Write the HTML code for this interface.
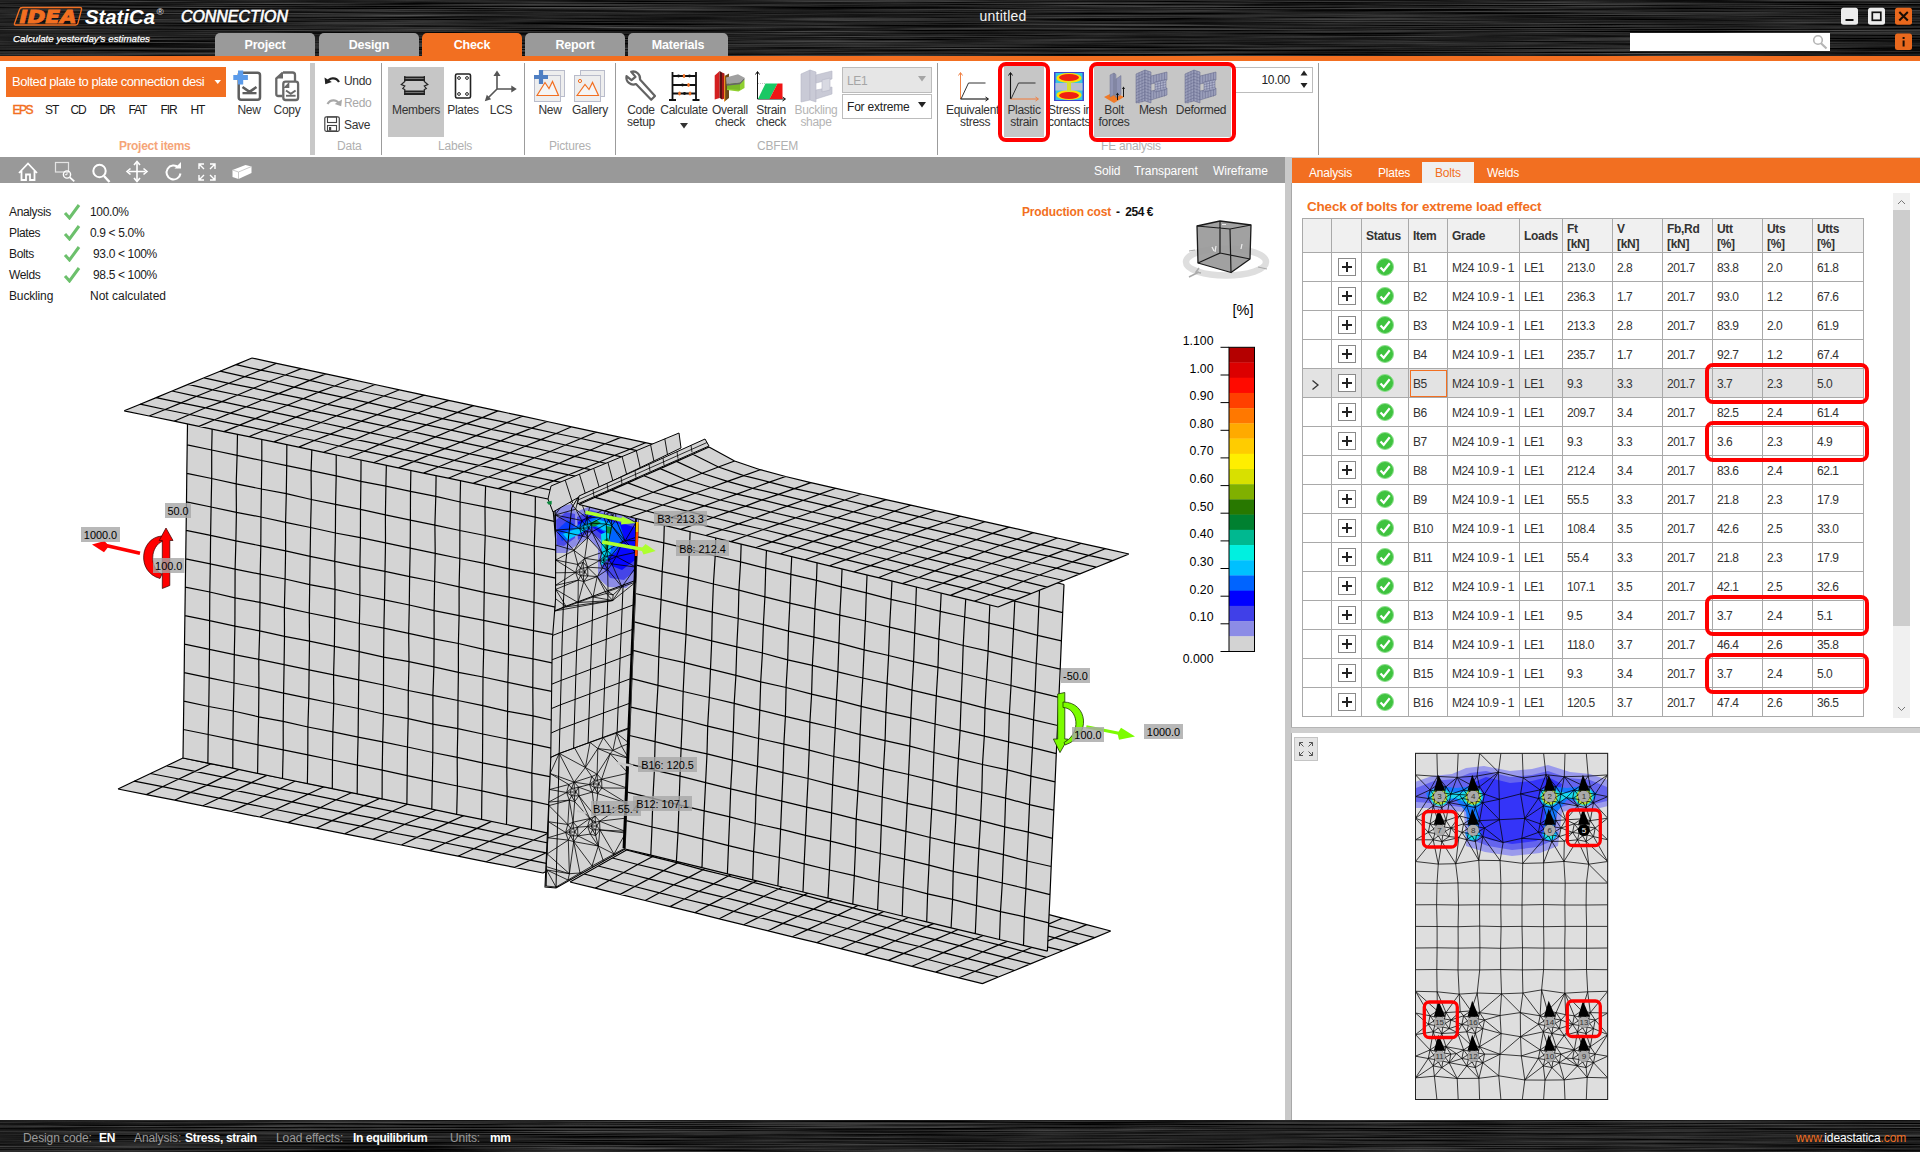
<!DOCTYPE html>
<html lang="en"><head><meta charset="utf-8"><title>IDEA StatiCa Connection - untitled</title>
<style>
*{box-sizing:border-box;margin:0;padding:0}
html,body{width:1920px;height:1152px;overflow:hidden;background:#fff}
body{font-family:"Liberation Sans",sans-serif;font-size:12px;color:#1a1a1a;position:relative}
.abs{position:absolute}
.brushed{background-color:#0d0d0d;background-image:
 repeating-linear-gradient(180deg,rgba(255,255,255,0) 0,rgba(255,255,255,.10) 1px,rgba(255,255,255,0) 2px,rgba(255,255,255,.05) 3px,rgba(255,255,255,0) 5px,rgba(255,255,255,.13) 6px,rgba(255,255,255,0) 7px),
 repeating-linear-gradient(180deg,rgba(255,255,255,0) 0,rgba(255,255,255,.06) 2px,rgba(255,255,255,0) 3px,rgba(255,255,255,.09) 4px,rgba(255,255,255,0) 11px),
 linear-gradient(90deg,rgba(255,255,255,.04),rgba(255,255,255,0) 30%,rgba(255,255,255,.05) 60%,rgba(255,255,255,0))}
#hdr{left:0;top:0;width:1920px;height:56px}
#oline{left:0;top:56px;width:1920px;height:5px;background:#f26f21}
.tab{position:absolute;top:33px;height:23px;width:100px;background:#9a9a9a;color:#fff;font-weight:bold;font-size:12.500px;text-align:center;line-height:24px;border-radius:5px 5px 0 0;letter-spacing:-.2px}
.tab.on{background:#f26f21}
#ribbon{left:0;top:61px;width:1920px;height:95px;background:#fff}
.rl{position:absolute;margin-top:2px;font-size:12px;color:#333;text-align:center;line-height:11.7px;white-space:nowrap;letter-spacing:-.3px}
.grp{position:absolute;top:139px;font-size:12px;color:#b0b0b0;text-align:center;white-space:nowrap;letter-spacing:-.2px}
.vsep{position:absolute;top:63px;height:92px;width:1px;background:#9c9c9c}
#tbar{left:0;top:157px;width:1285px;height:26px;background:#999}
#split{left:1285px;top:157px;width:7px;height:963px;background:#c9c9c9}
#rtabs{left:1291.500px;top:157.500px;width:629px;height:25.500px;background:#f26f21}
.rt{position:absolute;top:166px;font-size:12px;color:#fff;letter-spacing:-.2px;white-space:nowrap}
#status{left:0;top:1120px;width:1920px;height:32px}
.st{position:absolute;top:1131px;font-size:12px;white-space:nowrap;letter-spacing:-.1px}
.info{position:absolute;font-size:12px;color:#1a1a1a;white-space:nowrap;letter-spacing:-.35px}
table.bt{position:absolute;left:1302px;top:218px;border-collapse:collapse;font-size:12px;color:#333;table-layout:fixed}
table.bt td,table.bt th{border:1px solid #a9a9a9;height:29px;padding:2px 0 0 4px;text-align:left;white-space:nowrap;overflow:hidden;letter-spacing:-.45px;font-weight:normal}
table.bt th{background:#f0f0f0;font-weight:bold;height:34px;line-height:14.5px;color:#333;letter-spacing:-.3px;vertical-align:middle}
table.bt tr.sel td{background:#e3e3e3}
.pb{display:inline-block;width:18px;height:18px;border:1px solid #8a8a8a;background:#fff;position:relative;vertical-align:middle;margin-left:2px;top:-1px}
.pb:before{content:"";position:absolute;left:3px;top:7px;width:10px;height:2px;background:#222}
.pb:after{content:"";position:absolute;left:7px;top:3px;width:2px;height:10px;background:#222}
.ok{display:inline-block;width:18px;height:18px;border-radius:9px;background:#3fc33f;border:1.5px solid #8fe08f;position:relative;vertical-align:middle;margin-left:10px;top:-1px}
.redbox{position:absolute;border:4px solid #f00;border-radius:8px}
</style></head><body>
<svg class="abs" style="left:0;top:0px" width="1920" height="56"><filter id="br1" x="0" y="0" width="100%" height="100%" color-interpolation-filters="sRGB"><feTurbulence type="fractalNoise" baseFrequency="0.004 0.95" numOctaves="4" seed="4"/><feColorMatrix type="matrix" values="0.5 0 0 0 -0.125  0.5 0 0 0 -0.125  0.5 0 0 0 -0.125  0 0 0 0 1"/></filter><rect width="1920" height="56" fill="#111" filter="url(#br1)"/></svg>
<svg class="abs" style="left:0;top:0" width="700" height="56" viewBox="0 0 700 56">
<g font-family="Liberation Sans, sans-serif" font-style="italic" font-weight="bold">
<path d="M22.5 7.5 H80 q2 0 1.5 2 L78 23 q-.5 2 -2.5 2 H15.5 q-1.5 0 -1 -1.5 L19.5 9.5 q.6 -2 3 -2 Z" fill="none" stroke="#f26f21" stroke-width="1.3"/>
<text x="19.500" y="22.800" font-size="17" font-family="DejaVu Sans, Liberation Sans, sans-serif" fill="#f26f21" textLength="57" lengthAdjust="spacingAndGlyphs" stroke="#f26f21" stroke-width=".9">IDEA</text>
<text x="85" y="24" font-size="21" fill="#fff" textLength="70" lengthAdjust="spacingAndGlyphs">StatiCa</text>
<text x="156.500" y="15" font-size="9.500" fill="#e8e8e8" font-weight="normal">®</text>
<text x="181" y="22" font-size="16.5" fill="#fff" font-weight="normal" stroke="#fff" stroke-width=".65" textLength="107" lengthAdjust="spacingAndGlyphs">CONNECTION</text>
<text x="13" y="42" font-size="9.500" fill="#fff" font-weight="normal" stroke="#fff" stroke-width=".25" textLength="137" lengthAdjust="spacingAndGlyphs">Calculate yesterday's estimates</text>
</g></svg>
<div class="abs" style="left:903px;top:8px;width:200px;text-align:center;color:#f4f4f4;font-size:14px;letter-spacing:.25px">untitled</div>
<svg class="abs" style="left:1830px;top:0" width="90" height="56" viewBox="1830 0 90 56">
<rect x="1841" y="7.800" width="17" height="17" rx="2.500" fill="#ececec"/>
<rect x="1845.500" y="19" width="8" height="2" fill="#111"/>
<rect x="1868" y="7.800" width="17" height="17" rx="2.500" fill="#ececec"/>
<rect x="1872.300" y="12.300" width="8.500" height="8" fill="none" stroke="#111" stroke-width="1.700"/>
<rect x="1895" y="7.800" width="17" height="17" rx="2.500" fill="#e9681d"/>
<path d="M1899.300 12 l8.500 8.500 M1907.800 12 l-8.500 8.500" stroke="#1a0d05" stroke-width="2"/>
<rect x="1895" y="33.500" width="17" height="16.500" rx="2.500" fill="#e9681d"/>
<rect x="1902.6" y="37" width="2" height="2" fill="#1a0d05"/><rect x="1902.6" y="40.5" width="2" height="6" fill="#1a0d05"/>
</svg>
<div class="abs" style="left:1630px;top:33px;width:200px;height:18px;background:#fff"></div>
<svg class="abs" style="left:1810px;top:33px" width="20" height="17" viewBox="0 0 20 17"><circle cx="8" cy="7" r="4.3" fill="none" stroke="#b5b5b5" stroke-width="1.6"/><path d="M11 10.3 L16.5 15.5" stroke="#b5b5b5" stroke-width="2.2"/></svg>
<div class="tab" style="left:215px">Project</div>
<div class="tab" style="left:319px">Design</div>
<div class="tab on" style="left:422px">Check</div>
<div class="tab" style="left:525px">Report</div>
<div class="tab" style="left:628px">Materials</div>
<div id="oline" class="abs"></div>
<div id="ribbon" class="abs"></div>
<div class="abs" style="left:6px;top:67px;width:220px;height:30px;background:#f26f21;color:#fff;font-size:13px;line-height:30px;padding-left:6px;letter-spacing:-.45px;white-space:nowrap">Bolted plate to plate connection desi</div>
<svg class="abs" style="left:214px;top:79px" width="8" height="6"><path d="M.5 1 h6.5 l-3.25 4z" fill="#fff"/></svg>
<div class="abs" style="left:12.5px;top:103px;font-size:12px;color:#f26f21;letter-spacing:-1.1px;-webkit-text-stroke:.45px #f26f21;letter-spacing:-1.5px;">EPS</div>
<div class="abs" style="left:45px;top:103px;font-size:12px;color:#1a1a1a;letter-spacing:-1.1px;">ST</div>
<div class="abs" style="left:70.5px;top:103px;font-size:12px;color:#1a1a1a;letter-spacing:-1.1px;">CD</div>
<div class="abs" style="left:99.5px;top:103px;font-size:12px;color:#1a1a1a;letter-spacing:-1.1px;">DR</div>
<div class="abs" style="left:128.5px;top:103px;font-size:12px;color:#1a1a1a;letter-spacing:-1.1px;">FAT</div>
<div class="abs" style="left:160.5px;top:103px;font-size:12px;color:#1a1a1a;letter-spacing:-1.1px;">FIR</div>
<div class="abs" style="left:190.5px;top:103px;font-size:12px;color:#1a1a1a;letter-spacing:-1.1px;">HT</div>
<div class="grp" style="left:119px;color:#f5a578;font-weight:bold;letter-spacing:-.3px">Project items</div>
<svg class="abs" style="left:232px;top:66px" width="76" height="40" viewBox="232 66 76 40">
<rect x="238.700" y="72.700" width="21.300" height="27" rx="2.500" fill="#fff" stroke="#5e5e5e" stroke-width="2.500"/>
<path d="M242.500 87 l7 4.800 l7 -4.800" fill="none" stroke="#5e5e5e" stroke-width="2.600"/><rect x="242.500" y="92" width="14" height="2.300" fill="#5e5e5e"/>
<path d="M240.600 70.600 v13.800 M233.300 77.500 h14.600" stroke="#5b9bea" stroke-width="5.200"/>
<path d="M283 72.500 h9.500 a2.500 2.500 0 0 1 2.500 2.500 v6 M276.300 94 v-15.500 l6.500 -6" fill="none" stroke="#686868" stroke-width="2.300"/>
<path d="M276.300 94 q0 2 2 2 h4" fill="none" stroke="#686868" stroke-width="2.300"/>
<path d="M283 72 v6.500 h-6.500z" fill="#686868"/>
<rect x="283.300" y="81.700" width="14.800" height="18.300" rx="2.300" fill="#fff" stroke="#686868" stroke-width="2.300"/>
<path d="M283.300 88 l6 -6.300 v6.300z" fill="#686868"/>
<path d="M286 90.500 l4.800 3.300 l4.800 -3.300" fill="none" stroke="#686868" stroke-width="2"/><rect x="286" y="94.800" width="9.600" height="1.900" fill="#686868"/>
</svg>
<div class="rl" style="left:229px;top:103px;width:40px">New</div>
<div class="rl" style="left:267px;top:103px;width:40px">Copy</div>
<div class="abs" style="left:310px;top:63px;width:5px;height:92px;background:#c8c8c8"></div>
<svg class="abs" style="left:322px;top:70px" width="22" height="64" viewBox="322 70 22 64">
<path d="M327 82.500 c2 -5 9 -6 12 -.5" fill="none" stroke="#222" stroke-width="2.200"/><path d="M324.500 77.500 l.8 6.800 l6.500 -2.200z" fill="#222"/>
<path d="M339.500 104.500 c-2 -5 -9 -6 -12 -.5" fill="none" stroke="#a8a8a8" stroke-width="2.200"/><path d="M342 99.500 l-.8 6.800 l-6.500 -2.200z" fill="#a8a8a8"/>
<rect x="324.800" y="116.800" width="14.500" height="14.500" rx="1.500" fill="#fff" stroke="#444" stroke-width="1.200"/>
<rect x="327.500" y="117" width="9" height="5.500" fill="none" stroke="#444" stroke-width="1.100"/><rect x="327.500" y="125.500" width="9" height="5.500" fill="none" stroke="#444" stroke-width="1.100"/><rect x="329" y="127" width="2.200" height="3.500" fill="#444"/>
</svg>
<div class="rl" style="left:344px;top:74px;">Undo</div>
<div class="rl" style="left:344px;top:96px;color:#a8a8a8">Redo</div>
<div class="rl" style="left:344px;top:118px;">Save</div>
<div class="grp" style="left:337px">Data</div>
<div class="vsep" style="left:381px"></div>
<div class="abs" style="left:388px;top:67px;width:56px;height:70px;background:#c6c6c6"></div>
<svg class="abs" style="left:388px;top:66px" width="136" height="40" viewBox="388 66 136 40">
<g stroke="#222" fill="none"><path d="M404 77.500 h21 M404 80 h21 M404 91.500 h21 M404 94 h21" stroke-width="1.800"/>
<path d="M404.800 76 v5.500 l-3.500 3 l3.500 1.500 l-2 2.500 l2 1 v5.500 M424.300 76 v5.500 l3.500 3 l-3.500 1.500 l2 2.500 l-2 1 v5.500" stroke-width="1.200"/></g>
<rect x="455.500" y="74" width="15" height="24" rx="1.500" fill="#fff" stroke="#222" stroke-width="1.600"/>
<g fill="none" stroke="#222" stroke-width="1"><circle cx="459" cy="78" r="1.400"/><circle cx="467" cy="78" r="1.400"/><circle cx="459" cy="94" r="1.400"/><circle cx="467" cy="94" r="1.400"/></g>
<g stroke="#555" stroke-width="1.600" fill="#555"><path d="M497 89 V73 M497 89 H514 M497 89 L487 99" fill="none"/><path d="M497 70.500 l3.600 5.500 h-7.200z M516.800 89 l-5.500 3.600 v-7.200z M484.800 101.200 l2 -6.400 l4.400 4.400z" stroke="none"/></g>
</svg>
<div class="rl" style="left:388px;top:103px;width:56px">Members</div>
<div class="rl" style="left:443px;top:103px;width:40px">Plates</div>
<div class="rl" style="left:481px;top:103px;width:40px">LCS</div>
<div class="grp" style="left:438px">Labels</div>
<div class="vsep" style="left:524px"></div>
<svg class="abs" style="left:530px;top:66px" width="84" height="40" viewBox="530 66 84 40">
<g fill="#eee" stroke="#b9bccb" stroke-width="1"><rect x="540.500" y="70.500" width="24" height="26"/><rect x="534.500" y="75.500" width="26" height="26"/>
<rect x="580.500" y="70.500" width="24" height="26"/><rect x="574.500" y="75.500" width="26" height="26"/></g>
<path d="M537 95.500 l8 -13 l4 6 l3.500 -7 l6 14z" fill="#f5f5f5" stroke="#f26f21" stroke-width="1.200"/>
<path d="M577 95.500 l8 -11 l4 5 l3.500 -7 l6 13z" fill="#f5f5f5" stroke="#f26f21" stroke-width="1.200"/><circle cx="580" cy="81" r="1.600" fill="none" stroke="#f26f21" stroke-width="1"/>
<path d="M541 70 v14 M534 77 h14" stroke="#4f7fc3" stroke-width="4.200"/>
</svg>
<div class="rl" style="left:530px;top:103px;width:40px">New</div>
<div class="rl" style="left:568px;top:103px;width:44px">Gallery</div>
<div class="grp" style="left:549px">Pictures</div>
<div class="vsep" style="left:615px"></div>
<svg class="abs" style="left:620px;top:66px" width="226" height="40" viewBox="620 66 226 40">
<g fill="#fff" stroke="#636363" stroke-width="2.200" stroke-linejoin="round"><path d="M640 79.500 L655 96 l-3.800 3.800 L636 84 a7 7 0 0 1 -9.500 -7.800 l5 4 l4 -3.300 l-4.300 -5.200 a7 7 0 0 1 8.800 7.800z"/></g>
<g stroke="#111" stroke-width="1.800" fill="none"><path d="M672.500 72 v28 M696 72 v28 M669 100 h7 M692.500 100 h7 M672.500 76 h23.500 M672.500 85 h23.500 M672.500 93.500 h23.500" /></g>
<g fill="#111"><circle cx="678.500" cy="76" r="1.400"/><circle cx="689.500" cy="76" r="1.400"/><circle cx="682.500" cy="85" r="1.400"/><circle cx="684.500" cy="93.500" r="1.400"/></g>
<g fill="#f26f21"><ellipse cx="684" cy="76" rx="1.300" ry="2"/><ellipse cx="688.500" cy="85" rx="1.300" ry="2"/><ellipse cx="679.500" cy="93.500" rx="1.300" ry="2"/><ellipse cx="690" cy="93.500" rx="1.300" ry="2"/></g>
<path d="M714.700 75.500 l5 -4.500 v27 l-5 1.500z" fill="#d42020"/><path d="M719.700 71 l2.300 1.500 v27 l-2.300 -1.500z" fill="#5a1010"/><path d="M722 72.500 l2.500 1 v25 l-2.500 1z" fill="#a81818"/>
<path d="M724.500 76 l4.500 -2.500 v24.500 l-4.500 3.500z" fill="#6b4a1a"/><path d="M724 76 l1.200 -.5 v25.500 l-1.200 .8z" fill="#f09020"/>
<path d="M727 84 l13 -1.500 l4.500 -3 v8.500 l-6 3.500 l-11.500 -1.500z" fill="#8fd030"/><path d="M727 84 l13 -1.500 v7.500 l-13 -1.200z" fill="#7ab828"/>
<path d="M726 77.500 l12 -3.200 l6.500 3.500 l-4.500 4.800 l-13.500 1.500z" fill="#a0a0a0"/><path d="M726.500 84 l13.500 -1.500 l4.500 -4.700 v1.800 l-4.500 4.700 l-13.500 1.500z" fill="#666"/>
<g stroke="#111" stroke-width="1" fill="none"><path d="M757.500 99 V72 M757.500 99 H785"/><path d="M755.500 74.500 l2 -3 l2 3 M782.500 97 l3 2 l-3 2"/></g>
<path d="M758 99 l7.500 -15.500 h12 l-8 15.500z" fill="#19c864"/><path d="M769.500 99 l8 -15.500 h5 v15.500z" fill="#f01414"/><path d="M758 83.500 h8" stroke="#999" stroke-width=".6" stroke-dasharray="1 1"/>
<g fill="#c9cad6" stroke="#b5b7c6" stroke-width=".6"><path d="M801 74 l9 -4 v30 l-9 2z"/><path d="M810 70 l6 2 v30 l-6 -2z"/><path d="M816 75 l16 -4 v8 l-16 4z M816 90 l16 -3 v7 l-16 5z"/><path d="M822 80 l8 -2 v12 l-8 2z" fill="#d8d9e2"/></g>
</svg>
<div class="rl" style="left:621px;top:103px;width:40px">Code<br>setup</div>
<div class="rl" style="left:659px;top:103px;width:50px">Calculate</div>
<svg class="abs" style="left:680px;top:123px" width="9" height="6"><path d="M0 0 h8 l-4 5.500z" fill="#333"/></svg>
<div class="rl" style="left:710px;top:103px;width:40px">Overall<br>check</div>
<div class="rl" style="left:751px;top:103px;width:40px">Strain<br>check</div>
<div class="rl" style="left:791px;top:103px;width:50px;color:#b4b4b4">Buckling<br>shape</div>
<div class="abs" style="left:842px;top:67px;width:90px;height:26px;background:#e6e6e6;border:1px solid #bcbcbc;color:#a5a5a5;font-size:12px;line-height:26px;padding-left:4px;letter-spacing:-.3px">LE1</div>
<svg class="abs" style="left:918px;top:76px" width="9" height="6"><path d="M0 0 h8 l-4 5.500z" fill="#a5a5a5"/></svg>
<div class="abs" style="left:842px;top:94px;width:90px;height:25px;background:#fff;border:1px solid #bcbcbc;color:#222;font-size:12px;line-height:25px;padding-left:4px;letter-spacing:-.2px">For extreme</div>
<svg class="abs" style="left:918px;top:102px" width="9" height="6"><path d="M0 0 h8 l-4 5.500z" fill="#222"/></svg>
<div class="grp" style="left:757px">CBFEM</div>
<div class="vsep" style="left:937px"></div>
<div class="abs" style="left:1004px;top:66px;width:40px;height:71px;background:#c6c6c6"></div>
<div class="abs" style="left:1094px;top:66px;width:137px;height:71px;background:#c6c6c6"></div>
<div class="abs" style="left:1233px;top:67px;width:80px;height:26px;border:1px solid #bcbcbc;background:#fff;font-size:12px;line-height:24px;text-align:right;padding-right:22px;color:#222;letter-spacing:-.3px">10.00</div>
<svg class="abs" style="left:1300px;top:70px" width="9" height="20"><path d="M.5 5.500 h7 l-3.500 -5z M.5 13 h7 l-3.500 5z" fill="#222"/></svg>
<svg class="abs" style="left:940px;top:66px" width="296" height="40" viewBox="940 66 296 40">
<g fill="none"><path d="M960.500 99 V73" stroke="#f08246" stroke-width="1"/><path d="M958.500 75.500 l2 -3 l2 3" stroke="#f08246" stroke-width="1"/><path d="M960.500 99 H988" stroke="#111" stroke-width="1.100"/><path d="M985.500 97 l3 2 l-3 2" stroke="#111" stroke-width="1"/><path d="M961 99 l7.500 -16 h17" stroke="#333" stroke-width="1"/></g>
<g fill="none"><path d="M1010.500 99 V73" stroke="#111" stroke-width="1.100"/><path d="M1008.500 75.500 l2 -3 l2 3" stroke="#111" stroke-width="1"/><path d="M1010.500 99 H1038" stroke="#f08246" stroke-width="1.100"/><path d="M1035.500 97 l3 2 l-3 2" stroke="#f08246" stroke-width="1"/><path d="M1011 99 l7.500 -16 h17" stroke="#333" stroke-width="1"/></g>
<rect x="1054" y="72" width="30" height="29" fill="#3a46d0"/><rect x="1055.500" y="73" width="27" height="27" fill="#36c8e0"/>
<ellipse cx="1069" cy="78" rx="12.500" ry="5" fill="#ffe000"/><ellipse cx="1069" cy="77.500" rx="10" ry="3.500" fill="#f02010"/>
<ellipse cx="1069" cy="95" rx="12.500" ry="5" fill="#ffe000"/><ellipse cx="1069" cy="95.500" rx="10" ry="3.500" fill="#f02010"/>
<rect x="1055.500" y="83" width="11.500" height="7.500" fill="#b9bdd2"/><rect x="1071" y="83" width="11.500" height="7.500" fill="#b9bdd2"/><rect x="1067" y="81" width="4" height="11" fill="#d8e030"/>
<path d="M1104 97 l10 -5 l10 5 l-10 6z" fill="#f07a28"/><path d="M1110 75 l4 -2 v22 l-4 2z M1114 73 l2 1.500 v22 l-2 -1.500z M1116 79 l5 -3.500 v19 l-5 3z" fill="#9094b4" stroke="#70748f" stroke-width=".5"/>
<path d="M1117.500 100 v-6 M1123.500 97 v-9" stroke="#111" stroke-width="1"/><path d="M1116 95 l1.500 -2.500 l1.500 2.500z M1122 89 l1.500 -2.500 l1.500 2.500z" fill="#111"/>
<g fill="#9a9eba" stroke="#5f6386" stroke-width=".5"><path d="M1136 74 l9 -4 v31 l-9 2z"/><path d="M1145 70 l6 2 v31 l-6 -2z"/><path d="M1151 76 l16 -4 v8 l-16 4z M1151 91 l16 -3 v7 l-16 5z"/><path d="M1155 82 l11 -2.500 v10 l-11 2.500z" fill="#aeb2cc"/></g><path d="M1136 77.1 l9 -4 l6 2 M1136 80.2 l9 -4 l6 2 M1136 83.3 l9 -4 l6 2 M1136 86.4 l9 -4 l6 2 M1136 89.5 l9 -4 l6 2 M1136 92.6 l9 -4 l6 2 M1136 95.7 l9 -4 l6 2 M1136 98.8 l9 -4 l6 2 M1136 101.9 l9 -4 l6 2 M1139 72.7 v31 M1142 71.3 v31 M1148 71 v31 M1153.7 75.3 v8 M1153.7 90.5 v8 M1156.4 74.7 v8 M1156.4 90.0 v8 M1159.1 74.0 v8 M1159.1 89.5 v8 M1161.8 73.3 v8 M1161.8 89.0 v8 M1164.5 72.7 v8 M1164.5 88.5 v8 M1155 84.5 l11 -2.500 M1155 87.0 l11 -2.500 M1155 89.5 l11 -2.500 M1157.8 81.4 v10 M1160.5 80.8 v10 M1163.2 80.1 v10" fill="none" stroke="#5f6386" stroke-width=".45"/>
<g fill="#9a9eba" stroke="#5f6386" stroke-width=".5"><path d="M1185 74 l9 -4 v31 l-9 2z"/><path d="M1194 70 l6 2 v31 l-6 -2z"/><path d="M1200 76 l16 -4 v8 l-16 4z M1200 91 l16 -3 v7 l-16 5z"/><path d="M1204 82 l11 -2.500 v10 l-11 2.500z" fill="#aeb2cc"/></g><path d="M1185 77.1 l9 -4 l6 2 M1185 80.2 l9 -4 l6 2 M1185 83.3 l9 -4 l6 2 M1185 86.4 l9 -4 l6 2 M1185 89.5 l9 -4 l6 2 M1185 92.6 l9 -4 l6 2 M1185 95.7 l9 -4 l6 2 M1185 98.8 l9 -4 l6 2 M1185 101.9 l9 -4 l6 2 M1188 72.7 v31 M1191 71.3 v31 M1197 71 v31 M1202.7 75.3 v8 M1202.7 90.5 v8 M1205.4 74.7 v8 M1205.4 90.0 v8 M1208.1 74.0 v8 M1208.1 89.5 v8 M1210.8 73.3 v8 M1210.8 89.0 v8 M1213.5 72.7 v8 M1213.5 88.5 v8 M1204 84.5 l11 -2.500 M1204 87.0 l11 -2.500 M1204 89.5 l11 -2.500 M1206.8 81.4 v10 M1209.5 80.8 v10 M1212.2 80.1 v10" fill="none" stroke="#5f6386" stroke-width=".45"/>
</svg>
<div class="rl" style="left:943px;top:103px;width:56px;overflow:hidden;text-align:left;padding-left:3px">Equivalent<br><span style="padding-left:14px">stress</span></div>
<div class="rl" style="left:1004px;top:103px;width:40px">Plastic<br>strain</div>
<div class="rl" style="left:1048px;top:103px;width:42px;overflow:hidden;text-align:left">Stress in<br>contacts</div>
<div class="rl" style="left:1094px;top:103px;width:40px">Bolt<br>forces</div>
<div class="rl" style="left:1133px;top:103px;width:40px">Mesh</div>
<div class="rl" style="left:1171px;top:103px;width:60px">Deformed</div>
<div class="grp" style="left:1101px">FE analysis</div>
<div class="redbox" style="left:998px;top:62px;width:52px;height:80px"></div>
<div class="redbox" style="left:1089px;top:62px;width:147px;height:80px"></div>
<div class="vsep" style="left:1318px"></div>
<div class="abs" style="left:0;top:156.500px;width:1920px;height:1px;background:#d0d0d0"></div>
<div id="tbar" class="abs"></div>
<svg class="abs" style="left:0;top:157px" width="270" height="26" viewBox="0 157 270 26">
<g fill="none" stroke="#fff" stroke-width="1.800" stroke-linejoin="miter">
<path d="M19 173 l9 -9.500 l9 9.500 M21.500 171 v9 h4.500 v-5.500 h4 v5.500 h4.500 v-9" />
<rect x="55.500" y="162.500" width="13" height="9.500" stroke="#e4e4e4" stroke-width="1.200"/>
<circle cx="67" cy="174.500" r="3.600" stroke-width="1.400"/><path d="M69.800 177.300 l4.500 4" stroke-width="1.800"/><path d="M67 172.500 v2.200 h-2" stroke-width=".9"/>
<circle cx="99.500" cy="171" r="6.200" stroke-width="2"/><path d="M104 176 l5.500 6" stroke-width="2.400"/>
<path d="M137 163 v17 M128.500 171.500 h17" stroke-width="1.600"/><path d="M134 165 l3 -3.500 l3 3.500 M134 178 l3 3.500 l3 -3.500 M130.500 168.500 l-3.500 3 l3.500 3 M143.500 168.500 l3.500 3 l-3.500 3" stroke-width="1.600"/>
<path d="M178.500 167.500 a7 7 0 1 0 2 6" stroke-width="2"/><path d="M181 162 v6.500 h-6.500z" fill="#fff" stroke="none"/>
<path d="M199 169 v-5 h5 M199.500 164.500 l4.500 4.500 M215 169 v-5 h-5 M214.500 164.500 l-4.500 4.500 M199 175 v5 h5 M199.500 179.500 l4.500 -4.500 M215 175 v5 h-5 M214.500 179.500 l-4.500 -4.500" stroke-width="1.400"/>
</g>
<path d="M232.500 170 l13 -5 l6 1.500 v6.500 l-13 6 l-6 -2z" fill="#fff"/><path d="M232.500 170 l6 2 l13 -5.500 M238.500 172 v7" stroke="#bbb" stroke-width=".8" fill="none"/>
</svg>
<div class="abs" style="left:1094px;top:164px;color:#fff;font-size:12px;letter-spacing:-.05px">Solid</div>
<div class="abs" style="left:1134px;top:164px;color:#fff;font-size:12px;letter-spacing:-.05px">Transparent</div>
<div class="abs" style="left:1213px;top:164px;color:#fff;font-size:12px;letter-spacing:-.05px">Wireframe</div>
<div class="info" style="left:9px;top:205px">Analysis</div>
<div class="info" style="left:90px;top:205px">100.0%</div>
<svg class="abs" style="left:63px;top:203px" width="18" height="17"><path d="M2 10 l4.500 5 l9.500 -13" fill="none" stroke="#6cc06c" stroke-width="3"/></svg>
<div class="info" style="left:9px;top:226px">Plates</div>
<div class="info" style="left:90px;top:226px">0.9 &lt; 5.0%</div>
<svg class="abs" style="left:63px;top:224px" width="18" height="17"><path d="M2 10 l4.500 5 l9.500 -13" fill="none" stroke="#6cc06c" stroke-width="3"/></svg>
<div class="info" style="left:9px;top:247px">Bolts</div>
<div class="info" style="left:93px;top:247px">93.0 &lt; 100%</div>
<svg class="abs" style="left:63px;top:245px" width="18" height="17"><path d="M2 10 l4.500 5 l9.500 -13" fill="none" stroke="#6cc06c" stroke-width="3"/></svg>
<div class="info" style="left:9px;top:268px">Welds</div>
<div class="info" style="left:93px;top:268px">98.5 &lt; 100%</div>
<svg class="abs" style="left:63px;top:266px" width="18" height="17"><path d="M2 10 l4.500 5 l9.500 -13" fill="none" stroke="#6cc06c" stroke-width="3"/></svg>
<div class="info" style="left:9px;top:289px;letter-spacing:-.15px">Buckling</div>
<div class="info" style="left:90px;top:289px;letter-spacing:0">Not calculated</div>
<div class="abs" style="left:1022px;top:205px;font-size:12px;font-weight:bold;color:#f26f21;letter-spacing:-.15px;white-space:nowrap">Production cost</div>
<div class="abs" style="left:1116px;top:205px;font-size:12px;font-weight:bold;color:#111;letter-spacing:-.45px;white-space:nowrap">-&nbsp; 254 €</div>
<svg class="abs" style="left:0;top:183px" width="1284" height="937" viewBox="0 183 1284 937" font-family="Liberation Sans, sans-serif" shape-rendering="auto">
<path d="M118.0 789.0 L146.3 794.6 L174.7 800.2 L203.0 805.8 L231.3 811.4 L259.7 817.0 L288.0 822.6 L316.3 828.2 L344.7 833.8 L373.0 839.4 L401.3 845.0 L429.7 850.6 L458.0 856.2 L486.3 861.8 L514.7 867.4 L543.0 873.0 L558.6 865.8 L574.2 858.5 L589.9 851.2 L605.5 844.0 L621.1 836.8 L636.8 829.5 L652.4 822.2 L668.0 815.0 L640.0 809.1 L612.0 803.3 L584.0 797.4 L556.0 791.5 L528.0 785.7 L500.0 779.8 L472.0 773.9 L444.0 768.1 L416.0 762.2 L388.0 756.3 L360.0 750.5 L332.0 744.6 L304.0 738.7 L276.0 732.9 L248.0 727.0 L231.8 734.8 L215.5 742.5 L199.2 750.2 L183.0 758.0 L166.8 765.8 L150.5 773.5 L134.2 781.2Z" fill="#d4d4d4" stroke="none"/>
<path d="M118.0 789.0 L134.2 781.2 L150.5 773.5 L166.8 765.8 L183.0 758.0 L199.2 750.2 L215.5 742.5 L231.8 734.8 L248.0 727.0 M146.3 794.6 L162.5 786.7 L178.8 779.0 L195.0 771.4 L210.9 763.7 L227.1 756.0 L243.4 748.1 L259.8 740.7 L276.0 732.9 M174.7 800.2 L190.6 792.4 L207.1 785.1 L223.2 777.1 L239.6 769.2 L255.7 761.7 L271.5 753.9 L287.7 746.6 L304.0 738.7 M203.0 805.8 L219.0 798.2 L235.3 790.4 L251.4 782.6 L267.3 775.1 L283.7 767.5 L299.7 759.9 L315.9 752.1 L332.0 744.6 M231.3 811.4 L247.6 803.9 L263.4 796.2 L279.6 788.7 L295.8 780.8 L312.0 773.1 L327.8 765.8 L343.7 758.1 L360.0 750.5 M259.7 817.0 L275.5 809.5 L291.9 801.9 L308.0 794.2 L323.9 786.7 L339.9 779.1 L356.1 771.7 L371.9 764.0 L388.0 756.3 M288.0 822.6 L303.8 815.2 L320.1 807.7 L336.2 799.8 L351.9 792.5 L367.8 784.8 L383.8 777.1 L399.8 769.9 L416.0 762.2 M316.3 828.2 L332.1 820.6 L348.2 813.4 L364.0 805.6 L380.2 798.3 L396.3 790.8 L412.0 783.1 L428.0 775.8 L444.0 768.1 M344.7 833.8 L360.8 826.1 L376.3 818.7 L392.3 811.3 L408.4 803.7 L424.0 796.3 L440.1 788.9 L456.3 781.5 L472.0 773.9 M373.0 839.4 L388.9 832.0 L404.8 824.3 L420.8 817.2 L436.7 809.7 L452.3 802.1 L468.1 794.8 L483.9 787.0 L500.0 779.8 M401.3 845.0 L417.0 837.4 L432.9 829.9 L448.6 822.6 L464.5 815.3 L480.3 808.1 L496.4 800.3 L512.0 793.0 L528.0 785.7 M429.7 850.6 L445.4 843.0 L461.4 836.1 L477.0 828.4 L492.6 820.9 L508.5 813.6 L524.6 806.1 L540.0 799.1 L556.0 791.5 M458.0 856.2 L473.8 848.7 L489.5 841.3 L505.3 834.4 L521.2 826.9 L536.6 819.4 L552.3 812.2 L568.3 804.9 L584.0 797.4 M486.3 861.8 L502.0 854.3 L517.9 847.4 L533.6 840.0 L549.3 832.7 L564.7 825.2 L580.5 817.7 L596.1 810.5 L612.0 803.3 M514.7 867.4 L530.2 860.2 L546.2 852.8 L561.9 845.8 L577.6 838.2 L592.9 830.8 L608.5 823.6 L624.4 816.6 L640.0 809.1 M543.0 873.0 L558.6 865.8 L574.2 858.5 L589.9 851.2 L605.5 844.0 L621.1 836.8 L636.8 829.5 L652.4 822.2 L668.0 815.0 M118.0 789.0 L146.3 794.6 L174.7 800.2 L203.0 805.8 L231.3 811.4 L259.7 817.0 L288.0 822.6 L316.3 828.2 L344.7 833.8 L373.0 839.4 L401.3 845.0 L429.7 850.6 L458.0 856.2 L486.3 861.8 L514.7 867.4 L543.0 873.0 M134.2 781.2 L162.5 786.7 L190.6 792.4 L219.0 798.2 L247.6 803.9 L275.5 809.5 L303.8 815.2 L332.1 820.6 L360.8 826.1 L388.9 832.0 L417.0 837.4 L445.4 843.0 L473.8 848.7 L502.0 854.3 L530.2 860.2 L558.6 865.8 M150.5 773.5 L178.8 779.0 L207.1 785.1 L235.3 790.4 L263.4 796.2 L291.9 801.9 L320.1 807.7 L348.2 813.4 L376.3 818.7 L404.8 824.3 L432.9 829.9 L461.4 836.1 L489.5 841.3 L517.9 847.4 L546.2 852.8 L574.2 858.5 M166.8 765.8 L195.0 771.4 L223.2 777.1 L251.4 782.6 L279.6 788.7 L308.0 794.2 L336.2 799.8 L364.0 805.6 L392.3 811.3 L420.8 817.2 L448.6 822.6 L477.0 828.4 L505.3 834.4 L533.6 840.0 L561.9 845.8 L589.9 851.2 M183.0 758.0 L210.9 763.7 L239.6 769.2 L267.3 775.1 L295.8 780.8 L323.9 786.7 L351.9 792.5 L380.2 798.3 L408.4 803.7 L436.7 809.7 L464.5 815.3 L492.6 820.9 L521.2 826.9 L549.3 832.7 L577.6 838.2 L605.5 844.0 M199.2 750.2 L227.1 756.0 L255.7 761.7 L283.7 767.5 L312.0 773.1 L339.9 779.1 L367.8 784.8 L396.3 790.8 L424.0 796.3 L452.3 802.1 L480.3 808.1 L508.5 813.6 L536.6 819.4 L564.7 825.2 L592.9 830.8 L621.1 836.8 M215.5 742.5 L243.4 748.1 L271.5 753.9 L299.7 759.9 L327.8 765.8 L356.1 771.7 L383.8 777.1 L412.0 783.1 L440.1 788.9 L468.1 794.8 L496.4 800.3 L524.6 806.1 L552.3 812.2 L580.5 817.7 L608.5 823.6 L636.8 829.5 M231.8 734.8 L259.8 740.7 L287.7 746.6 L315.9 752.1 L343.7 758.1 L371.9 764.0 L399.8 769.9 L428.0 775.8 L456.3 781.5 L483.9 787.0 L512.0 793.0 L540.0 799.1 L568.3 804.9 L596.1 810.5 L624.4 816.6 L652.4 822.2 M248.0 727.0 L276.0 732.9 L304.0 738.7 L332.0 744.6 L360.0 750.5 L388.0 756.3 L416.0 762.2 L444.0 768.1 L472.0 773.9 L500.0 779.8 L528.0 785.7 L556.0 791.5 L584.0 797.4 L612.0 803.3 L640.0 809.1 L668.0 815.0" fill="none" stroke="#000" stroke-width="1.2"/>
<path d="M570.0 882.0 L595.2 888.2 L620.2 894.4 L645.2 900.5 L670.0 906.6 L694.7 912.7 L719.3 918.8 L743.8 924.8 L768.2 930.8 L792.4 936.8 L816.6 942.7 L840.6 948.7 L864.5 954.6 L888.3 960.4 L912.0 966.3 L935.6 972.1 L959.1 977.8 L982.4 983.6 L998.4 977.0 L1014.5 970.5 L1030.5 963.9 L1046.6 957.3 L1062.6 950.7 L1078.7 944.1 L1094.8 937.6 L1110.8 931.0 L1086.6 924.6 L1062.2 918.2 L1037.8 911.7 L1013.2 905.2 L988.5 898.7 L963.7 892.1 L938.8 885.6 L913.7 878.9 L888.6 872.3 L863.3 865.6 L837.9 858.9 L812.4 852.2 L786.7 845.4 L761.0 838.6 L735.1 831.8 L709.1 824.9 L683.0 818.0 L668.9 826.0 L654.8 834.0 L640.6 842.0 L626.5 850.0 L612.4 858.0 L598.2 866.0 L584.1 874.0Z" fill="#d4d4d4" stroke="none"/>
<path d="M570.0 882.0 L584.1 874.0 L598.2 866.0 L612.4 858.0 L626.5 850.0 L640.6 842.0 L654.8 834.0 L668.9 826.0 L683.0 818.0 M595.2 888.2 L609.6 880.3 L623.7 872.5 L637.7 864.5 L652.3 856.7 L666.5 848.6 L680.5 840.9 L694.8 833.0 L709.1 824.9 M620.2 894.4 L634.8 886.5 L648.9 878.9 L663.4 870.7 L677.5 862.9 L692.2 855.4 L706.2 847.6 L721.0 839.7 L735.1 831.8 M645.2 900.5 L659.6 892.8 L673.9 884.8 L688.8 877.4 L703.1 869.8 L717.5 862.0 L732.2 853.9 L746.4 846.2 L761.0 838.6 M670.0 906.6 L684.5 899.0 L699.1 891.3 L713.6 883.9 L728.3 876.0 L743.0 868.6 L757.5 860.9 L772.1 853.1 L786.7 845.4 M694.7 912.7 L709.4 904.9 L724.1 897.4 L738.6 890.2 L753.4 882.4 L768.4 874.9 L782.9 867.3 L797.7 859.9 L812.4 852.2 M719.3 918.8 L733.9 911.3 L748.8 903.7 L763.9 896.3 L778.6 889.0 L793.6 881.3 L808.3 873.9 L823.1 866.5 L837.9 858.9 M743.8 924.8 L758.7 917.4 L773.7 910.2 L788.7 902.8 L803.8 895.1 L818.5 888.0 L833.6 880.2 L848.2 873.0 L863.3 865.6 M768.2 930.8 L783.0 923.4 L798.1 916.3 L813.5 909.1 L828.2 901.7 L843.5 894.1 L858.7 887.2 L873.4 879.8 L888.6 872.3 M792.4 936.8 L807.6 929.6 L823.0 922.5 L837.8 915.1 L853.1 907.8 L868.1 900.6 L883.5 893.2 L898.6 886.2 L913.7 878.9 M816.6 942.7 L831.6 935.5 L847.2 928.5 L862.2 921.5 L877.8 914.4 L892.8 906.9 L908.0 900.0 L923.4 892.5 L938.8 885.6 M840.6 948.7 L856.0 941.8 L871.6 934.4 L886.6 927.7 L902.2 920.5 L917.3 913.1 L933.0 906.2 L948.1 899.4 L963.7 892.1 M864.5 954.6 L880.1 947.7 L895.3 940.8 L910.8 933.8 L926.5 926.6 L942.1 919.9 L957.4 912.5 L973.0 905.6 L988.5 898.7 M888.3 960.4 L903.7 953.4 L919.3 946.5 L935.1 939.6 L950.9 932.7 L966.4 925.8 L981.9 918.8 L997.5 911.9 L1013.2 905.2 M912.0 966.3 L927.9 959.5 L943.3 952.6 L959.4 945.6 L975.1 939.0 L990.6 932.3 L1006.3 925.4 L1022.2 918.8 L1037.8 911.7 M935.6 972.1 L951.3 965.5 L967.4 958.7 L983.0 951.8 L998.7 944.9 L1014.5 938.5 L1030.5 931.5 L1046.2 925.1 L1062.2 918.2 M959.1 977.8 L975.2 971.3 L990.8 964.4 L1006.8 957.9 L1022.6 951.2 L1038.6 944.8 L1054.9 937.9 L1070.5 931.5 L1086.6 924.6 M982.4 983.6 L998.4 977.0 L1014.5 970.5 L1030.5 963.9 L1046.6 957.3 L1062.6 950.7 L1078.7 944.1 L1094.8 937.6 L1110.8 931.0 M570.0 882.0 L595.2 888.2 L620.2 894.4 L645.2 900.5 L670.0 906.6 L694.7 912.7 L719.3 918.8 L743.8 924.8 L768.2 930.8 L792.4 936.8 L816.6 942.7 L840.6 948.7 L864.5 954.6 L888.3 960.4 L912.0 966.3 L935.6 972.1 L959.1 977.8 L982.4 983.6 M584.1 874.0 L609.6 880.3 L634.8 886.5 L659.6 892.8 L684.5 899.0 L709.4 904.9 L733.9 911.3 L758.7 917.4 L783.0 923.4 L807.6 929.6 L831.6 935.5 L856.0 941.8 L880.1 947.7 L903.7 953.4 L927.9 959.5 L951.3 965.5 L975.2 971.3 L998.4 977.0 M598.2 866.0 L623.7 872.5 L648.9 878.9 L673.9 884.8 L699.1 891.3 L724.1 897.4 L748.8 903.7 L773.7 910.2 L798.1 916.3 L823.0 922.5 L847.2 928.5 L871.6 934.4 L895.3 940.8 L919.3 946.5 L943.3 952.6 L967.4 958.7 L990.8 964.4 L1014.5 970.5 M612.4 858.0 L637.7 864.5 L663.4 870.7 L688.8 877.4 L713.6 883.9 L738.6 890.2 L763.9 896.3 L788.7 902.8 L813.5 909.1 L837.8 915.1 L862.2 921.5 L886.6 927.7 L910.8 933.8 L935.1 939.6 L959.4 945.6 L983.0 951.8 L1006.8 957.9 L1030.5 963.9 M626.5 850.0 L652.3 856.7 L677.5 862.9 L703.1 869.8 L728.3 876.0 L753.4 882.4 L778.6 889.0 L803.8 895.1 L828.2 901.7 L853.1 907.8 L877.8 914.4 L902.2 920.5 L926.5 926.6 L950.9 932.7 L975.1 939.0 L998.7 944.9 L1022.6 951.2 L1046.6 957.3 M640.6 842.0 L666.5 848.6 L692.2 855.4 L717.5 862.0 L743.0 868.6 L768.4 874.9 L793.6 881.3 L818.5 888.0 L843.5 894.1 L868.1 900.6 L892.8 906.9 L917.3 913.1 L942.1 919.9 L966.4 925.8 L990.6 932.3 L1014.5 938.5 L1038.6 944.8 L1062.6 950.7 M654.8 834.0 L680.5 840.9 L706.2 847.6 L732.2 853.9 L757.5 860.9 L782.9 867.3 L808.3 873.9 L833.6 880.2 L858.7 887.2 L883.5 893.2 L908.0 900.0 L933.0 906.2 L957.4 912.5 L981.9 918.8 L1006.3 925.4 L1030.5 931.5 L1054.9 937.9 L1078.7 944.1 M668.9 826.0 L694.8 833.0 L721.0 839.7 L746.4 846.2 L772.1 853.1 L797.7 859.9 L823.1 866.5 L848.2 873.0 L873.4 879.8 L898.6 886.2 L923.4 892.5 L948.1 899.4 L973.0 905.6 L997.5 911.9 L1022.2 918.8 L1046.2 925.1 L1070.5 931.5 L1094.8 937.6 M683.0 818.0 L709.1 824.9 L735.1 831.8 L761.0 838.6 L786.7 845.4 L812.4 852.2 L837.9 858.9 L863.3 865.6 L888.6 872.3 L913.7 878.9 L938.8 885.6 L963.7 892.1 L988.5 898.7 L1013.2 905.2 L1037.8 911.7 L1062.2 918.2 L1086.6 924.6 L1110.8 931.0" fill="none" stroke="#000" stroke-width="1.2"/>
<path d="M188.0 388.0 L212.8 393.2 L237.6 398.4 L262.5 403.5 L287.3 408.7 L312.1 413.9 L336.9 419.1 L361.8 424.2 L386.6 429.4 L411.4 434.6 L436.2 439.8 L461.1 444.9 L485.9 450.1 L510.7 455.3 L535.5 460.5 L560.4 465.6 L585.2 470.8 L610.0 476.0 L609.7 504.4 L609.4 532.8 L609.1 561.2 L608.8 589.5 L608.5 617.9 L608.2 646.3 L607.8 674.7 L607.5 703.1 L607.2 731.5 L606.9 759.8 L606.6 788.2 L606.3 816.6 L606.0 845.0 L581.1 839.9 L556.2 834.8 L531.4 829.6 L506.5 824.5 L481.6 819.4 L456.7 814.3 L431.8 809.2 L406.9 804.1 L382.1 798.9 L357.2 793.8 L332.3 788.7 L307.4 783.6 L282.5 778.5 L257.6 773.4 L232.8 768.2 L207.9 763.1 L183.0 758.0 L183.4 729.5 L183.8 701.1 L184.2 672.6 L184.5 644.2 L184.9 615.7 L185.3 587.2 L185.7 558.8 L186.1 530.3 L186.5 501.8 L186.8 473.4 L187.2 444.9 L187.6 416.5Z" fill="#d4d4d4" stroke="none"/>
<path d="M188.0 388.0 L187.6 416.5 L187.2 444.9 L186.8 473.4 L186.5 501.8 L186.1 530.3 L185.7 558.8 L185.3 587.2 L184.9 615.7 L184.5 644.2 L184.2 672.6 L183.8 701.1 L183.4 729.5 L183.0 758.0 M212.8 393.2 L212.3 421.5 L211.7 450.0 L211.7 478.5 L211.1 507.0 L210.6 535.3 L210.3 563.8 L209.8 592.0 L209.6 620.6 L209.5 649.3 L209.2 677.9 L208.8 706.5 L208.2 734.5 L207.9 763.1 M237.6 398.4 L237.6 426.6 L237.1 455.4 L236.2 483.9 L236.4 512.3 L235.9 540.8 L235.1 569.1 L235.0 597.8 L234.9 626.2 L234.3 654.7 L234.0 683.0 L233.3 711.0 L232.9 739.7 L232.8 768.2 M262.5 403.5 L261.8 432.2 L261.8 460.5 L261.4 489.0 L261.0 517.0 L260.8 545.9 L260.2 574.2 L260.0 602.4 L259.7 630.9 L258.8 659.4 L258.9 687.8 L258.6 716.8 L258.0 744.8 L257.6 773.4 M287.3 408.7 L286.9 437.3 L286.7 465.7 L286.3 493.7 L285.6 522.3 L285.6 550.8 L285.1 579.0 L284.4 607.6 L284.5 636.4 L284.1 664.6 L283.6 693.1 L283.2 721.3 L283.2 749.8 L282.5 778.5 M312.1 413.9 L312.1 442.6 L311.1 470.7 L311.3 499.5 L310.6 527.5 L310.1 556.4 L309.7 584.6 L309.3 613.0 L309.5 641.1 L309.1 669.8 L308.8 698.4 L307.9 727.0 L307.8 754.8 L307.4 783.6 M336.9 419.1 L336.2 447.5 L336.2 475.8 L335.6 504.3 L335.4 533.0 L334.8 561.4 L335.0 589.4 L334.7 618.2 L334.4 646.4 L333.6 674.9 L333.7 703.5 L332.9 731.8 L332.5 760.0 L332.3 788.7 M361.8 424.2 L361.1 452.9 L360.9 481.4 L360.5 509.4 L360.4 537.7 L359.9 566.7 L359.9 595.0 L359.4 623.5 L359.2 651.7 L358.7 679.8 L358.4 708.5 L358.1 737.1 L357.4 765.1 L357.2 793.8 M386.6 429.4 L386.5 457.6 L385.9 486.2 L385.4 514.9 L385.5 542.9 L385.0 571.4 L384.5 599.9 L383.9 628.2 L383.6 657.1 L383.5 685.0 L383.4 714.0 L382.7 741.8 L382.2 770.2 L382.1 798.9 M411.4 434.6 L411.0 462.7 L410.5 491.3 L410.4 520.1 L410.2 548.2 L409.6 576.7 L409.3 605.0 L408.7 633.4 L409.0 661.7 L408.3 690.5 L408.2 718.6 L407.5 747.0 L407.2 775.6 L406.9 804.1 M436.2 439.8 L436.2 468.4 L435.8 496.3 L434.9 525.2 L435.2 553.4 L434.6 581.5 L434.1 610.6 L434.1 638.9 L433.9 666.9 L432.9 695.3 L432.9 724.1 L432.8 752.5 L432.3 780.9 L431.8 809.2 M461.1 444.9 L460.7 473.4 L460.1 502.0 L459.9 530.5 L459.8 558.5 L459.1 586.8 L459.1 615.6 L458.4 643.5 L458.4 672.3 L458.0 700.5 L457.8 728.7 L457.2 757.4 L457.4 786.0 L456.7 814.3 M485.9 450.1 L485.8 478.5 L485.0 506.8 L485.2 535.5 L484.4 563.4 L484.2 592.3 L483.8 620.4 L483.7 649.3 L483.0 677.0 L482.8 705.7 L482.7 734.0 L482.5 762.8 L481.9 790.8 L481.6 819.4 M510.7 455.3 L510.7 483.6 L510.3 511.9 L509.5 540.7 L509.3 569.2 L509.1 597.1 L508.6 625.7 L508.5 654.4 L507.9 682.4 L507.6 711.3 L507.2 739.0 L506.8 767.6 L507.1 796.4 L506.5 824.5 M535.5 460.5 L535.4 489.2 L535.2 517.1 L534.3 546.0 L534.4 573.7 L534.0 602.4 L533.5 630.7 L533.0 658.9 L532.8 687.6 L533.0 715.8 L532.6 744.2 L531.9 773.1 L531.9 801.2 L531.4 829.6 M560.4 465.6 L559.7 494.0 L559.6 522.7 L559.2 550.7 L559.4 578.9 L558.7 607.8 L558.6 635.7 L557.8 664.1 L558.1 692.6 L557.7 721.5 L557.1 749.4 L557.2 778.1 L556.4 806.5 L556.2 834.8 M585.2 470.8 L584.7 499.1 L584.2 527.8 L584.5 556.1 L584.2 584.0 L583.4 612.8 L583.6 641.5 L582.9 669.4 L582.6 697.9 L582.7 726.1 L582.3 754.9 L582.0 783.3 L581.5 811.4 L581.1 839.9 M610.0 476.0 L609.7 504.4 L609.4 532.8 L609.1 561.2 L608.8 589.5 L608.5 617.9 L608.2 646.3 L607.8 674.7 L607.5 703.1 L607.2 731.5 L606.9 759.8 L606.6 788.2 L606.3 816.6 L606.0 845.0 M188.0 388.0 L212.8 393.2 L237.6 398.4 L262.5 403.5 L287.3 408.7 L312.1 413.9 L336.9 419.1 L361.8 424.2 L386.6 429.4 L411.4 434.6 L436.2 439.8 L461.1 444.9 L485.9 450.1 L510.7 455.3 L535.5 460.5 L560.4 465.6 L585.2 470.8 L610.0 476.0 M187.6 416.5 L212.3 421.5 L237.6 426.6 L261.8 432.2 L286.9 437.3 L312.1 442.6 L336.2 447.5 L361.1 452.9 L386.5 457.6 L411.0 462.7 L436.2 468.4 L460.7 473.4 L485.8 478.5 L510.7 483.6 L535.4 489.2 L559.7 494.0 L584.7 499.1 L609.7 504.4 M187.2 444.9 L211.7 450.0 L237.1 455.4 L261.8 460.5 L286.7 465.7 L311.1 470.7 L336.2 475.8 L360.9 481.4 L385.9 486.2 L410.5 491.3 L435.8 496.3 L460.1 502.0 L485.0 506.8 L510.3 511.9 L535.2 517.1 L559.6 522.7 L584.2 527.8 L609.4 532.8 M186.8 473.4 L211.7 478.5 L236.2 483.9 L261.4 489.0 L286.3 493.7 L311.3 499.5 L335.6 504.3 L360.5 509.4 L385.4 514.9 L410.4 520.1 L434.9 525.2 L459.9 530.5 L485.2 535.5 L509.5 540.7 L534.3 546.0 L559.2 550.7 L584.5 556.1 L609.1 561.2 M186.5 501.8 L211.1 507.0 L236.4 512.3 L261.0 517.0 L285.6 522.3 L310.6 527.5 L335.4 533.0 L360.4 537.7 L385.5 542.9 L410.2 548.2 L435.2 553.4 L459.8 558.5 L484.4 563.4 L509.3 569.2 L534.4 573.7 L559.4 578.9 L584.2 584.0 L608.8 589.5 M186.1 530.3 L210.6 535.3 L235.9 540.8 L260.8 545.9 L285.6 550.8 L310.1 556.4 L334.8 561.4 L359.9 566.7 L385.0 571.4 L409.6 576.7 L434.6 581.5 L459.1 586.8 L484.2 592.3 L509.1 597.1 L534.0 602.4 L558.7 607.8 L583.4 612.8 L608.5 617.9 M185.7 558.8 L210.3 563.8 L235.1 569.1 L260.2 574.2 L285.1 579.0 L309.7 584.6 L335.0 589.4 L359.9 595.0 L384.5 599.9 L409.3 605.0 L434.1 610.6 L459.1 615.6 L483.8 620.4 L508.6 625.7 L533.5 630.7 L558.6 635.7 L583.6 641.5 L608.2 646.3 M185.3 587.2 L209.8 592.0 L235.0 597.8 L260.0 602.4 L284.4 607.6 L309.3 613.0 L334.7 618.2 L359.4 623.5 L383.9 628.2 L408.7 633.4 L434.1 638.9 L458.4 643.5 L483.7 649.3 L508.5 654.4 L533.0 658.9 L557.8 664.1 L582.9 669.4 L607.8 674.7 M184.9 615.7 L209.6 620.6 L234.9 626.2 L259.7 630.9 L284.5 636.4 L309.5 641.1 L334.4 646.4 L359.2 651.7 L383.6 657.1 L409.0 661.7 L433.9 666.9 L458.4 672.3 L483.0 677.0 L507.9 682.4 L532.8 687.6 L558.1 692.6 L582.6 697.9 L607.5 703.1 M184.5 644.2 L209.5 649.3 L234.3 654.7 L258.8 659.4 L284.1 664.6 L309.1 669.8 L333.6 674.9 L358.7 679.8 L383.5 685.0 L408.3 690.5 L432.9 695.3 L458.0 700.5 L482.8 705.7 L507.6 711.3 L533.0 715.8 L557.7 721.5 L582.7 726.1 L607.2 731.5 M184.2 672.6 L209.2 677.9 L234.0 683.0 L258.9 687.8 L283.6 693.1 L308.8 698.4 L333.7 703.5 L358.4 708.5 L383.4 714.0 L408.2 718.6 L432.9 724.1 L457.8 728.7 L482.7 734.0 L507.2 739.0 L532.6 744.2 L557.1 749.4 L582.3 754.9 L606.9 759.8 M183.8 701.1 L208.8 706.5 L233.3 711.0 L258.6 716.8 L283.2 721.3 L307.9 727.0 L332.9 731.8 L358.1 737.1 L382.7 741.8 L407.5 747.0 L432.8 752.5 L457.2 757.4 L482.5 762.8 L506.8 767.6 L531.9 773.1 L557.2 778.1 L582.0 783.3 L606.6 788.2 M183.4 729.5 L208.2 734.5 L232.9 739.7 L258.0 744.8 L283.2 749.8 L307.8 754.8 L332.5 760.0 L357.4 765.1 L382.2 770.2 L407.2 775.6 L432.3 780.9 L457.4 786.0 L481.9 790.8 L507.1 796.4 L531.9 801.2 L556.4 806.5 L581.5 811.4 L606.3 816.6 M183.0 758.0 L207.9 763.1 L232.8 768.2 L257.6 773.4 L282.5 778.5 L307.4 783.6 L332.3 788.7 L357.2 793.8 L382.1 798.9 L406.9 804.1 L431.8 809.2 L456.7 814.3 L481.6 819.4 L506.5 824.5 L531.4 829.6 L556.2 834.8 L581.1 839.9 L606.0 845.0" fill="none" stroke="#000" stroke-width="1.2"/>
<path d="M640.0 480.0 L665.9 486.4 L691.6 492.7 L717.3 499.0 L742.8 505.3 L768.2 511.6 L793.5 517.8 L818.7 524.0 L843.8 530.2 L868.7 536.4 L893.5 542.5 L918.2 548.6 L942.8 554.6 L967.3 560.7 L991.6 566.7 L1015.9 572.6 L1040.0 578.6 L1064.0 584.5 L1062.7 612.7 L1061.4 640.9 L1060.2 669.1 L1058.9 697.3 L1057.6 725.5 L1056.3 753.7 L1055.1 781.9 L1053.8 810.1 L1052.5 838.3 L1051.2 866.5 L1050.0 894.7 L1048.7 922.9 L1047.4 951.1 L1023.5 945.3 L999.5 939.5 L975.3 933.7 L951.1 927.8 L926.7 921.9 L902.2 916.0 L877.6 910.0 L852.8 904.1 L828.0 898.1 L803.0 892.0 L777.9 886.0 L752.7 879.9 L727.4 873.8 L702.0 867.6 L676.4 861.4 L650.8 855.2 L625.0 849.0 L626.2 820.6 L627.3 792.2 L628.5 763.8 L629.6 735.5 L630.8 707.1 L631.9 678.7 L633.1 650.3 L634.2 621.9 L635.4 593.5 L636.5 565.2 L637.7 536.8 L638.8 508.4Z" fill="#d4d4d4" stroke="none"/>
<path d="M640.0 480.0 L638.8 508.4 L637.7 536.8 L636.5 565.2 L635.4 593.5 L634.2 621.9 L633.1 650.3 L631.9 678.7 L630.8 707.1 L629.6 735.5 L628.5 763.8 L627.3 792.2 L626.2 820.6 L625.0 849.0 M665.9 486.4 L664.6 514.7 L663.8 542.8 L662.2 571.7 L661.1 599.6 L659.7 628.3 L658.8 657.0 L658.0 685.3 L656.4 713.1 L655.1 741.7 L654.4 770.1 L652.9 798.4 L652.0 827.0 L650.8 855.2 M691.6 492.7 L690.6 521.3 L689.4 549.2 L688.4 577.7 L687.0 606.1 L686.0 634.3 L684.5 662.7 L683.2 691.5 L682.3 719.5 L681.1 748.3 L680.0 776.2 L679.0 804.8 L678.0 832.8 L676.4 861.4 M717.3 499.0 L716.1 527.6 L715.2 556.0 L713.4 584.0 L712.3 612.2 L711.7 640.9 L710.5 669.1 L709.3 697.5 L707.7 726.1 L707.0 753.9 L705.6 782.6 L704.2 810.8 L702.9 839.1 L702.0 867.6 M742.8 505.3 L741.5 533.7 L740.6 561.8 L738.9 590.2 L738.2 618.5 L736.8 646.8 L735.9 675.4 L734.2 703.4 L733.3 732.1 L732.3 760.1 L730.7 788.9 L729.7 816.9 L728.5 845.7 L727.4 873.8 M768.2 511.6 L766.9 540.0 L765.7 568.2 L764.9 596.9 L763.4 624.7 L762.4 653.0 L760.7 681.9 L759.8 710.1 L758.6 738.5 L757.5 766.3 L756.0 794.9 L755.2 823.5 L753.6 851.6 L752.7 879.9 M793.5 517.8 L792.2 546.2 L790.9 574.3 L789.9 603.1 L788.5 631.1 L787.7 659.8 L786.1 687.5 L785.4 716.4 L783.9 744.1 L783.0 772.6 L781.8 801.1 L780.6 829.1 L779.3 857.5 L777.9 886.0 M818.7 524.0 L817.4 552.6 L816.5 580.4 L814.9 608.9 L813.9 637.2 L812.4 665.4 L811.6 694.2 L809.9 722.2 L809.2 750.2 L808.1 778.5 L806.7 807.1 L805.5 835.3 L804.2 863.8 L803.0 892.0 M843.8 530.2 L842.5 558.6 L841.3 586.8 L839.8 615.2 L838.9 643.2 L837.9 671.9 L836.4 699.8 L835.2 728.0 L833.8 756.5 L832.6 784.8 L831.6 812.9 L830.5 841.2 L829.4 870.0 L828.0 898.1 M868.7 536.4 L867.5 564.3 L866.3 592.8 L865.4 621.0 L864.1 649.9 L862.8 678.0 L861.2 706.4 L860.1 734.7 L859.2 762.4 L857.9 791.2 L856.2 819.1 L855.5 847.3 L854.3 875.6 L852.8 904.1 M893.5 542.5 L892.5 570.5 L891.1 599.3 L889.6 627.1 L888.6 655.5 L887.1 683.6 L885.9 712.4 L885.1 740.7 L883.5 768.9 L882.2 797.0 L881.3 825.1 L880.3 853.5 L878.8 882.0 L877.6 910.0 M918.2 548.6 L916.7 577.2 L915.8 605.0 L914.7 633.2 L913.6 661.7 L912.0 690.1 L910.8 717.9 L909.8 746.1 L908.6 774.5 L907.2 803.3 L905.9 831.3 L904.5 859.1 L903.1 887.5 L902.2 916.0 M942.8 554.6 L941.7 582.8 L940.3 611.4 L938.8 639.2 L938.0 667.3 L936.3 695.8 L935.1 724.0 L933.9 752.5 L932.9 780.4 L931.7 808.9 L930.1 837.5 L929.0 865.2 L927.6 893.8 L926.7 921.9 M967.3 560.7 L966.3 589.1 L964.7 617.0 L963.2 645.5 L962.3 673.5 L961.1 701.8 L960.1 730.3 L958.4 758.6 L957.0 786.6 L956.0 814.7 L954.5 843.3 L953.2 871.4 L952.6 899.3 L951.1 927.8 M991.6 566.7 L990.2 595.0 L989.1 623.2 L988.1 651.1 L986.5 679.5 L985.0 708.1 L984.3 736.2 L982.5 764.5 L981.8 792.5 L980.5 820.7 L978.9 848.7 L977.6 876.9 L976.5 905.6 L975.3 933.7 M1015.9 572.6 L1014.8 601.1 L1013.5 628.9 L1012.1 657.3 L1011.0 685.5 L1009.4 713.8 L1008.6 741.8 L1007.3 769.8 L1005.6 798.2 L1004.7 826.9 L1003.4 854.7 L1002.3 883.0 L1000.5 911.6 L999.5 939.5 M1040.0 578.6 L1038.8 606.9 L1037.6 635.3 L1036.2 663.5 L1035.1 691.7 L1033.6 719.8 L1032.4 747.7 L1030.9 776.1 L1029.5 804.6 L1028.3 832.1 L1027.0 861.0 L1025.9 888.6 L1024.4 916.8 L1023.5 945.3 M1064.0 584.5 L1062.7 612.7 L1061.4 640.9 L1060.2 669.1 L1058.9 697.3 L1057.6 725.5 L1056.3 753.7 L1055.1 781.9 L1053.8 810.1 L1052.5 838.3 L1051.2 866.5 L1050.0 894.7 L1048.7 922.9 L1047.4 951.1 M640.0 480.0 L665.9 486.4 L691.6 492.7 L717.3 499.0 L742.8 505.3 L768.2 511.6 L793.5 517.8 L818.7 524.0 L843.8 530.2 L868.7 536.4 L893.5 542.5 L918.2 548.6 L942.8 554.6 L967.3 560.7 L991.6 566.7 L1015.9 572.6 L1040.0 578.6 L1064.0 584.5 M638.8 508.4 L664.6 514.7 L690.6 521.3 L716.1 527.6 L741.5 533.7 L766.9 540.0 L792.2 546.2 L817.4 552.6 L842.5 558.6 L867.5 564.3 L892.5 570.5 L916.7 577.2 L941.7 582.8 L966.3 589.1 L990.2 595.0 L1014.8 601.1 L1038.8 606.9 L1062.7 612.7 M637.7 536.8 L663.8 542.8 L689.4 549.2 L715.2 556.0 L740.6 561.8 L765.7 568.2 L790.9 574.3 L816.5 580.4 L841.3 586.8 L866.3 592.8 L891.1 599.3 L915.8 605.0 L940.3 611.4 L964.7 617.0 L989.1 623.2 L1013.5 628.9 L1037.6 635.3 L1061.4 640.9 M636.5 565.2 L662.2 571.7 L688.4 577.7 L713.4 584.0 L738.9 590.2 L764.9 596.9 L789.9 603.1 L814.9 608.9 L839.8 615.2 L865.4 621.0 L889.6 627.1 L914.7 633.2 L938.8 639.2 L963.2 645.5 L988.1 651.1 L1012.1 657.3 L1036.2 663.5 L1060.2 669.1 M635.4 593.5 L661.1 599.6 L687.0 606.1 L712.3 612.2 L738.2 618.5 L763.4 624.7 L788.5 631.1 L813.9 637.2 L838.9 643.2 L864.1 649.9 L888.6 655.5 L913.6 661.7 L938.0 667.3 L962.3 673.5 L986.5 679.5 L1011.0 685.5 L1035.1 691.7 L1058.9 697.3 M634.2 621.9 L659.7 628.3 L686.0 634.3 L711.7 640.9 L736.8 646.8 L762.4 653.0 L787.7 659.8 L812.4 665.4 L837.9 671.9 L862.8 678.0 L887.1 683.6 L912.0 690.1 L936.3 695.8 L961.1 701.8 L985.0 708.1 L1009.4 713.8 L1033.6 719.8 L1057.6 725.5 M633.1 650.3 L658.8 657.0 L684.5 662.7 L710.5 669.1 L735.9 675.4 L760.7 681.9 L786.1 687.5 L811.6 694.2 L836.4 699.8 L861.2 706.4 L885.9 712.4 L910.8 717.9 L935.1 724.0 L960.1 730.3 L984.3 736.2 L1008.6 741.8 L1032.4 747.7 L1056.3 753.7 M631.9 678.7 L658.0 685.3 L683.2 691.5 L709.3 697.5 L734.2 703.4 L759.8 710.1 L785.4 716.4 L809.9 722.2 L835.2 728.0 L860.1 734.7 L885.1 740.7 L909.8 746.1 L933.9 752.5 L958.4 758.6 L982.5 764.5 L1007.3 769.8 L1030.9 776.1 L1055.1 781.9 M630.8 707.1 L656.4 713.1 L682.3 719.5 L707.7 726.1 L733.3 732.1 L758.6 738.5 L783.9 744.1 L809.2 750.2 L833.8 756.5 L859.2 762.4 L883.5 768.9 L908.6 774.5 L932.9 780.4 L957.0 786.6 L981.8 792.5 L1005.6 798.2 L1029.5 804.6 L1053.8 810.1 M629.6 735.5 L655.1 741.7 L681.1 748.3 L707.0 753.9 L732.3 760.1 L757.5 766.3 L783.0 772.6 L808.1 778.5 L832.6 784.8 L857.9 791.2 L882.2 797.0 L907.2 803.3 L931.7 808.9 L956.0 814.7 L980.5 820.7 L1004.7 826.9 L1028.3 832.1 L1052.5 838.3 M628.5 763.8 L654.4 770.1 L680.0 776.2 L705.6 782.6 L730.7 788.9 L756.0 794.9 L781.8 801.1 L806.7 807.1 L831.6 812.9 L856.2 819.1 L881.3 825.1 L905.9 831.3 L930.1 837.5 L954.5 843.3 L978.9 848.7 L1003.4 854.7 L1027.0 861.0 L1051.2 866.5 M627.3 792.2 L652.9 798.4 L679.0 804.8 L704.2 810.8 L729.7 816.9 L755.2 823.5 L780.6 829.1 L805.5 835.3 L830.5 841.2 L855.5 847.3 L880.3 853.5 L904.5 859.1 L929.0 865.2 L953.2 871.4 L977.6 876.9 L1002.3 883.0 L1025.9 888.6 L1050.0 894.7 M626.2 820.6 L652.0 827.0 L678.0 832.8 L702.9 839.1 L728.5 845.7 L753.6 851.6 L779.3 857.5 L804.2 863.8 L829.4 870.0 L854.3 875.6 L878.8 882.0 L903.1 887.5 L927.6 893.8 L952.6 899.3 L976.5 905.6 L1000.5 911.6 L1024.4 916.8 L1048.7 922.9 M625.0 849.0 L650.8 855.2 L676.4 861.4 L702.0 867.6 L727.4 873.8 L752.7 879.9 L777.9 886.0 L803.0 892.0 L828.0 898.1 L852.8 904.1 L877.6 910.0 L902.2 916.0 L926.7 921.9 L951.1 927.8 L975.3 933.7 L999.5 939.5 L1023.5 945.3 L1047.4 951.1" fill="none" stroke="#000" stroke-width="1.2"/>
<path d="M551.0 486.0 L554.0 520.0 L555.7 540.0 L555.5 600.0 L552.3 640.0 L550.7 760.0 L545.0 887.0 L556.0 888.0 L625.0 849.0 L625.0 849.0 L640.0 480.0 L640.5 470.0Z" fill="#d4d4d4"/>
<clipPath id="cpS"><path d="M551.0 486.0 L554.0 520.0 L555.7 540.0 L555.5 600.0 L552.3 640.0 L550.7 760.0 L545.0 887.0 L556.0 888.0 L625.0 849.0 L625.0 849.0 L640.0 480.0 L640.5 470.0Z"/></clipPath>
<g clip-path="url(#cpS)">
<path d="M555 508 L562 506 L572 504 L576 512 L577 545 L566 553 L556 553Z" fill="#8c8ce6"/>
<path d="M556 520 L566 512 L575 514 L575 538 L564 546 L557 545Z" fill="#4a4ae8"/>
<path d="M557 530 L568 520 L574 524 L572 536 L562 541Z" fill="#0a3cff"/>
<path d="M576 512 L590 506 L640 518 L637 578 L626 588 L608 587 L598 578 L598 548 L588 538 L577 545Z" fill="#8c8ce6"/>
<path d="M577 517 L591 510 L638 523 L636 570 L624 580 L610 578 L602 566 L601 540 L590 532 L578 540Z" fill="#4545e8"/>
<path d="M578 522 L592 514 L637 528 L635 560 L622 570 L612 566 L606 556 L604 536 L592 527 L579 535Z" fill="#0808ff"/>
<path d="M560 534 L580 524 L596 516 L620 524 L624 538 L616 552 L610 557 L606 548 L606 533 L594 526 L584 531 L566 541Z" fill="#0064ff"/>
<path d="M563 534 L583 526 L597 519 L612 524 L611 532 L603 530 L594 524 L586 530 L568 540Z" fill="#00c8ff"/>
<path d="M601 534 L609 531 L611 550 L607 560 L601 566 L602 552Z" fill="#00d8f0"/>
<path d="M588 524 L596 520 L601 523 L594 527Z" fill="#0a9040"/><path d="M606 526 L612 527 L611 534 L607 533Z" fill="#0a9040"/><path d="M604 540 L608 538 L608 548 L605 550Z" fill="#0a9040"/>
<path d="M554.6 611.0 L563.3 607.2 L635.9 580.3 M552.7 635.4 L562.5 631.6 L634.9 604.3 M552.0 659.8 L561.8 656.0 L633.9 628.9 M551.7 684.2 L561.1 680.4 L632.9 653.5 M551.4 708.6 L560.5 704.8 L631.9 678.2 M551.1 733.0 L559.8 729.2 L630.9 702.8 M550.7 757.4 L559.2 753.6 L629.9 727.5 M578.1 602.1 L573.6 748.8 M593.1 596.4 L588.1 743.3 M608.1 590.8 L602.6 737.8 M623.1 585.1 L617.1 732.3" fill="none" stroke="#000" stroke-width="1"/>
<path d="M615.9 519.9L611.7 525.6 M635.9 552.3L635.6 540.5 M587.4 524.2L591.6 523.2 M611.4 519.8L608.6 519.8 M604.6 556.2L607.4 556.2 M604.6 563.8L602.3 568.1 M587.6 567.2L597.2 576.6 M577.8 564.5L574.0 550.4 M608.8 560.0L607.4 563.8 M580.6 568.2L583.1 562.2 M555.2 585.5L578.3 580.1 M578.0 602.5L593.0 597.0 M612.8 516.0L607.2 516.0 M636.0 478.0L621.8 482.5 M593.2 491.5L605.5 486.7 M612.8 516.0L615.6 511.2 M608.6 519.8L603.6 516.5 M583.1 562.2L584.7 558.3 M599.6 560.5L584.7 558.3 M607.4 563.8L604.6 563.8 M554.6 611.0L566.3 606.8 M583.4 568.2L587.6 567.2 M611.7 525.6L606.3 524.1 M555.7 560.0L577.8 564.5 M611.7 525.6L625.1 540.9 M608.6 512.2L603.6 516.5 M635.9 522.6L635.9 537.4 M580.6 575.8L583.7 581.6 M555.4 530.0L582.3 536.1 M608.8 560.0L603.2 560.0 M606.3 524.1L603.6 516.5 M607.1 550.2L611.7 525.6 M555.4 572.8L575.6 572.5 M608.8 560.0L611.6 555.2 M612.8 516.0L611.4 512.2 M608.0 591.5L606.3 593.5 M578.0 602.5L612.7 600.5 M579.0 496.0L567.0 498.0 M555.2 515.0L579.6 528.5 M611.6 555.2L616.3 556.6 M635.9 537.4L635.9 552.3 M607.7 569.6L602.3 568.1 M584.6 531.8L582.3 536.1 M604.6 563.8L603.2 560.0 M605.5 486.7L609.3 486.5 M611.7 525.6L622.7 541.4 M604.6 556.2L599.6 560.5 M621.9 586.8L612.7 600.5 M608.6 512.2L611.1 506.2 M635.9 522.6L615.9 519.9 M583.1 562.2L587.6 567.2 M580.6 575.8L575.6 572.5 M635.9 582.0L635.9 567.1 M602.3 568.1L599.6 560.5 M635.9 522.6L635.9 567.1 M608.8 560.0L607.4 556.2 M593.2 491.5L605.8 508.5 M603.6 516.5L605.8 508.5 M584.8 572.0L580.6 575.8 M588.8 528.0L584.6 524.2 M607.5 487.0L606.6 498.0 M635.9 552.3L635.9 567.1 M579.0 496.0L575.7 509.2 M593.0 597.0L583.7 581.6 M587.9 575.9L597.2 576.6 M635.9 567.1L611.9 563.9 M583.2 528.0L579.6 528.5 M555.7 560.0L555.4 572.8 M636.0 478.0L579.1 482.1 M605.5 486.7L579.1 482.1 M635.9 552.3L616.3 556.6 M587.1 518.2L603.6 516.5 M604.6 556.2L607.1 550.2 M602.3 568.1L597.2 576.6 M636.0 492.9L636.0 507.7 M636.0 492.9L611.1 506.2 M554.9 598.2L555.4 530.0 M611.1 506.2L615.6 511.2 M555.2 585.5L555.4 572.8 M607.1 550.2L591.9 531.9 M608.0 591.5L621.9 586.8 M599.6 560.5L601.8 552.5 M587.7 537.6L584.7 558.3 M584.6 524.2L581.8 520.5 M582.3 536.1L574.0 550.4 M635.9 522.6L625.1 540.9 M611.6 555.2L622.7 541.4 M636.0 507.7L635.9 522.6 M584.8 572.0L580.6 568.2 M636.0 507.7L615.6 511.2 M588.8 528.0L591.9 531.9 M567.0 498.0L579.1 482.1 M584.6 531.8L583.2 528.0 M579.2 572.0L575.6 572.5 M601.8 552.5L607.1 550.2 M604.6 563.8L607.7 569.6 M635.9 552.3L625.1 540.9 M607.1 550.2L611.6 555.2 M554.9 598.2L555.7 589.4 M555.2 585.5L555.4 530.0 M611.9 563.9L607.7 569.6 M555.4 572.8L555.5 545.0 M580.6 568.2L577.8 564.5 M578.0 602.5L555.7 589.4 M612.8 516.0L608.6 519.8 M621.9 586.8L611.9 563.9 M635.9 582.0L612.7 600.5 M608.0 591.5L613.1 594.9 M584.8 572.0L587.9 575.9 M607.5 487.0L605.5 486.7 M608.0 591.5L607.7 569.6 M555.4 530.0L574.0 550.4 M555.5 545.0L555.4 530.0 M574.0 550.4L584.7 558.3 M587.4 531.8L587.7 537.6 M621.8 482.5L609.3 486.5 M583.2 528.0L584.6 524.2 M605.5 486.7L606.6 498.0 M635.9 552.3L622.7 541.4 M604.6 563.8L599.6 560.5 M587.6 567.2L584.7 558.3 M566.3 606.8L554.9 598.2 M611.4 519.8L615.9 519.9 M555.2 585.5L555.7 589.4 M635.9 582.0L635.9 522.6 M593.2 491.5L587.1 518.2 M635.9 522.6L615.6 511.2 M577.8 564.5L584.7 558.3 M566.3 606.8L612.7 600.5 M584.6 524.2L587.4 524.2 M606.3 593.5L613.1 594.9 M612.8 516.0L608.6 512.2 M591.6 523.2L606.3 524.1 M588.8 528.0L587.4 531.8 M583.4 575.8L583.7 581.6 M578.3 580.1L555.7 589.4 M579.2 572.0L580.6 568.2 M584.6 531.8L587.7 537.6 M555.4 530.0L555.2 515.0 M611.4 512.2L615.6 511.2 M555.0 500.0L579.1 482.1 M621.8 482.5L579.1 482.1 M581.8 520.5L575.7 509.2 M607.4 563.8L611.9 563.9 M554.9 598.2L555.2 585.5 M608.8 560.0L616.3 556.6 M580.6 575.8L578.3 580.1 M580.6 568.2L583.4 568.2 M635.9 522.6L635.9 552.3 M607.1 550.2L606.3 524.1 M608.0 591.5L597.2 576.6 M635.9 567.1L621.9 586.8 M579.0 496.0L587.1 518.2 M555.2 515.0L581.8 520.5 M579.0 496.0L593.2 491.5 M587.6 567.2L602.3 568.1 M584.8 572.0L583.4 575.8 M588.8 528.0L583.2 528.0 M593.0 597.0L597.2 576.6 M578.0 602.5L583.7 581.6 M607.4 556.2L611.6 555.2 M587.4 531.8L584.6 531.8 M588.8 528.0L591.6 523.2 M587.1 518.2L591.6 523.2 M579.0 496.0L579.1 482.1 M611.9 563.9L616.3 556.6 M635.9 537.4L635.6 540.5 M554.6 611.0L555.2 515.0 M587.7 537.6L582.3 536.1 M587.4 524.2L587.1 518.2 M601.8 552.5L587.7 537.6 M603.2 560.0L607.4 556.2 M635.6 540.5L625.1 540.9 M606.6 498.0L609.3 486.5 M611.1 506.2L606.6 498.0 M635.9 582.0L621.9 586.8 M606.3 593.5L597.2 576.6 M587.7 537.6L574.0 550.4 M607.7 569.6L597.2 576.6 M584.8 572.0L579.2 572.0 M583.4 575.8L580.6 575.8 M567.0 498.0L555.2 515.0 M621.8 482.5L611.1 506.2 M588.8 528.0L587.4 524.2 M584.8 572.0L587.6 567.2 M608.6 519.8L606.3 524.1 M622.7 541.4L616.3 556.6 M621.8 482.5L606.6 498.0 M613.1 594.9L612.7 600.5 M583.4 568.2L583.1 562.2 M566.3 606.8L555.7 589.4 M580.6 575.8L579.2 572.0 M636.0 492.9L635.9 522.6 M636.0 492.9L615.6 511.2 M554.9 598.2L555.2 515.0 M591.9 531.9L591.6 523.2 M615.9 519.9L625.1 540.9 M607.2 516.0L603.6 516.5 M591.9 531.9L606.3 524.1 M555.7 560.0L575.6 572.5 M582.3 536.1L579.6 528.5 M601.8 552.5L584.7 558.3 M555.0 500.0L554.6 611.0 M578.0 602.5L566.3 606.8 M555.2 585.5L575.6 572.5 M636.0 478.0L635.9 582.0 M584.8 572.0L583.4 568.2 M567.0 498.0L575.7 509.2 M636.0 478.0L636.0 492.9 M579.6 528.5L581.8 520.5 M607.5 487.0L609.3 486.5 M593.2 491.5L579.1 482.1 M622.7 541.4L625.1 540.9 M587.4 531.8L591.9 531.9 M607.4 563.8L603.2 560.0 M554.6 611.0L554.9 598.2 M587.9 575.9L587.6 567.2 M578.3 580.1L575.6 572.5 M603.2 560.0L599.6 560.5 M554.6 611.0L612.7 600.5 M621.9 586.8L613.1 594.9 M608.6 512.2L605.8 508.5 M621.9 586.8L607.7 569.6 M555.4 530.0L579.6 528.5 M555.0 500.0L567.0 498.0 M575.6 572.5L577.8 564.5 M612.8 516.0L615.9 519.9 M583.4 575.8L587.9 575.9 M608.6 519.8L607.2 516.0 M621.8 482.5L605.5 486.7 M636.0 478.0L635.9 522.6 M555.0 500.0L555.2 515.0 M581.8 520.5L587.1 518.2 M611.4 512.2L611.1 506.2 M593.0 597.0L612.7 600.5 M584.6 531.8L579.6 528.5 M615.9 519.9L615.6 511.2 M591.9 531.9L587.7 537.6 M611.4 519.8L611.7 525.6 M607.2 516.0L608.6 512.2 M604.6 556.2L601.8 552.5 M587.1 518.2L575.7 509.2 M606.3 593.5L612.7 600.5 M583.7 581.6L597.2 576.6 M608.8 560.0L611.9 563.9 M584.6 524.2L579.6 528.5 M591.6 523.2L603.6 516.5 M635.9 567.1L616.3 556.6 M577.8 564.5L583.1 562.2 M593.0 597.0L606.3 593.5 M593.2 491.5L606.6 498.0 M607.1 550.2L622.7 541.4 M607.4 556.2L607.1 550.2 M555.2 515.0L575.7 509.2 M587.9 575.9L583.7 581.6 M607.4 563.8L607.7 569.6 M555.7 560.0L574.0 550.4 M603.2 560.0L604.6 556.2 M555.7 560.0L555.5 545.0 M601.8 552.5L591.9 531.9 M635.9 537.4L625.1 540.9 M587.1 518.2L605.8 508.5 M608.6 512.2L611.4 512.2 M555.2 585.5L555.5 545.0 M580.6 568.2L575.6 572.5 M583.7 581.6L578.3 580.1 M587.6 567.2L599.6 560.5 M621.8 482.5L636.0 492.9 M612.8 516.0L611.4 519.8 M584.6 524.2L587.1 518.2 M605.8 508.5L611.1 506.2 M578.0 602.5L578.3 580.1 M608.6 519.8L611.7 525.6 M605.8 508.5L606.6 498.0 M587.4 531.8L583.2 528.0 M555.5 545.0L574.0 550.4" fill="none" stroke="#000" stroke-width=".8"/>
<path d="M592.6 822.2L595.4 822.2 M597.4 780.2L597.1 774.2 M556.0 887.0L612.7 877.9 M595.1 816.2L591.6 819.4 M614.0 854.0L598.3 846.0 M598.8 784.0L601.9 787.9 M573.7 841.6L598.3 846.0 M559.2 753.4L574.1 782.2 M577.6 827.2L587.6 826.5 M570.6 828.2L565.6 832.5 M594.6 787.8L593.2 784.0 M573.7 841.6L569.4 873.7 M597.1 774.2L585.4 767.5 M575.8 792.0L570.2 792.0 M546.6 869.9L569.4 873.7 M592.0 866.0L603.0 860.0 M601.9 787.9L601.6 779.2 M571.6 795.8L566.6 792.5 M625.6 833.0L625.1 831.3 M592.0 866.0L608.1 874.7 M574.1 782.2L578.6 787.2 M575.8 792.0L578.6 787.2 M595.7 835.6L598.3 846.0 M573.1 822.2L589.8 818.5 M614.0 854.0L599.9 829.9 M614.0 854.0L603.0 860.0 M571.6 788.2L566.6 792.5 M578.6 787.2L589.6 784.5 M614.0 854.0L608.1 874.7 M570.6 828.2L573.1 822.2 M592.6 829.8L595.7 835.6 M627.5 788.2L626.8 803.1 M575.8 792.0L574.4 788.2 M629.9 728.4L626.8 803.1 M603.3 737.7L616.6 733.1 M628.7 758.3L610.2 753.7 M599.9 829.9L595.7 835.6 M574.1 782.2L591.8 776.5 M559.2 753.4L574.6 747.9 M603.3 737.7L612.9 750.4 M626.8 803.1L626.2 818.1 M626.8 803.1L599.6 821.2 M547.2 853.9L568.3 840.1 M574.8 832.0L577.9 835.9 M592.6 822.2L587.6 826.5 M598.8 784.0L597.4 787.8 M571.6 788.2L574.1 782.2 M574.7 801.6L573.1 822.2 M594.6 787.8L597.7 793.6 M569.3 800.1L567.8 824.5 M546.0 886.0L546.1 866.6 M592.6 829.8L587.6 826.5 M597.1 774.2L610.2 753.7 M566.6 792.5L568.8 784.5 M594.6 780.2L591.8 776.5 M601.9 787.9L597.7 793.6 M546.6 869.9L546.1 866.6 M610.2 753.7L597.8 748.5 M550.1 773.5L547.1 762.8 M595.7 835.6L590.3 834.1 M549.6 789.5L566.6 792.5 M616.6 733.1L621.6 746.4 M626.2 818.1L625.6 833.0 M591.2 826.0L592.6 822.2 M548.4 821.7L548.4 802.2 M559.2 753.4L550.1 773.5 M547.8 837.8L546.1 866.6 M573.4 835.8L573.7 841.6 M569.4 873.7L546.1 866.6 M598.8 784.0L593.2 784.0 M598.8 784.0L601.6 779.2 M594.6 787.8L589.6 784.5 M628.7 758.3L628.1 773.2 M629.9 728.4L616.6 733.1 M592.0 866.0L573.7 841.6 M587.6 826.5L589.8 818.5 M580.0 873.0L569.4 873.7 M595.4 829.8L599.9 829.9 M625.0 848.0L614.0 854.0 M628.7 758.3L621.6 746.4 M597.7 793.6L592.3 792.1 M625.0 848.0L612.7 877.9 M626.8 803.1L601.9 787.9 M570.6 835.8L568.3 840.1 M592.3 792.1L595.1 816.2 M628.1 773.2L627.5 788.2 M578.9 795.9L589.8 818.5 M593.2 784.0L594.6 780.2 M574.8 832.0L573.4 835.8 M550.1 773.5L568.8 784.5 M574.4 795.8L574.7 801.6 M549.0 805.6L548.4 802.2 M592.3 792.1L589.6 784.5 M612.7 877.9L608.1 874.7 M595.4 822.2L599.6 821.2 M590.0 742.4L597.8 748.5 M598.8 784.0L597.4 780.2 M589.6 784.5L591.8 776.5 M580.0 873.0L608.1 874.7 M597.4 787.8L601.9 787.9 M568.0 880.0L612.7 877.9 M594.6 780.2L597.4 780.2 M628.7 758.3L626.8 803.1 M547.2 853.9L547.8 837.8 M589.8 818.5L595.1 816.2 M621.6 746.4L612.9 750.4 M571.6 795.8L569.3 800.1 M575.8 792.0L571.6 795.8 M589.8 818.5L591.6 819.4 M599.6 821.2L625.1 831.3 M577.9 835.9L598.3 846.0 M591.8 776.5L585.4 767.5 M590.3 834.1L598.3 846.0 M595.1 816.2L599.6 821.2 M547.8 837.8L548.4 821.7 M574.8 832.0L569.2 832.0 M559.2 753.4L585.4 767.5 M550.7 757.4L547.1 762.8 M547.8 837.8L547.1 762.8 M626.2 818.1L625.1 831.3 M614.0 854.0L612.7 877.9 M574.8 832.0L577.6 827.2 M573.4 835.8L570.6 835.8 M597.4 780.2L601.6 779.2 M556.0 887.0L546.6 869.9 M580.0 873.0L568.0 880.0 M569.2 832.0L573.4 828.2 M568.3 840.1L569.4 873.7 M591.8 776.5L597.1 774.2 M575.8 792.0L571.6 788.2 M573.4 828.2L573.1 822.2 M570.6 835.8L569.2 832.0 M547.2 853.9L569.4 873.7 M585.4 767.5L597.8 748.5 M574.1 782.2L589.6 784.5 M547.8 837.8L565.6 832.5 M574.4 788.2L578.6 787.2 M597.1 774.2L601.6 779.2 M574.4 795.8L571.6 795.8 M574.8 832.0L573.4 828.2 M548.4 821.7L549.0 805.6 M616.6 733.1L612.9 750.4 M566.6 792.5L548.4 802.2 M568.0 880.0L546.6 869.9 M592.6 822.2L591.6 819.4 M571.6 795.8L570.2 792.0 M594.6 780.2L589.6 784.5 M577.9 835.9L577.6 827.2 M575.8 792.0L578.9 795.9 M625.0 848.0L626.8 803.1 M595.4 829.8L591.2 826.0 M628.7 758.3L612.9 750.4 M597.1 774.2L597.8 748.5 M577.9 835.9L590.3 834.1 M625.6 833.0L614.0 854.0 M548.4 821.7L567.8 824.5 M549.6 789.5L550.1 773.5 M590.0 742.4L574.6 747.9 M565.6 832.5L567.8 824.5 M626.2 818.1L599.6 821.2 M580.0 873.0L573.7 841.6 M573.4 835.8L577.9 835.9 M569.3 800.1L573.1 822.2 M569.2 832.0L565.6 832.5 M578.9 795.9L578.6 787.2 M625.0 848.0L625.6 833.0 M578.9 795.9L592.3 792.1 M547.2 853.9L546.1 866.6 M547.1 762.8L546.1 866.6 M549.0 805.6L567.8 824.5 M603.0 860.0L598.3 846.0 M599.9 829.9L598.3 846.0 M549.6 789.5L568.8 784.5 M596.8 826.0L599.9 829.9 M574.4 795.8L578.9 795.9 M629.3 743.4L621.6 746.4 M591.2 826.0L595.4 822.2 M627.5 788.2L601.9 787.9 M597.7 793.6L595.1 816.2 M570.2 792.0L566.6 792.5 M580.0 873.0L612.7 877.9 M629.9 728.4L629.3 743.4 M578.6 787.2L592.3 792.1 M570.6 828.2L567.8 824.5 M577.9 835.9L573.7 841.6 M577.6 827.2L589.8 818.5 M595.4 829.8L595.7 835.6 M568.0 880.0L569.4 873.7 M575.8 792.0L574.4 795.8 M626.8 803.1L597.7 793.6 M592.0 866.0L580.0 873.0 M603.0 860.0L608.1 874.7 M629.3 743.4L626.8 803.1 M593.2 784.0L597.4 780.2 M573.7 841.6L568.3 840.1 M550.1 773.5L574.1 782.2 M626.8 803.1L595.1 816.2 M556.0 887.0L568.0 880.0 M628.1 773.2L610.2 753.7 M571.6 788.2L568.8 784.5 M578.9 795.9L574.7 801.6 M574.1 782.2L585.4 767.5 M597.4 787.8L597.7 793.6 M569.2 832.0L570.6 828.2 M629.9 728.4L625.0 848.0 M592.6 829.8L590.3 834.1 M628.1 773.2L601.6 779.2 M547.8 837.8L568.3 840.1 M549.6 789.5L547.1 762.8 M574.7 801.6L569.3 800.1 M610.2 753.7L612.9 750.4 M574.4 788.2L574.1 782.2 M596.8 826.0L595.4 829.8 M599.9 829.9L625.1 831.3 M568.3 840.1L565.6 832.5 M603.3 737.7L597.8 748.5 M591.2 826.0L587.6 826.5 M590.0 742.4L585.4 767.5 M573.4 835.8L569.2 832.0 M626.8 803.1L625.6 833.0 M570.2 792.0L571.6 788.2 M547.8 837.8L548.4 802.2 M592.6 822.2L589.8 818.5 M598.8 784.0L594.6 787.8 M546.0 886.0L546.6 869.9 M570.6 828.2L573.4 828.2 M548.4 802.2L547.1 762.8 M595.4 829.8L592.6 829.8 M573.4 828.2L577.6 827.2 M594.6 787.8L592.3 792.1 M601.6 779.2L610.2 753.7 M550.7 757.4L559.2 753.4 M594.6 780.2L597.1 774.2 M616.6 733.1L629.3 743.4 M548.4 821.7L565.6 832.5 M567.8 824.5L573.1 822.2 M569.3 800.1L548.4 802.2 M570.6 835.8L573.7 841.6 M574.6 747.9L585.4 767.5 M569.3 800.1L566.6 792.5 M612.9 750.4L597.8 748.5 M593.2 784.0L589.6 784.5 M596.8 826.0L591.2 826.0 M550.7 757.4L550.1 773.5 M596.8 826.0L599.6 821.2 M556.0 887.0L546.0 886.0 M627.5 788.2L601.6 779.2 M571.6 788.2L574.4 788.2 M597.4 787.8L594.6 787.8 M595.4 822.2L595.1 816.2 M549.0 805.6L569.3 800.1 M595.4 822.2L591.6 819.4 M592.6 829.8L591.2 826.0 M574.7 801.6L589.8 818.5 M577.9 835.9L587.6 826.5 M568.8 784.5L574.1 782.2 M625.6 833.0L599.9 829.9 M571.6 795.8L574.7 801.6 M549.6 789.5L548.4 802.2 M592.0 866.0L598.3 846.0 M629.3 743.4L628.7 758.3 M590.0 742.4L603.3 737.7 M599.9 829.9L599.6 821.2 M573.1 822.2L577.6 827.2 M590.3 834.1L587.6 826.5 M570.6 835.8L565.6 832.5 M596.8 826.0L595.4 822.2 M628.1 773.2L626.8 803.1 M578.9 795.9L595.1 816.2" fill="none" stroke="#000" stroke-width=".8"/>
</g>
<path d="M551.0 486.0 L554.0 520.0 L555.7 540.0 L555.5 600.0 L552.3 640.0 L550.7 760.0 L545.0 887.0 L556 888 L625 849" fill="none" stroke="#000" stroke-width="1.100"/>
<path d="M579.0 496.0 L571.7 508.0 L566.0 560.0 L563.5 600.0 L562.2 640.0 L559.0 760.0 L556.0 888.0" fill="none" stroke="#000" stroke-width="1"/>
<path d="M637.0 524 L623.8 848" fill="none" stroke="#000" stroke-width="2.400"/>
<path d="M637.300 522 L637 532" stroke="#ffc000" stroke-width="2.500"/><path d="M637 532 L636.200 556" stroke="#ff4800" stroke-width="2.500"/>
<path d="M124.2 410.8 L149.1 416.0 L174.1 421.2 L199.0 426.4 L223.9 431.6 L248.8 436.7 L273.8 441.9 L298.7 447.1 L323.6 452.3 L348.6 457.5 L373.5 462.7 L398.4 467.9 L423.4 473.1 L448.3 478.2 L473.2 483.4 L498.1 488.6 L523.1 493.8 L548.0 499.0 L563.2 492.6 L578.5 486.2 L593.8 479.9 L609.0 473.5 L624.2 467.1 L639.5 460.8 L654.8 454.4 L670.0 448.0 L645.4 442.7 L620.8 437.4 L596.2 432.1 L571.6 426.8 L547.1 421.5 L522.5 416.2 L497.9 410.9 L473.3 405.6 L448.7 400.4 L424.1 395.1 L399.5 389.8 L374.9 384.5 L350.4 379.2 L325.8 373.9 L301.2 368.6 L276.6 363.3 L252.0 358.0 L236.0 364.6 L220.1 371.2 L204.1 377.8 L188.1 384.4 L172.1 391.0 L156.2 397.6 L140.2 404.2Z" fill="#d4d4d4" stroke="none"/>
<path d="M124.2 410.8 L140.2 404.2 L156.2 397.6 L172.1 391.0 L188.1 384.4 L204.1 377.8 L220.1 371.2 L236.0 364.6 L252.0 358.0 M149.1 416.0 L165.2 409.5 L181.1 402.9 L196.7 396.3 L212.8 389.8 L229.0 383.3 L244.5 376.7 L260.9 370.1 L276.6 363.3 M174.1 421.2 L189.8 414.5 L205.6 407.8 L221.9 401.6 L237.7 395.0 L253.6 388.2 L269.2 381.5 L285.4 375.0 L301.2 368.6 M199.0 426.4 L214.7 419.8 L230.4 413.1 L246.4 406.8 L262.3 400.0 L278.5 393.6 L294.2 387.1 L309.7 380.4 L325.8 373.9 M223.9 431.6 L239.7 425.1 L255.4 418.6 L271.3 411.8 L287.3 405.2 L303.1 398.7 L318.5 392.1 L334.7 386.0 L350.4 379.2 M248.8 436.7 L264.4 430.2 L280.4 423.8 L296.0 417.1 L311.8 410.8 L327.5 404.3 L343.3 397.4 L359.3 391.0 L374.9 384.5 M273.8 441.9 L289.3 435.5 L305.0 429.0 L321.0 422.5 L336.7 415.8 L352.3 409.3 L368.3 402.6 L384.0 396.0 L399.5 389.8 M298.7 447.1 L314.2 440.5 L330.3 434.1 L345.7 427.8 L361.3 421.1 L377.1 414.7 L392.9 408.1 L408.4 401.5 L424.1 395.1 M323.6 452.3 L339.1 446.0 L355.0 439.4 L370.4 432.8 L386.3 426.4 L401.6 419.8 L417.6 413.2 L432.9 406.7 L448.7 400.4 M348.6 457.5 L364.3 451.2 L379.6 444.4 L395.2 438.0 L410.9 431.4 L426.4 424.9 L442.3 418.7 L457.5 412.4 L473.3 405.6 M373.5 462.7 L388.8 456.2 L404.8 449.9 L420.3 443.2 L435.5 436.9 L451.0 430.2 L466.7 423.6 L482.3 417.6 L497.9 410.9 M398.4 467.9 L414.0 461.4 L429.5 454.9 L444.8 448.6 L460.4 442.2 L476.2 435.6 L491.5 429.3 L506.9 422.6 L522.5 416.2 M423.4 473.1 L438.9 466.8 L454.4 460.3 L469.9 453.8 L485.3 447.3 L500.6 440.9 L515.9 434.4 L531.7 428.1 L547.1 421.5 M448.3 478.2 L463.8 471.7 L479.1 465.4 L494.6 458.9 L510.1 452.8 L525.2 446.2 L540.9 439.6 L556.2 433.5 L571.6 426.8 M473.2 483.4 L488.4 477.0 L503.8 470.7 L519.6 464.2 L534.5 457.8 L550.1 451.5 L565.5 445.0 L581.0 438.5 L596.2 432.1 M498.1 488.6 L513.4 482.4 L528.7 475.9 L544.1 469.6 L559.3 463.3 L574.7 456.4 L590.0 450.2 L605.2 443.8 L620.8 437.4 M523.1 493.8 L538.3 487.5 L553.6 480.9 L568.8 474.8 L584.5 468.3 L599.4 462.0 L614.8 455.3 L629.9 449.2 L645.4 442.7 M548.0 499.0 L563.2 492.6 L578.5 486.2 L593.8 479.9 L609.0 473.5 L624.2 467.1 L639.5 460.8 L654.8 454.4 L670.0 448.0 M124.2 410.8 L149.1 416.0 L174.1 421.2 L199.0 426.4 L223.9 431.6 L248.8 436.7 L273.8 441.9 L298.7 447.1 L323.6 452.3 L348.6 457.5 L373.5 462.7 L398.4 467.9 L423.4 473.1 L448.3 478.2 L473.2 483.4 L498.1 488.6 L523.1 493.8 L548.0 499.0 M140.2 404.2 L165.2 409.5 L189.8 414.5 L214.7 419.8 L239.7 425.1 L264.4 430.2 L289.3 435.5 L314.2 440.5 L339.1 446.0 L364.3 451.2 L388.8 456.2 L414.0 461.4 L438.9 466.8 L463.8 471.7 L488.4 477.0 L513.4 482.4 L538.3 487.5 L563.2 492.6 M156.2 397.6 L181.1 402.9 L205.6 407.8 L230.4 413.1 L255.4 418.6 L280.4 423.8 L305.0 429.0 L330.3 434.1 L355.0 439.4 L379.6 444.4 L404.8 449.9 L429.5 454.9 L454.4 460.3 L479.1 465.4 L503.8 470.7 L528.7 475.9 L553.6 480.9 L578.5 486.2 M172.1 391.0 L196.7 396.3 L221.9 401.6 L246.4 406.8 L271.3 411.8 L296.0 417.1 L321.0 422.5 L345.7 427.8 L370.4 432.8 L395.2 438.0 L420.3 443.2 L444.8 448.6 L469.9 453.8 L494.6 458.9 L519.6 464.2 L544.1 469.6 L568.8 474.8 L593.8 479.9 M188.1 384.4 L212.8 389.8 L237.7 395.0 L262.3 400.0 L287.3 405.2 L311.8 410.8 L336.7 415.8 L361.3 421.1 L386.3 426.4 L410.9 431.4 L435.5 436.9 L460.4 442.2 L485.3 447.3 L510.1 452.8 L534.5 457.8 L559.3 463.3 L584.5 468.3 L609.0 473.5 M204.1 377.8 L229.0 383.3 L253.6 388.2 L278.5 393.6 L303.1 398.7 L327.5 404.3 L352.3 409.3 L377.1 414.7 L401.6 419.8 L426.4 424.9 L451.0 430.2 L476.2 435.6 L500.6 440.9 L525.2 446.2 L550.1 451.5 L574.7 456.4 L599.4 462.0 L624.2 467.1 M220.1 371.2 L244.5 376.7 L269.2 381.5 L294.2 387.1 L318.5 392.1 L343.3 397.4 L368.3 402.6 L392.9 408.1 L417.6 413.2 L442.3 418.7 L466.7 423.6 L491.5 429.3 L515.9 434.4 L540.9 439.6 L565.5 445.0 L590.0 450.2 L614.8 455.3 L639.5 460.8 M236.0 364.6 L260.9 370.1 L285.4 375.0 L309.7 380.4 L334.7 386.0 L359.3 391.0 L384.0 396.0 L408.4 401.5 L432.9 406.7 L457.5 412.4 L482.3 417.6 L506.9 422.6 L531.7 428.1 L556.2 433.5 L581.0 438.5 L605.2 443.8 L629.9 449.2 L654.8 454.4 M252.0 358.0 L276.6 363.3 L301.2 368.6 L325.8 373.9 L350.4 379.2 L374.9 384.5 L399.5 389.8 L424.1 395.1 L448.7 400.4 L473.3 405.6 L497.9 410.9 L522.5 416.2 L547.1 421.5 L571.6 426.8 L596.2 432.1 L620.8 437.4 L645.4 442.7 L670.0 448.0" fill="none" stroke="#000" stroke-width="1.2"/>
<path d="M551 486 L679 433 L681 448 L579 497 L553 512 L548 499Z" fill="#d4d4d4" stroke="#000" stroke-width="1"/>
<path d="M565.2 480.1 L572.6 503.0 M579.4 474.2 L586.1 496.0 M593.7 468.3 L599.7 489.0 M607.9 462.4 L613.2 482.0 M622.1 456.6 L626.8 475.0 M636.3 450.7 L640.3 468.0 M650.6 444.8 L653.9 461.0 M664.8 438.9 L667.4 454.0" stroke="#000" fill="none" stroke-width=".9"/>
<path d="M579 496 L705 439 L709 446 L577.500 504Z" fill="#d4d4d4" stroke="#000" stroke-width="1"/>
<path d="M578 500 L707 442.500" stroke="#000" stroke-width=".8"/>
<path d="M593.0 489.7 l1 7 M607.0 483.3 l1 7 M621.0 477.0 l1 7 M635.0 470.7 l1 7 M649.0 464.3 l1 7 M663.0 458.0 l1 7 M677.0 451.7 l1 7 M691.0 445.3 l1 7" stroke="#000" fill="none" stroke-width=".8"/>
<path d="M546.700 502 l5 -1.200 v3.600 l-3.400 0z" fill="#0a8a3c"/>
<path d="M579.0 504.5 L604.6 510.8 L630.0 517.0 L655.4 523.2 L680.6 529.4 L705.7 535.5 L730.7 541.6 L755.6 547.7 L780.4 553.8 L805.0 559.8 L829.5 565.8 L853.9 571.8 L878.2 577.7 L902.4 583.6 L926.5 589.5 L950.4 595.4 L974.3 601.2 L998.0 607.0 L1014.4 600.4 L1030.8 593.7 L1047.1 587.1 L1063.5 580.5 L1079.9 573.9 L1096.2 567.2 L1112.6 560.6 L1129.0 554.0 L1105.2 548.7 L1081.3 543.3 L1057.3 538.0 L1033.2 532.6 L1009.0 527.1 L984.6 521.7 L960.1 516.2 L935.5 510.7 L910.8 505.2 L886.0 499.6 L861.1 494.0 L836.0 488.3 L810.8 482.6 L785.6 476.5 L760.2 469.7 L734.6 461.0 L709.0 447.0 L692.8 454.2 L676.5 461.4 L660.2 468.6 L644.0 475.8 L627.8 482.9 L611.5 490.1 L595.2 497.3Z" fill="#d4d4d4" stroke="none"/>
<path d="M579.0 504.5 L595.2 497.3 L611.5 490.1 L627.8 482.9 L644.0 475.8 L660.2 468.6 L676.5 461.4 L692.8 454.2 L709.0 447.0 M604.6 510.8 L621.0 504.6 L637.1 498.3 L653.2 492.3 L669.5 485.9 L686.0 479.8 L702.1 473.3 L718.4 467.0 L734.6 461.0 M630.0 517.0 L646.5 511.0 L662.7 505.0 L678.8 499.1 L695.1 493.2 L711.1 487.5 L727.5 481.4 L743.8 475.6 L760.2 469.7 M655.4 523.2 L671.6 517.4 L688.0 511.4 L704.4 505.9 L720.2 500.0 L736.9 494.1 L752.8 488.3 L769.4 482.1 L785.6 476.5 M680.6 529.4 L696.6 523.7 L713.2 517.5 L729.2 511.6 L745.6 506.1 L761.9 499.9 L778.5 494.4 L794.4 488.6 L810.8 482.6 M705.7 535.5 L722.1 529.7 L738.4 523.9 L754.7 518.0 L770.7 512.0 L787.2 506.1 L803.4 500.3 L819.8 494.1 L836.0 488.3 M730.7 541.6 L746.9 535.5 L763.3 529.5 L779.6 523.6 L795.9 517.8 L812.2 512.0 L828.2 506.1 L844.8 500.0 L861.1 494.0 M755.6 547.7 L772.0 541.9 L788.1 535.6 L804.7 529.5 L820.9 523.7 L836.9 517.7 L853.5 511.8 L869.6 505.9 L886.0 499.6 M780.4 553.8 L796.7 547.7 L813.2 541.4 L829.4 535.6 L845.5 529.6 L861.8 523.4 L878.2 517.5 L894.4 511.2 L910.8 505.2 M805.0 559.8 L821.3 553.7 L837.8 547.4 L854.1 541.3 L870.3 535.1 L886.6 529.3 L903.0 523.1 L919.1 516.7 L935.5 510.7 M829.5 565.8 L845.8 559.6 L862.2 553.5 L878.3 547.3 L895.0 541.0 L910.9 534.7 L927.2 528.4 L944.0 522.5 L960.1 516.2 M853.9 571.8 L870.4 565.6 L886.8 559.3 L903.0 553.0 L919.4 546.8 L935.7 540.3 L952.0 534.2 L968.4 527.7 L984.6 521.7 M878.2 577.7 L894.4 571.2 L911.1 565.3 L927.3 558.7 L943.8 552.6 L960.0 546.0 L976.2 539.7 L992.5 533.4 L1009.0 527.1 M902.4 583.6 L918.8 577.5 L934.9 570.9 L951.2 564.3 L968.0 558.1 L984.4 551.7 L1000.3 545.3 L1016.9 539.2 L1033.2 532.6 M926.5 589.5 L943.1 583.1 L959.2 576.4 L975.6 570.0 L991.7 563.5 L1008.0 557.4 L1024.4 551.1 L1040.8 544.6 L1057.3 538.0 M950.4 595.4 L966.6 588.6 L983.3 582.2 L999.6 575.7 L1015.7 569.5 L1032.4 563.0 L1048.7 556.1 L1065.0 549.9 L1081.3 543.3 M974.3 601.2 L990.6 594.8 L1006.9 588.3 L1023.5 581.3 L1039.5 575.0 L1056.3 568.2 L1072.4 561.9 L1088.7 555.4 L1105.2 548.7 M998.0 607.0 L1014.4 600.4 L1030.8 593.7 L1047.1 587.1 L1063.5 580.5 L1079.9 573.9 L1096.2 567.2 L1112.6 560.6 L1129.0 554.0 M579.0 504.5 L604.6 510.8 L630.0 517.0 L655.4 523.2 L680.6 529.4 L705.7 535.5 L730.7 541.6 L755.6 547.7 L780.4 553.8 L805.0 559.8 L829.5 565.8 L853.9 571.8 L878.2 577.7 L902.4 583.6 L926.5 589.5 L950.4 595.4 L974.3 601.2 L998.0 607.0 M595.2 497.3 L621.0 504.6 L646.5 511.0 L671.6 517.4 L696.6 523.7 L722.1 529.7 L746.9 535.5 L772.0 541.9 L796.7 547.7 L821.3 553.7 L845.8 559.6 L870.4 565.6 L894.4 571.2 L918.8 577.5 L943.1 583.1 L966.6 588.6 L990.6 594.8 L1014.4 600.4 M611.5 490.1 L637.1 498.3 L662.7 505.0 L688.0 511.4 L713.2 517.5 L738.4 523.9 L763.3 529.5 L788.1 535.6 L813.2 541.4 L837.8 547.4 L862.2 553.5 L886.8 559.3 L911.1 565.3 L934.9 570.9 L959.2 576.4 L983.3 582.2 L1006.9 588.3 L1030.8 593.7 M627.8 482.9 L653.2 492.3 L678.8 499.1 L704.4 505.9 L729.2 511.6 L754.7 518.0 L779.6 523.6 L804.7 529.5 L829.4 535.6 L854.1 541.3 L878.3 547.3 L903.0 553.0 L927.3 558.7 L951.2 564.3 L975.6 570.0 L999.6 575.7 L1023.5 581.3 L1047.1 587.1 M644.0 475.8 L669.5 485.9 L695.1 493.2 L720.2 500.0 L745.6 506.1 L770.7 512.0 L795.9 517.8 L820.9 523.7 L845.5 529.6 L870.3 535.1 L895.0 541.0 L919.4 546.8 L943.8 552.6 L968.0 558.1 L991.7 563.5 L1015.7 569.5 L1039.5 575.0 L1063.5 580.5 M660.2 468.6 L686.0 479.8 L711.1 487.5 L736.9 494.1 L761.9 499.9 L787.2 506.1 L812.2 512.0 L836.9 517.7 L861.8 523.4 L886.6 529.3 L910.9 534.7 L935.7 540.3 L960.0 546.0 L984.4 551.7 L1008.0 557.4 L1032.4 563.0 L1056.3 568.2 L1079.9 573.9 M676.5 461.4 L702.1 473.3 L727.5 481.4 L752.8 488.3 L778.5 494.4 L803.4 500.3 L828.2 506.1 L853.5 511.8 L878.2 517.5 L903.0 523.1 L927.2 528.4 L952.0 534.2 L976.2 539.7 L1000.3 545.3 L1024.4 551.1 L1048.7 556.1 L1072.4 561.9 L1096.2 567.2 M692.8 454.2 L718.4 467.0 L743.8 475.6 L769.4 482.1 L794.4 488.6 L819.8 494.1 L844.8 500.0 L869.6 505.9 L894.4 511.2 L919.1 516.7 L944.0 522.5 L968.4 527.7 L992.5 533.4 L1016.9 539.2 L1040.8 544.6 L1065.0 549.9 L1088.7 555.4 L1112.6 560.6 M709.0 447.0 L734.6 461.0 L760.2 469.7 L785.6 476.5 L810.8 482.6 L836.0 488.3 L861.1 494.0 L886.0 499.6 L910.8 505.2 L935.5 510.7 L960.1 516.2 L984.6 521.7 L1009.0 527.1 L1033.2 532.6 L1057.3 538.0 L1081.3 543.3 L1105.2 548.7 L1129.0 554.0" fill="none" stroke="#000" stroke-width="1.2"/>
<path d="M585.500 512.200 L630 521.700" stroke="#adff2f" stroke-width="3.600"/><path d="M622 516.500 L636 523 L621 524.500Z" fill="#adff2f"/>
<path d="M602.200 542 L645 549.700" stroke="#adff2f" stroke-width="3.600"/><path d="M645.500 544 L655.700 551 L643.500 554.500 L641 549Z" fill="#adff2f"/>
<path d="M617 763 L633 766" stroke="#c8c8c8" stroke-width="2.5"/><path d="M577 811 L586 813" stroke="#c8c8c8" stroke-width="2"/>
<rect x="654" y="511" width="53" height="15" fill="#a6a6a6" fill-opacity=".8"/><text x="680.5" y="522.5" font-size="10.9" text-anchor="middle" fill="#000">B3: 213.3</text>
<rect x="676" y="540" width="53" height="16" fill="#a6a6a6" fill-opacity=".8"/><text x="702.5" y="552.5" font-size="10.9" text-anchor="middle" fill="#000">B8: 212.4</text>
<rect x="638" y="757" width="59" height="15" fill="#a6a6a6" fill-opacity=".8"/><text x="667.5" y="768.5" font-size="10.9" text-anchor="middle" fill="#000">B16: 120.5</text>
<rect x="591" y="801" width="50" height="15" fill="#a6a6a6" fill-opacity=".8"/><text x="616.0" y="812.5" font-size="10.9" text-anchor="middle" fill="#000">B11: 55.4</text>
<rect x="633" y="796" width="59" height="15" fill="#a6a6a6" fill-opacity=".8"/><text x="662.5" y="807.5" font-size="10.9" text-anchor="middle" fill="#000">B12: 107.1</text>
<path d="M140 553.300 L106 545.500" stroke="#f00" stroke-width="3.600"/><path d="M92 544.500 L104.500 541 L109 546 L104 552.200Z" fill="#f00"/>
<path d="M161.500 536 C140 538 136 572 160 578.500 L162 574 C149 568 150 546 163 541Z" fill="#f00" stroke="#300" stroke-width=".7"/>
<path d="M162.300 588.500 V540.500 H159.200 L166 528 L173 540.500 H169.800 V585.500Z" fill="#f00" stroke="#300" stroke-width=".7"/>
<rect x="81" y="527" width="39" height="15" fill="#a6a6a6" fill-opacity=".8"/><text x="100.5" y="538.5" font-size="10.9" text-anchor="middle" fill="#000">1000.0</text>
<rect x="165" y="503" width="26" height="15" fill="#a6a6a6" fill-opacity=".8"/><text x="178.0" y="514.5" font-size="10.9" text-anchor="middle" fill="#000">50.0</text>
<rect x="153" y="558" width="31.5" height="15" fill="#a6a6a6" fill-opacity=".8"/><text x="168.75" y="569.5" font-size="10.9" text-anchor="middle" fill="#000">100.0</text>
<path d="M1057.700 694 L1064.800 692.500 V739 H1067.700 L1060 752.600 L1053.400 739 H1057.700Z" fill="#7cfc00" stroke="#1a3a00" stroke-width=".8"/>
<path d="M1063 702 C1088 702 1092 736 1065 745 L1064 742.500 C1082 733 1078 708 1063 707.500Z" fill="#7cfc00" stroke="#1a3a00" stroke-width=".8"/>
<path d="M1086.300 726.800 L1120 733.500" stroke="#7cfc00" stroke-width="3.200"/><path d="M1135 736.400 L1119 739.700 L1117.500 733.500 L1121 727.800Z" fill="#7cfc00"/>
<rect x="1061" y="668" width="29" height="15" fill="#a6a6a6" fill-opacity=".8"/><text x="1075.5" y="679.5" font-size="10.9" text-anchor="middle" fill="#000">-50.0</text>
<rect x="1072" y="727" width="32" height="15" fill="#a6a6a6" fill-opacity=".8"/><text x="1088.0" y="738.5" font-size="10.9" text-anchor="middle" fill="#000">100.0</text>
<rect x="1144" y="724" width="39" height="15" fill="#a6a6a6" fill-opacity=".8"/><text x="1163.5" y="735.5" font-size="10.9" text-anchor="middle" fill="#000">1000.0</text>
<g>
<ellipse cx="1226" cy="262" rx="40" ry="13.500" fill="none" stroke="#dedede" stroke-width="6.500"/>
<path d="M1189 277 l10 -5 M1199 268 l-3 4 l5 1" stroke="#aaa" stroke-width="1.500" fill="none"/><path d="M1189 251 l6 -1 M1258 267 l9 2" stroke="#aaa" stroke-width="1.200"/>
<path d="M1197 226 L1220 221 L1251 225 L1250 259 L1231 272.500 L1198 263Z" fill="#9a9a9a" fill-opacity=".93" stroke="#1a1a1a" stroke-width="1.300" stroke-linejoin="round"/>
<path d="M1197 226 L1230 229 L1251 225 M1230 229 L1231 272.500 M1220 221 L1220 253 L1198 263 M1220 253 L1250 259" fill="none" stroke="#1a1a1a" stroke-width="1.200"/>
<path d="M1212 247 l2 4 M1216 246 l-1 6 M1242 244 l-1 5" stroke="#eee" stroke-width="1.200"/><path d="M1222 224.500 h4" stroke="#eee" stroke-width="1"/>
</g>
<text x="1243" y="315" font-size="14.500" text-anchor="middle" fill="#000">[%]</text>
<rect x="1229" y="347.30" width="25.500" height="15.51" fill="#b40000"/>
<rect x="1229" y="362.51" width="25.500" height="15.51" fill="#dc0000"/>
<rect x="1229" y="377.72" width="25.500" height="15.51" fill="#ff0a00"/>
<rect x="1229" y="392.93" width="25.500" height="15.51" fill="#ff4000"/>
<rect x="1229" y="408.14" width="25.500" height="15.51" fill="#ff7800"/>
<rect x="1229" y="423.35" width="25.500" height="15.51" fill="#ffaa00"/>
<rect x="1229" y="438.56" width="25.500" height="15.51" fill="#ffcc00"/>
<rect x="1229" y="453.77" width="25.500" height="15.51" fill="#ffee00"/>
<rect x="1229" y="468.98" width="25.500" height="15.51" fill="#d8e000"/>
<rect x="1229" y="484.19" width="25.500" height="15.51" fill="#80b000"/>
<rect x="1229" y="499.40" width="25.500" height="15.51" fill="#287800"/>
<rect x="1229" y="514.61" width="25.500" height="15.51" fill="#008030"/>
<rect x="1229" y="529.82" width="25.500" height="15.51" fill="#00b890"/>
<rect x="1229" y="545.03" width="25.500" height="15.51" fill="#00f0e0"/>
<rect x="1229" y="560.24" width="25.500" height="15.51" fill="#00c0ff"/>
<rect x="1229" y="575.45" width="25.500" height="15.51" fill="#0064ff"/>
<rect x="1229" y="590.66" width="25.500" height="15.51" fill="#0000ff"/>
<rect x="1229" y="605.87" width="25.500" height="15.51" fill="#4040e8"/>
<rect x="1229" y="621.08" width="25.500" height="15.51" fill="#8c8ce6"/>
<rect x="1229" y="636.29" width="25.500" height="15.51" fill="#d3d3d3"/>
<rect x="1229" y="347.3" width="25.500" height="304.2" fill="none" stroke="#000" stroke-width="1"/>
<path d="M1220.500 347.3 H1229" stroke="#000" stroke-width="1"/>
<text x="1213.500" y="344.8" font-size="12.300" text-anchor="end" fill="#000">1.100</text>
<path d="M1220.500 375.0 H1229" stroke="#000" stroke-width="1"/>
<text x="1213.500" y="372.5" font-size="12.300" text-anchor="end" fill="#000">1.00</text>
<path d="M1220.500 402.6 H1229" stroke="#000" stroke-width="1"/>
<text x="1213.500" y="400.1" font-size="12.300" text-anchor="end" fill="#000">0.90</text>
<path d="M1220.500 430.3 H1229" stroke="#000" stroke-width="1"/>
<text x="1213.500" y="427.8" font-size="12.300" text-anchor="end" fill="#000">0.80</text>
<path d="M1220.500 457.9 H1229" stroke="#000" stroke-width="1"/>
<text x="1213.500" y="455.4" font-size="12.300" text-anchor="end" fill="#000">0.70</text>
<path d="M1220.500 485.6 H1229" stroke="#000" stroke-width="1"/>
<text x="1213.500" y="483.1" font-size="12.300" text-anchor="end" fill="#000">0.60</text>
<path d="M1220.500 513.2 H1229" stroke="#000" stroke-width="1"/>
<text x="1213.500" y="510.7" font-size="12.300" text-anchor="end" fill="#000">0.50</text>
<path d="M1220.500 540.9 H1229" stroke="#000" stroke-width="1"/>
<text x="1213.500" y="538.4" font-size="12.300" text-anchor="end" fill="#000">0.40</text>
<path d="M1220.500 568.5 H1229" stroke="#000" stroke-width="1"/>
<text x="1213.500" y="566.0" font-size="12.300" text-anchor="end" fill="#000">0.30</text>
<path d="M1220.500 596.2 H1229" stroke="#000" stroke-width="1"/>
<text x="1213.500" y="593.7" font-size="12.300" text-anchor="end" fill="#000">0.20</text>
<path d="M1220.500 623.8 H1229" stroke="#000" stroke-width="1"/>
<text x="1213.500" y="621.3" font-size="12.300" text-anchor="end" fill="#000">0.10</text>
<path d="M1220.500 651.5 H1229" stroke="#000" stroke-width="1"/>
<text x="1213.500" y="663.0" font-size="12.300" text-anchor="end" fill="#000">0.000</text>
</svg>
<div id="split" class="abs"></div>
<div class="abs" style="left:1291px;top:183px;width:1px;height:937px;background:#a8a8a8"></div>
<div id="rtabs" class="abs"></div>
<div class="abs" style="left:1422px;top:162px;width:52px;height:21px;background:#f0f0f0"></div>
<div class="rt" style="left:1309px;color:#fff">Analysis</div>
<div class="rt" style="left:1378px;color:#fff">Plates</div>
<div class="rt" style="left:1435px;color:#f26f21">Bolts</div>
<div class="rt" style="left:1487px;color:#fff">Welds</div>
<div class="abs" style="left:1307px;top:199px;font-size:13.500px;font-weight:bold;color:#f26f21;letter-spacing:-.19px;white-space:nowrap">Check of bolts for extreme load effect</div>
<table class="bt"><colgroup><col style="width:29px"><col style="width:30px"><col style="width:47px"><col style="width:39px"><col style="width:72px"><col style="width:43px"><col style="width:50px"><col style="width:50px"><col style="width:50px"><col style="width:50px"><col style="width:50px"><col style="width:51px"></colgroup><tr><th></th><th></th><th>Status</th><th>Item</th><th>Grade</th><th>Loads</th><th>Ft<br>[kN]</th><th>V<br>[kN]</th><th>Fb,Rd<br>[kN]</th><th>Utt<br>[%]</th><th>Uts<br>[%]</th><th>Utts<br>[%]</th></tr><tr><td></td><td><span class="pb"></span></td><td><span class="ok"><svg width="18" height="18" style="position:absolute;left:-1.500px;top:-1.500px"><path d="M4.500 9.500 l3.200 3.300 l6 -7.500" fill="none" stroke="#fff" stroke-width="2.200"/></svg></span></td><td>B1</td><td>M24 10.9 - 1</td><td>LE1</td><td>213.0</td><td>2.8</td><td>201.7</td><td>83.8</td><td>2.0</td><td>61.8</td></tr><tr><td></td><td><span class="pb"></span></td><td><span class="ok"><svg width="18" height="18" style="position:absolute;left:-1.500px;top:-1.500px"><path d="M4.500 9.500 l3.200 3.300 l6 -7.500" fill="none" stroke="#fff" stroke-width="2.200"/></svg></span></td><td>B2</td><td>M24 10.9 - 1</td><td>LE1</td><td>236.3</td><td>1.7</td><td>201.7</td><td>93.0</td><td>1.2</td><td>67.6</td></tr><tr><td></td><td><span class="pb"></span></td><td><span class="ok"><svg width="18" height="18" style="position:absolute;left:-1.500px;top:-1.500px"><path d="M4.500 9.500 l3.200 3.300 l6 -7.500" fill="none" stroke="#fff" stroke-width="2.200"/></svg></span></td><td>B3</td><td>M24 10.9 - 1</td><td>LE1</td><td>213.3</td><td>2.8</td><td>201.7</td><td>83.9</td><td>2.0</td><td>61.9</td></tr><tr><td></td><td><span class="pb"></span></td><td><span class="ok"><svg width="18" height="18" style="position:absolute;left:-1.500px;top:-1.500px"><path d="M4.500 9.500 l3.200 3.300 l6 -7.500" fill="none" stroke="#fff" stroke-width="2.200"/></svg></span></td><td>B4</td><td>M24 10.9 - 1</td><td>LE1</td><td>235.7</td><td>1.7</td><td>201.7</td><td>92.7</td><td>1.2</td><td>67.4</td></tr><tr class="sel"><td><svg width="9" height="12" style="margin-left:4px;vertical-align:middle"><path d="M1.500 1.500 L7 6 L1.500 10.500" fill="none" stroke="#333" stroke-width="1.300"/></svg></td><td><span class="pb"></span></td><td><span class="ok"><svg width="18" height="18" style="position:absolute;left:-1.500px;top:-1.500px"><path d="M4.500 9.500 l3.200 3.300 l6 -7.500" fill="none" stroke="#fff" stroke-width="2.200"/></svg></span></td><td style="outline:1.500px solid #f26f21;outline-offset:-2px">B5</td><td>M24 10.9 - 1</td><td>LE1</td><td>9.3</td><td>3.3</td><td>201.7</td><td>3.7</td><td>2.3</td><td>5.0</td></tr><tr><td></td><td><span class="pb"></span></td><td><span class="ok"><svg width="18" height="18" style="position:absolute;left:-1.500px;top:-1.500px"><path d="M4.500 9.500 l3.200 3.300 l6 -7.500" fill="none" stroke="#fff" stroke-width="2.200"/></svg></span></td><td>B6</td><td>M24 10.9 - 1</td><td>LE1</td><td>209.7</td><td>3.4</td><td>201.7</td><td>82.5</td><td>2.4</td><td>61.4</td></tr><tr><td></td><td><span class="pb"></span></td><td><span class="ok"><svg width="18" height="18" style="position:absolute;left:-1.500px;top:-1.500px"><path d="M4.500 9.500 l3.200 3.300 l6 -7.500" fill="none" stroke="#fff" stroke-width="2.200"/></svg></span></td><td>B7</td><td>M24 10.9 - 1</td><td>LE1</td><td>9.3</td><td>3.3</td><td>201.7</td><td>3.6</td><td>2.3</td><td>4.9</td></tr><tr><td></td><td><span class="pb"></span></td><td><span class="ok"><svg width="18" height="18" style="position:absolute;left:-1.500px;top:-1.500px"><path d="M4.500 9.500 l3.200 3.300 l6 -7.500" fill="none" stroke="#fff" stroke-width="2.200"/></svg></span></td><td>B8</td><td>M24 10.9 - 1</td><td>LE1</td><td>212.4</td><td>3.4</td><td>201.7</td><td>83.6</td><td>2.4</td><td>62.1</td></tr><tr><td></td><td><span class="pb"></span></td><td><span class="ok"><svg width="18" height="18" style="position:absolute;left:-1.500px;top:-1.500px"><path d="M4.500 9.500 l3.200 3.300 l6 -7.500" fill="none" stroke="#fff" stroke-width="2.200"/></svg></span></td><td>B9</td><td>M24 10.9 - 1</td><td>LE1</td><td>55.5</td><td>3.3</td><td>201.7</td><td>21.8</td><td>2.3</td><td>17.9</td></tr><tr><td></td><td><span class="pb"></span></td><td><span class="ok"><svg width="18" height="18" style="position:absolute;left:-1.500px;top:-1.500px"><path d="M4.500 9.500 l3.200 3.300 l6 -7.500" fill="none" stroke="#fff" stroke-width="2.200"/></svg></span></td><td>B10</td><td>M24 10.9 - 1</td><td>LE1</td><td>108.4</td><td>3.5</td><td>201.7</td><td>42.6</td><td>2.5</td><td>33.0</td></tr><tr><td></td><td><span class="pb"></span></td><td><span class="ok"><svg width="18" height="18" style="position:absolute;left:-1.500px;top:-1.500px"><path d="M4.500 9.500 l3.200 3.300 l6 -7.500" fill="none" stroke="#fff" stroke-width="2.200"/></svg></span></td><td>B11</td><td>M24 10.9 - 1</td><td>LE1</td><td>55.4</td><td>3.3</td><td>201.7</td><td>21.8</td><td>2.3</td><td>17.9</td></tr><tr><td></td><td><span class="pb"></span></td><td><span class="ok"><svg width="18" height="18" style="position:absolute;left:-1.500px;top:-1.500px"><path d="M4.500 9.500 l3.200 3.300 l6 -7.500" fill="none" stroke="#fff" stroke-width="2.200"/></svg></span></td><td>B12</td><td>M24 10.9 - 1</td><td>LE1</td><td>107.1</td><td>3.5</td><td>201.7</td><td>42.1</td><td>2.5</td><td>32.6</td></tr><tr><td></td><td><span class="pb"></span></td><td><span class="ok"><svg width="18" height="18" style="position:absolute;left:-1.500px;top:-1.500px"><path d="M4.500 9.500 l3.200 3.300 l6 -7.500" fill="none" stroke="#fff" stroke-width="2.200"/></svg></span></td><td>B13</td><td>M24 10.9 - 1</td><td>LE1</td><td>9.5</td><td>3.4</td><td>201.7</td><td>3.7</td><td>2.4</td><td>5.1</td></tr><tr><td></td><td><span class="pb"></span></td><td><span class="ok"><svg width="18" height="18" style="position:absolute;left:-1.500px;top:-1.500px"><path d="M4.500 9.500 l3.200 3.300 l6 -7.500" fill="none" stroke="#fff" stroke-width="2.200"/></svg></span></td><td>B14</td><td>M24 10.9 - 1</td><td>LE1</td><td>118.0</td><td>3.7</td><td>201.7</td><td>46.4</td><td>2.6</td><td>35.8</td></tr><tr><td></td><td><span class="pb"></span></td><td><span class="ok"><svg width="18" height="18" style="position:absolute;left:-1.500px;top:-1.500px"><path d="M4.500 9.500 l3.200 3.300 l6 -7.500" fill="none" stroke="#fff" stroke-width="2.200"/></svg></span></td><td>B15</td><td>M24 10.9 - 1</td><td>LE1</td><td>9.3</td><td>3.4</td><td>201.7</td><td>3.7</td><td>2.4</td><td>5.0</td></tr><tr><td></td><td><span class="pb"></span></td><td><span class="ok"><svg width="18" height="18" style="position:absolute;left:-1.500px;top:-1.500px"><path d="M4.500 9.500 l3.200 3.300 l6 -7.500" fill="none" stroke="#fff" stroke-width="2.200"/></svg></span></td><td>B16</td><td>M24 10.9 - 1</td><td>LE1</td><td>120.5</td><td>3.7</td><td>201.7</td><td>47.4</td><td>2.6</td><td>36.5</td></tr></table>
<div class="redbox" style="left:1705px;top:363px;width:164px;height:41px"></div>
<div class="redbox" style="left:1705px;top:421px;width:164px;height:41px"></div>
<div class="redbox" style="left:1705px;top:595px;width:164px;height:41px"></div>
<div class="redbox" style="left:1705px;top:653px;width:164px;height:41px"></div>
<div class="abs" style="left:1893px;top:193px;width:17px;height:525px;background:#f0f0f0"></div>
<div class="abs" style="left:1893px;top:210px;width:17px;height:416px;background:#cdcdcd"></div>
<svg class="abs" style="left:1893px;top:193px" width="17" height="525"><path d="M5 11 l3.500 -3.500 l3.500 3.500 M5 514 l3.500 3.500 l3.500 -3.500" fill="none" stroke="#777" stroke-width="1"/></svg>
<div class="abs" style="left:1291px;top:727px;width:629px;height:6px;background:#cfcfcf;border-top:1px solid #b5b5b5"></div>
<div class="abs" style="left:1294px;top:737px;width:24px;height:24px;background:#e4e4e4;border:1px solid #c4c4c4"></div>
<svg class="abs" style="left:1294px;top:737px" width="24" height="24"><g stroke="#555" stroke-width="1" fill="none"><path d="M5.500 9 v-3.500 h3.500 M5.500 5.500 l4 4 M18.500 9 v-3.500 h-3.500 M18.500 5.500 l-4 4 M5.500 15 v3.500 h3.500 M5.500 18.500 l4 -4 M18.500 15 v3.500 h-3.500 M18.500 18.500 l-4 -4"/></g></svg>
<svg class="abs" style="left:1400px;top:745px" width="225" height="365" viewBox="1400 745 225 365" font-family="Liberation Sans, sans-serif">
<rect x="1415.5" y="753.3" width="192.20000000000005" height="346.20000000000005" fill="#dedede"/>
<clipPath id="cpP"><rect x="1415.5" y="753.3" width="192.20000000000005" height="346.20000000000005"/></clipPath><g clip-path="url(#cpP)">
<path d="M1415 782 L1432 776 L1452 774 L1466 768 L1484 766 L1510 771 L1532 769 L1548 765 L1570 772 L1590 774 L1608 780 L1608 806 L1592 810 L1575 809 L1562 812 L1558 846 L1540 853 L1512 856 L1485 852 L1466 846 L1464 812 L1440 810 L1428 808 L1415 808Z" fill="#9a9aec"/>
<path d="M1416 788 L1434 781 L1455 779 L1470 773 L1486 771 L1510 777 L1532 775 L1548 771 L1568 778 L1590 780 L1607 787 L1607 801 L1590 805 L1572 804 L1558 808 L1554 840 L1538 847 L1512 850 L1488 846 L1472 840 L1470 808 L1444 805 L1430 803 L1416 802Z" fill="#6464ee"/>
<path d="M1470 784 L1486 777 L1510 783 L1532 781 L1548 777 L1562 784 L1556 806 L1550 834 L1536 841 L1512 844 L1490 840 L1478 834 L1476 806Z" fill="#3434f8"/>
<path d="M1426 793 L1440 786 L1456 788 L1474 786 L1484 796 L1478 812 L1480 836 L1470 840 L1466 812 L1456 800 L1440 801 L1428 799Z" fill="#1478ff"/>
<path d="M1597 793 L1583 786 L1567 788 L1549 786 L1539 796 L1545 812 L1543 836 L1553 840 L1557 812 L1567 800 L1583 801 L1595 799Z" fill="#1478ff"/>
<path d="M1428 796 L1440 790 L1456 793 L1473 790 L1482 797 L1473 806 L1456 798 L1440 800Z" fill="#18d8f0"/>
<path d="M1595 796 L1583 790 L1567 793 L1550 790 L1541 797 L1550 806 L1567 798 L1583 800Z" fill="#18d8f0"/>
<circle cx="1439.6" cy="796.500" r="9.500" fill="#18e0e0"/><circle cx="1439.6" cy="797" r="7.800" fill="#b8d838"/>
<circle cx="1473.2" cy="796.500" r="9.500" fill="#18e0e0"/><circle cx="1473.2" cy="797" r="7.800" fill="#b8d838"/>
<circle cx="1549.7" cy="796.500" r="9.500" fill="#18e0e0"/><circle cx="1549.7" cy="797" r="7.800" fill="#b8d838"/>
<circle cx="1583.9" cy="796.500" r="9.500" fill="#18e0e0"/><circle cx="1583.9" cy="797" r="7.800" fill="#b8d838"/>
<path d="M1465.2 832 a8 9 0 0 0 16 0z" fill="#1490ff"/><path d="M1467.2 834 a6 6 0 0 0 12 0z" fill="#18e0e0"/>
<path d="M1541.7 832 a8 9 0 0 0 16 0z" fill="#1490ff"/><path d="M1543.7 834 a6 6 0 0 0 12 0z" fill="#18e0e0"/>
<path d="M1546.5 825.4L1547.5 818.9 M1501.5 993.8L1500.1 1015.5 M1521.8 838.3L1543.3 839.8 M1545.0 1080.1L1543.6 1099.5 M1555.4 1023.4L1554.5 1019.0 M1589.6 831.4L1595.2 828.0 M1468.4 833.4L1461.9 832.4 M1521.3 1055.9L1540.1 1049.9 M1437.4 785.0L1446.0 786.7 M1559.3 836.6L1572.6 832.4 M1415.5 926.4L1415.5 948.0 M1551.9 841.5L1543.3 839.8 M1440.8 1016.5L1446.0 1012.6 M1445.3 831.4L1433.9 829.0 M1438.4 802.0L1433.9 795.1 M1607.7 818.2L1607.7 839.8 M1442.8 1061.1L1449.2 1062.7 M1436.4 1051.5L1440.8 1050.6 M1578.2 829.0L1574.3 823.8 M1543.6 862.9L1563.9 861.4 M1459.7 816.0L1471.0 818.9 M1607.7 774.9L1595.2 794.1 M1556.1 786.7L1561.0 794.1 M1563.9 861.4L1551.9 841.5 M1522.3 753.3L1523.2 777.9 M1433.2 1031.8L1428.3 1024.4 M1554.5 1019.0L1561.0 1020.0 M1455.7 863.7L1478.8 860.3 M1607.7 839.8L1607.7 861.5 M1478.9 797.5L1482.8 802.7 M1456.4 1053.6L1446.0 1046.7 M1470.0 1017.4L1471.0 1010.9 M1415.5 1056.2L1415.5 1077.9 M1588.2 776.1L1590.3 786.7 M1586.5 969.5L1607.7 969.7 M1550.9 1050.6L1554.5 1053.1 M1523.2 777.9L1520.6 793.9 M1563.9 861.4L1565.2 883.2 M1478.9 1057.5L1467.5 1055.1 M1538.4 1024.4L1540.1 1015.8 M1587.1 801.1L1586.1 807.6 M1467.5 795.1L1470.0 791.5 M1544.9 1059.5L1543.3 1065.9 M1415.5 1077.9L1415.5 1099.5 M1478.9 1078.3L1482.8 1062.7 M1607.7 796.6L1595.2 794.1 M1478.8 860.3L1479.8 883.1 M1478.9 831.4L1476.4 835.0 M1607.7 818.2L1590.3 820.6 M1589.6 831.4L1587.1 835.0 M1415.5 904.8L1436.6 904.7 M1565.2 883.2L1564.9 905.0 M1441.8 1033.5L1446.0 1046.7 M1540.1 1015.8L1547.5 1010.9 M1551.9 1033.5L1556.1 1046.7 M1430.0 1049.9L1437.4 1045.0 M1548.5 802.0L1551.9 807.6 M1580.7 791.5L1585.1 790.6 M1472.0 835.9L1466.8 839.8 M1479.8 883.1L1479.5 904.8 M1607.7 839.8L1595.2 828.0 M1522.0 905.0L1522.0 926.4 M1587.1 835.0L1582.7 835.9 M1476.4 1027.0L1472.0 1027.9 M1445.3 831.4L1449.2 836.6 M1459.7 816.0L1450.9 828.0 M1607.7 991.3L1607.7 1013.0 M1478.0 793.1L1484.5 794.1 M1578.2 829.0L1588.7 827.0 M1437.4 1045.0L1446.0 1046.7 M1547.5 1045.0L1556.1 1046.7 M1434.8 833.4L1433.2 839.8 M1436.4 791.5L1437.4 785.0 M1474.4 824.5L1478.0 827.0 M1579.1 833.4L1572.6 832.4 M1522.0 926.4L1522.5 947.8 M1564.8 993.2L1581.7 1010.9 M1472.0 1027.9L1468.4 1025.4 M1552.9 835.0L1551.9 841.5 M1449.2 802.7L1450.9 794.1 M1582.7 1027.9L1579.1 1025.4 M1556.1 1046.7L1561.0 1054.1 M1437.1 926.5L1437.1 947.8 M1456.4 1053.6L1461.9 1058.5 M1544.0 829.0L1538.4 832.4 M1607.7 1077.9L1593.5 1062.7 M1520.3 1012.6L1538.4 1024.4 M1478.9 1057.5L1482.8 1062.7 M1457.1 777.4L1471.0 785.0 M1579.1 1025.4L1578.2 1021.0 M1468.4 1059.5L1467.5 1055.1 M1563.9 861.4L1588.7 864.2 M1574.3 789.9L1581.7 785.0 M1565.8 819.8L1551.9 807.6 M1587.7 991.8L1590.3 1012.6 M1546.5 825.4L1540.1 823.8 M1593.5 836.6L1586.1 841.5 M1482.8 1028.6L1475.4 1033.5 M1438.3 864.1L1441.8 841.5 M1524.8 1080.0L1545.0 1080.1 M1478.8 860.3L1500.1 860.6 M1500.1 860.6L1482.8 836.6 M1457.2 1078.5L1441.8 1067.6 M1415.5 796.6L1428.3 798.5 M1587.1 1061.1L1586.1 1067.6 M1521.3 1055.9L1538.4 1058.5 M1467.5 1055.1L1470.0 1051.5 M1442.8 801.1L1438.4 802.0 M1581.7 785.0L1590.3 786.7 M1578.2 1055.1L1580.7 1051.5 M1471.0 818.9L1479.6 820.6 M1555.4 1023.4L1561.0 1020.0 M1440.8 1016.5L1437.4 1010.9 M1445.3 831.4L1434.8 833.4 M1475.4 1033.5L1466.8 1031.8 M1585.1 1016.5L1590.3 1012.6 M1586.1 1033.5L1577.5 1031.8 M1522.0 905.0L1543.6 904.6 M1548.5 1062.0L1551.9 1067.6 M1548.5 802.0L1544.0 795.1 M1459.7 816.0L1463.6 823.8 M1415.5 839.8L1428.3 832.4 M1607.7 774.9L1590.3 786.7 M1580.7 1051.5L1585.1 1050.6 M1479.6 820.6L1484.5 828.0 M1554.5 1019.0L1556.1 1012.6 M1478.0 1053.1L1484.5 1054.1 M1593.5 1028.6L1590.3 1046.7 M1501.1 1033.5L1479.6 1046.7 M1466.8 1065.9L1461.9 1058.5 M1589.6 797.5L1588.7 793.1 M1478.9 797.5L1478.0 793.1 M1561.0 1020.0L1572.6 1024.4 M1445.3 797.5L1450.9 794.1 M1588.2 776.1L1581.7 785.0 M1544.9 799.5L1544.0 795.1 M1582.7 1027.9L1588.7 1019.0 M1457.1 777.4L1450.9 794.1 M1478.9 1057.5L1468.4 1059.5 M1524.7 818.4L1540.1 823.8 M1449.2 1062.7L1450.9 1054.1 M1461.9 1058.5L1463.6 1049.9 M1587.1 801.1L1593.5 802.7 M1433.9 829.0L1436.4 825.4 M1564.2 1035.5L1556.1 1046.7 M1555.4 1023.4L1552.9 1027.0 M1474.4 790.6L1471.0 785.0 M1566.4 797.7L1577.5 805.9 M1588.7 864.2L1607.7 883.1 M1551.9 1033.5L1547.5 1045.0 M1574.3 1049.9L1581.7 1045.0 M1436.6 904.7L1437.1 926.5 M1472.0 835.9L1475.4 841.5 M1607.7 1034.6L1593.5 1028.6 M1442.8 1061.1L1438.4 1062.0 M1459.7 816.0L1446.0 820.6 M1478.0 793.1L1479.6 786.7 M1466.8 1031.8L1471.0 1045.0 M1572.6 798.5L1574.3 789.9 M1564.3 841.1L1577.5 839.8 M1478.9 1078.3L1479.6 1099.5 M1579.1 833.4L1577.5 839.8 M1499.4 819.7L1482.8 802.7 M1457.5 1032.6L1441.8 1033.5 M1445.3 797.5L1442.8 801.1 M1456.4 1053.6L1449.2 1062.7 M1593.5 802.7L1595.2 794.1 M1475.4 807.6L1479.6 820.6 M1586.1 807.6L1590.3 820.6 M1457.2 1078.5L1478.9 1078.3 M1521.3 1055.9L1524.8 1080.0 M1467.5 1021.0L1461.9 1024.4 M1478.9 1057.5L1478.0 1053.1 M1587.1 801.1L1579.1 799.5 M1589.6 1057.5L1588.7 1053.1 M1552.9 801.1L1548.5 802.0 M1445.3 1057.5L1450.9 1054.1 M1458.2 753.3L1457.1 777.4 M1565.8 819.8L1559.3 802.7 M1587.7 991.8L1581.7 1010.9 M1498.5 772.2L1523.2 777.9 M1524.8 1080.0L1522.3 1099.5 M1588.7 864.2L1586.4 883.1 M1580.7 1017.4L1574.3 1015.8 M1587.1 1061.1L1593.5 1062.7 M1548.5 802.0L1544.9 799.5 M1472.0 835.9L1467.5 829.0 M1552.9 1061.1L1554.5 1053.1 M1433.2 805.9L1437.4 818.9 M1582.7 835.9L1578.2 829.0 M1500.1 860.6L1500.9 883.3 M1544.9 1025.4L1554.5 1019.0 M1590.3 820.6L1595.2 828.0 M1499.3 799.3L1520.6 793.9 M1436.6 904.7L1458.5 905.0 M1586.4 883.1L1586.1 905.0 M1433.9 795.1L1430.0 789.9 M1585.1 1016.5L1581.7 1010.9 M1474.4 1050.6L1471.0 1045.0 M1588.7 1053.1L1595.2 1054.1 M1415.5 796.6L1415.5 818.2 M1434.8 833.4L1433.9 829.0 M1415.5 839.8L1433.2 839.8 M1555.4 831.4L1559.3 836.6 M1500.9 883.3L1500.7 904.9 M1543.6 904.6L1543.6 926.7 M1478.0 1053.1L1479.6 1046.7 M1546.5 791.5L1547.5 785.0 M1449.2 802.7L1441.8 807.6 M1415.5 818.2L1415.5 839.8 M1572.6 1058.5L1574.3 1049.9 M1458.5 905.0L1458.1 926.7 M1589.6 797.5L1595.2 794.1 M1442.8 1027.0L1441.8 1033.5 M1501.1 926.6L1522.0 926.4 M1544.0 829.0L1546.5 825.4 M1543.6 926.7L1543.9 948.1 M1457.1 777.4L1446.0 786.7 M1587.2 1077.4L1586.3 1099.5 M1478.9 1057.5L1472.0 1062.0 M1445.3 1057.5L1442.8 1061.1 M1593.5 1062.7L1595.2 1054.1 M1551.9 807.6L1543.3 805.9 M1440.8 824.5L1446.0 820.6 M1458.1 926.7L1458.2 948.1 M1607.7 1056.2L1595.2 1054.1 M1500.1 1015.5L1501.1 1033.5 M1438.4 1027.9L1433.2 1031.8 M1500.6 948.3L1522.5 947.8 M1436.4 1017.4L1440.8 1016.5 M1578.2 795.1L1574.3 789.9 M1548.5 1027.9L1543.3 1031.8 M1580.7 1017.4L1588.7 1019.0 M1446.0 786.7L1450.9 794.1 M1587.1 1061.1L1579.1 1059.5 M1552.9 1061.1L1548.5 1062.0 M1588.7 864.2L1607.7 861.5 M1588.7 793.1L1590.3 786.7 M1433.2 839.8L1428.3 832.4 M1554.5 827.0L1561.0 828.0 M1522.3 883.1L1543.6 883.0 M1561.0 828.0L1574.3 823.8 M1501.1 1033.5L1500.0 1054.3 M1503.1 842.5L1484.5 828.0 M1565.0 753.3L1564.3 776.7 M1544.9 1025.4L1538.4 1024.4 M1434.8 1059.5L1428.3 1058.5 M1550.9 1016.5L1554.5 1019.0 M1437.0 883.4L1458.0 883.0 M1548.5 1062.0L1544.9 1059.5 M1415.5 969.7L1415.5 991.3 M1555.4 831.4L1544.9 833.4 M1482.8 836.6L1484.5 828.0 M1538.4 832.4L1540.1 823.8 M1459.2 994.1L1471.0 1010.9 M1433.9 1055.1L1430.0 1049.9 M1578.2 1021.0L1572.6 1024.4 M1544.0 1055.1L1540.1 1049.9 M1543.6 904.6L1564.9 905.0 M1564.2 1035.5L1551.9 1033.5 M1589.6 797.5L1587.1 801.1 M1477.2 993.0L1501.5 993.8 M1457.2 1078.5L1458.2 1099.5 M1415.5 1099.5L1436.9 1099.5 M1442.8 1027.0L1433.9 1021.0 M1586.1 807.6L1581.7 818.9 M1564.2 1035.5L1572.6 1024.4 M1500.9 1099.5L1522.3 1099.5 M1430.0 1015.8L1437.4 1010.9 M1458.5 905.0L1479.5 904.8 M1566.2 1058.2L1577.5 1065.9 M1607.7 883.1L1607.7 904.8 M1472.0 802.0L1466.8 805.9 M1449.2 1062.7L1441.8 1067.6 M1457.5 1032.6L1471.0 1045.0 M1470.0 1051.5L1463.6 1049.9 M1559.3 1062.7L1551.9 1067.6 M1607.7 861.5L1593.5 836.6 M1546.5 1051.5L1547.5 1045.0 M1445.3 1057.5L1436.4 1051.5 M1564.3 776.7L1574.3 789.9 M1564.2 1079.9L1551.9 1067.6 M1436.9 753.3L1458.2 753.3 M1589.6 1057.5L1595.2 1054.1 M1524.7 818.4L1521.8 838.3 M1476.4 835.0L1472.0 835.9 M1433.9 829.0L1428.3 832.4 M1437.4 1010.9L1446.0 1012.6 M1547.5 1010.9L1556.1 1012.6 M1434.8 799.5L1433.2 805.9 M1474.4 790.6L1478.0 793.1 M1579.1 799.5L1572.6 798.5 M1415.5 1056.2L1428.3 1058.5 M1607.7 991.3L1590.3 1012.6 M1551.9 1067.6L1543.3 1065.9 M1455.7 863.7L1441.8 841.5 M1582.7 835.9L1579.1 833.4 M1565.8 819.8L1574.3 823.8 M1556.1 1012.6L1561.0 1020.0 M1433.9 795.1L1428.3 798.5 M1446.0 1046.7L1450.9 1054.1 M1544.0 795.1L1538.4 798.5 M1607.7 1013.0L1595.2 1020.0 M1588.7 1053.1L1590.3 1046.7 M1498.5 772.2L1479.6 786.7 M1477.1 776.0L1479.6 786.7 M1607.7 1034.6L1590.3 1046.7 M1555.4 831.4L1554.5 827.0 M1478.9 1023.4L1482.8 1028.6 M1445.3 1023.4L1444.4 1019.0 M1524.7 818.4L1538.4 798.5 M1468.4 1025.4L1467.5 1021.0 M1579.1 833.4L1578.2 829.0 M1544.0 1055.1L1554.5 1053.1 M1546.5 791.5L1540.1 789.9 M1470.0 825.4L1471.0 818.9 M1436.4 825.4L1430.0 823.8 M1499.3 799.3L1484.5 794.1 M1499.4 819.7L1479.6 820.6 M1442.8 1027.0L1449.2 1028.6 M1467.5 1021.0L1470.0 1017.4 M1587.1 1027.0L1586.1 1033.5 M1577.5 1031.8L1574.3 1049.9 M1552.9 1027.0L1559.3 1028.6 M1564.2 1079.9L1587.2 1077.4 M1472.0 802.0L1470.0 791.5 M1564.3 776.7L1556.1 786.7 M1546.0 774.7L1556.1 786.7 M1589.6 1057.5L1587.1 1061.1 M1415.5 948.0L1415.5 969.7 M1440.8 824.5L1437.4 818.9 M1585.1 824.5L1590.3 820.6 M1550.9 824.5L1547.5 818.9 M1522.3 1099.5L1543.6 1099.5 M1548.5 1027.9L1551.9 1033.5 M1472.0 1062.0L1466.8 1065.9 M1580.7 1017.4L1585.1 1016.5 M1579.1 799.5L1585.1 790.6 M1566.4 797.7L1561.0 794.1 M1565.8 819.8L1556.1 820.6 M1554.5 827.0L1556.1 820.6 M1501.1 1033.5L1482.8 1028.6 M1561.0 828.0L1572.6 832.4 M1444.4 1019.0L1446.0 1012.6 M1577.5 839.8L1572.6 832.4 M1498.8 1075.8L1524.8 1080.0 M1450.9 1020.0L1461.9 1024.4 M1543.6 753.3L1565.0 753.3 M1482.8 1028.6L1479.6 1046.7 M1607.7 861.5L1607.7 883.1 M1434.8 1059.5L1433.2 1065.9 M1543.3 805.9L1547.5 818.9 M1474.4 1050.6L1478.0 1053.1 M1544.0 795.1L1550.9 790.6 M1446.0 1046.7L1463.6 1049.9 M1520.6 793.9L1524.7 818.4 M1449.2 1028.6L1450.9 1020.0 M1498.8 1075.8L1482.8 1062.7 M1415.5 1013.0L1428.3 1024.4 M1544.0 1055.1L1538.4 1058.5 M1564.2 1035.5L1559.3 1028.6 M1564.2 1035.5L1577.5 1031.8 M1564.9 905.0L1565.1 926.4 M1472.0 802.0L1475.4 807.6 M1478.9 831.4L1484.5 828.0 M1457.5 1032.6L1463.6 1049.9 M1546.5 1051.5L1540.1 1049.9 M1459.7 816.0L1449.2 802.7 M1564.2 1079.9L1559.3 1062.7 M1479.5 904.8L1479.7 926.1 M1565.1 926.4L1564.7 948.1 M1459.7 816.0L1466.8 805.9 M1555.4 797.5L1544.0 795.1 M1579.1 1059.5L1588.7 1053.1 M1559.3 802.7L1577.5 805.9 M1579.1 799.5L1577.5 805.9 M1467.5 829.0L1463.6 823.8 M1479.7 926.1L1479.9 947.8 M1522.5 947.8L1522.4 969.9 M1415.5 774.9L1430.0 789.9 M1589.6 1023.4L1593.5 1028.6 M1520.5 1036.7L1540.1 1049.9 M1434.8 1059.5L1436.4 1051.5 M1607.7 1034.6L1607.7 1056.2 M1455.7 863.7L1466.8 839.8 M1437.1 947.8L1436.8 969.5 M1477.1 776.0L1471.0 785.0 M1482.8 836.6L1475.4 841.5 M1524.7 818.4L1543.3 805.9 M1580.7 825.4L1581.7 818.9 M1522.4 969.9L1522.9 993.0 M1459.2 994.1L1446.0 1012.6 M1476.4 1061.1L1475.4 1067.6 M1445.3 1023.4L1450.9 1020.0 M1415.5 818.2L1430.0 823.8 M1578.2 1021.0L1580.7 1017.4 M1471.0 785.0L1479.6 786.7 M1458.0 883.0L1479.8 883.1 M1436.8 969.5L1437.1 991.8 M1479.6 753.3L1498.5 772.2 M1500.9 753.3L1498.5 772.2 M1474.4 1016.5L1479.6 1012.6 M1586.1 841.5L1577.5 839.8 M1459.5 794.5L1467.5 795.1 M1564.2 1079.9L1565.0 1099.5 M1457.5 1032.6L1446.0 1046.7 M1522.7 863.4L1543.3 839.8 M1587.1 1027.0L1593.5 1028.6 M1552.9 1027.0L1554.5 1019.0 M1470.0 1051.5L1474.4 1050.6 M1546.0 774.7L1547.5 785.0 M1564.9 905.0L1586.1 905.0 M1582.7 1062.0L1577.5 1065.9 M1590.3 786.7L1595.2 794.1 M1544.9 833.4L1554.5 827.0 M1434.4 1076.2L1457.2 1078.5 M1498.5 772.2L1499.3 799.3 M1470.0 791.5L1474.4 790.6 M1478.0 1019.0L1484.5 1020.0 M1500.0 1054.3L1520.5 1036.7 M1500.1 1015.5L1484.5 1020.0 M1466.8 1031.8L1461.9 1024.4 M1479.5 904.8L1500.7 904.9 M1472.0 1062.0L1475.4 1067.6 M1555.4 797.5L1559.3 802.7 M1415.5 926.4L1437.1 926.5 M1434.8 799.5L1433.9 795.1 M1579.1 1059.5L1572.6 1058.5 M1588.7 1019.0L1595.2 1020.0 M1579.1 799.5L1580.7 791.5 M1467.5 829.0L1478.0 827.0 M1436.9 1099.5L1458.2 1099.5 M1543.6 753.3L1546.0 774.7 M1585.1 790.6L1588.7 793.1 M1572.6 1024.4L1574.3 1015.8 M1522.5 947.8L1543.9 948.1 M1500.0 1054.3L1484.5 1054.1 M1543.3 805.9L1540.1 823.8 M1476.4 801.1L1482.8 802.7 M1442.8 835.0L1441.8 841.5 M1577.5 1031.8L1572.6 1024.4 M1607.7 1013.0L1607.7 1034.6 M1544.0 795.1L1546.5 791.5 M1503.1 842.5L1521.8 838.3 M1445.3 1023.4L1442.8 1027.0 M1437.5 776.4L1446.0 786.7 M1437.1 947.8L1458.2 948.1 M1586.6 926.4L1586.5 948.2 M1440.8 790.6L1446.0 786.7 M1586.1 1033.5L1590.3 1046.7 M1438.4 835.9L1433.2 839.8 M1582.7 802.0L1586.1 807.6 M1415.5 774.9L1437.5 776.4 M1548.5 835.9L1543.3 839.8 M1436.4 825.4L1440.8 824.5 M1501.1 926.6L1500.6 948.3 M1463.6 789.9L1471.0 785.0 M1477.2 993.0L1471.0 1010.9 M1459.5 794.5L1450.9 794.1 M1566.2 1058.2L1561.0 1054.1 M1552.9 1027.0L1548.5 1027.9 M1433.2 805.9L1428.3 798.5 M1554.5 793.1L1561.0 794.1 M1561.0 794.1L1574.3 789.9 M1449.2 802.7L1446.0 820.6 M1415.5 861.5L1415.5 883.1 M1544.9 833.4L1538.4 832.4 M1468.4 833.4L1466.8 839.8 M1434.8 1025.4L1428.3 1024.4 M1550.9 824.5L1554.5 827.0 M1501.5 993.8L1520.3 1012.6 M1565.2 883.2L1586.4 883.1 M1543.6 969.6L1541.6 989.9 M1564.2 1035.5L1574.3 1049.9 M1438.4 1062.0L1434.8 1059.5 M1482.8 802.7L1484.5 794.1 M1579.1 1059.5L1585.1 1050.6 M1538.4 798.5L1540.1 789.9 M1479.8 883.1L1500.9 883.3 M1541.6 989.9L1547.5 1010.9 M1590.3 1046.7L1595.2 1054.1 M1467.5 829.0L1461.9 832.4 M1438.4 802.0L1434.8 799.5 M1433.9 1021.0L1430.0 1015.8 M1578.2 829.0L1572.6 832.4 M1544.0 1021.0L1540.1 1015.8 M1589.6 1023.4L1588.7 1019.0 M1555.4 1057.5L1559.3 1062.7 M1415.5 991.3L1437.4 1010.9 M1430.0 823.8L1437.4 818.9 M1522.0 926.4L1543.6 926.7 M1563.9 861.4L1577.5 839.8 M1458.2 1099.5L1479.6 1099.5 M1580.7 825.4L1574.3 823.8 M1585.1 1050.6L1588.7 1053.1 M1470.0 1017.4L1463.6 1015.8 M1546.5 1017.4L1547.5 1010.9 M1559.3 1028.6L1551.9 1033.5 M1476.4 1061.1L1482.8 1062.7 M1437.1 926.5L1458.1 926.7 M1556.1 1046.7L1574.3 1049.9 M1586.1 905.0L1586.6 926.4 M1544.0 1055.1L1546.5 1051.5 M1559.3 1028.6L1572.6 1024.4 M1479.6 753.3L1500.9 753.3 M1474.4 1016.5L1471.0 1010.9 M1478.8 860.3L1466.8 839.8 M1440.8 1050.6L1446.0 1046.7 M1582.7 1062.0L1586.1 1067.6 M1544.9 833.4L1550.9 824.5 M1441.8 1033.5L1437.4 1045.0 M1437.5 776.4L1457.1 777.4 M1463.6 1049.9L1471.0 1045.0 M1499.4 819.7L1524.7 818.4 M1588.7 1019.0L1590.3 1012.6 M1433.2 1065.9L1428.3 1058.5 M1554.5 1053.1L1561.0 1054.1 M1555.4 797.5L1554.5 793.1 M1445.3 831.4L1444.4 827.0 M1415.5 753.3L1436.9 753.3 M1467.5 829.0L1474.4 824.5 M1433.9 1021.0L1444.4 1019.0 M1578.2 829.0L1585.1 824.5 M1438.4 802.0L1444.4 793.1 M1500.7 904.9L1501.1 926.6 M1565.7 1014.7L1561.0 1020.0 M1581.7 1045.0L1590.3 1046.7 M1544.0 1021.0L1554.5 1019.0 M1436.4 791.5L1430.0 789.9 M1482.8 1062.7L1484.5 1054.1 M1550.9 790.6L1556.1 786.7 M1538.4 1058.5L1540.1 1049.9 M1415.5 839.8L1415.5 861.5 M1564.8 993.2L1574.3 1015.8 M1458.8 837.6L1450.9 828.0 M1442.8 835.0L1449.2 836.6 M1552.9 835.0L1559.3 836.6 M1470.0 1017.4L1478.0 1019.0 M1457.5 1032.6L1461.9 1024.4 M1437.5 776.4L1437.4 785.0 M1440.8 790.6L1437.4 785.0 M1586.1 1033.5L1581.7 1045.0 M1444.4 827.0L1450.9 828.0 M1450.9 828.0L1463.6 823.8 M1458.2 948.1L1458.0 969.9 M1457.1 777.4L1463.6 789.9 M1548.5 835.9L1551.9 841.5 M1544.9 1059.5L1544.0 1055.1 M1586.1 905.0L1607.7 904.8 M1500.7 969.6L1522.4 969.9 M1554.5 793.1L1556.1 786.7 M1478.9 831.4L1467.5 829.0 M1565.8 819.8L1577.5 805.9 M1501.5 993.8L1479.6 1012.6 M1593.5 802.7L1590.3 820.6 M1520.5 1036.7L1538.4 1024.4 M1589.6 831.4L1578.2 829.0 M1457.2 1078.5L1449.2 1062.7 M1500.0 1054.3L1498.8 1075.8 M1434.8 1025.4L1433.2 1031.8 M1501.5 993.8L1522.9 993.0 M1545.0 1080.1L1564.2 1079.9 M1586.3 753.3L1607.7 753.3 M1457.2 1078.5L1466.8 1065.9 M1607.7 774.9L1607.7 796.6 M1523.2 777.9L1540.1 789.9 M1445.3 831.4L1438.4 835.9 M1415.5 991.3L1415.5 1013.0 M1449.2 836.6L1450.9 828.0 M1541.6 989.9L1540.1 1015.8 M1551.9 807.6L1556.1 820.6 M1476.4 1027.0L1470.0 1017.4 M1415.5 818.2L1428.3 798.5 M1524.8 1080.0L1538.4 1058.5 M1544.0 1021.0L1538.4 1024.4 M1543.6 1099.5L1565.0 1099.5 M1436.4 1051.5L1437.4 1045.0 M1564.8 993.2L1556.1 1012.6 M1476.4 801.1L1472.0 802.0 M1415.5 991.3L1430.0 1015.8 M1552.9 835.0L1544.9 833.4 M1547.5 818.9L1556.1 820.6 M1522.3 753.3L1543.6 753.3 M1478.9 797.5L1484.5 794.1 M1468.4 799.5L1461.9 798.5 M1449.2 802.7L1461.9 798.5 M1437.1 991.8L1446.0 1012.6 M1550.9 1050.6L1556.1 1046.7 M1582.7 802.0L1579.1 799.5 M1524.7 818.4L1538.4 832.4 M1441.8 807.6L1433.2 805.9 M1579.1 1025.4L1588.7 1019.0 M1523.2 777.9L1546.0 774.7 M1446.0 1012.6L1450.9 1020.0 M1415.5 861.5L1433.2 839.8 M1607.7 926.4L1607.7 948.0 M1546.5 825.4L1550.9 824.5 M1467.5 795.1L1463.6 789.9 M1543.9 948.1L1543.6 969.6 M1589.6 831.4L1593.5 836.6 M1468.4 833.4L1467.5 829.0 M1543.3 805.9L1538.4 798.5 M1482.8 802.7L1475.4 807.6 M1580.7 791.5L1581.7 785.0 M1440.8 1016.5L1444.4 1019.0 M1607.7 753.3L1607.7 774.9 M1445.3 831.4L1440.8 824.5 M1587.1 835.0L1586.1 841.5 M1476.4 1027.0L1475.4 1033.5 M1543.3 1031.8L1547.5 1045.0 M1586.4 883.1L1607.7 883.1 M1578.2 829.0L1580.7 825.4 M1564.8 969.8L1564.8 993.2 M1428.3 832.4L1430.0 823.8 M1445.3 831.4L1450.9 828.0 M1438.4 802.0L1440.8 790.6 M1550.9 790.6L1547.5 785.0 M1586.1 807.6L1577.5 805.9 M1457.5 1032.6L1449.2 1028.6 M1474.4 824.5L1479.6 820.6 M1478.9 797.5L1476.4 801.1 M1472.0 1027.9L1466.8 1031.8 M1470.0 1017.4L1474.4 1016.5 M1457.5 1032.6L1466.8 1031.8 M1475.4 807.6L1471.0 818.9 M1437.5 776.4L1430.0 789.9 M1607.7 1077.9L1607.7 1099.5 M1540.1 823.8L1547.5 818.9 M1582.7 1027.9L1577.5 1031.8 M1478.0 827.0L1484.5 828.0 M1444.4 827.0L1446.0 820.6 M1588.7 827.0L1595.2 828.0 M1450.9 828.0L1461.9 832.4 M1543.6 926.7L1565.1 926.4 M1466.8 839.8L1461.9 832.4 M1520.3 1012.6L1520.5 1036.7 M1587.1 801.1L1582.7 802.0 M1478.9 1057.5L1474.4 1050.6 M1478.9 1057.5L1484.5 1054.1 M1607.7 796.6L1593.5 802.7 M1579.1 1025.4L1572.6 1024.4 M1468.4 1059.5L1461.9 1058.5 M1449.2 1062.7L1461.9 1058.5 M1478.9 1078.3L1466.8 1065.9 M1458.1 926.7L1479.7 926.1 M1607.7 904.8L1607.7 926.4 M1441.8 1067.6L1433.2 1065.9 M1520.5 1036.7L1543.3 1031.8 M1479.6 1099.5L1500.9 1099.5 M1543.9 948.1L1564.7 948.1 M1572.6 832.4L1574.3 823.8 M1559.3 836.6L1561.0 828.0 M1586.3 753.3L1588.2 776.1 M1442.8 801.1L1441.8 807.6 M1433.2 805.9L1430.0 823.8 M1467.5 1055.1L1463.6 1049.9 M1415.5 1034.6L1430.0 1049.9 M1521.8 838.3L1522.7 863.4 M1607.7 839.8L1593.5 836.6 M1472.0 835.9L1468.4 833.4 M1578.2 1055.1L1574.3 1049.9 M1445.3 831.4L1442.8 835.0 M1543.3 1065.9L1538.4 1058.5 M1415.5 818.2L1433.2 805.9 M1442.8 1061.1L1436.4 1051.5 M1524.8 1080.0L1543.3 1065.9 M1545.0 1080.1L1543.3 1065.9 M1548.5 1062.0L1554.5 1053.1 M1436.4 791.5L1440.8 790.6 M1436.4 1051.5L1430.0 1049.9 M1415.5 969.7L1436.8 969.5 M1564.8 993.2L1547.5 1010.9 M1564.7 948.1L1564.8 969.8 M1460.2 1011.7L1471.0 1010.9 M1580.7 1051.5L1581.7 1045.0 M1458.8 837.6L1441.8 841.5 M1552.9 835.0L1548.5 835.9 M1593.5 802.7L1586.1 807.6 M1478.9 797.5L1470.0 791.5 M1479.9 947.8L1479.7 969.9 M1437.1 991.8L1437.4 1010.9 M1468.4 799.5L1466.8 805.9 M1449.2 802.7L1466.8 805.9 M1550.9 1050.6L1547.5 1045.0 M1588.7 864.2L1577.5 839.8 M1607.7 1056.2L1607.7 1077.9 M1478.9 1057.5L1476.4 1061.1 M1475.4 841.5L1466.8 839.8 M1544.9 1059.5L1554.5 1053.1 M1438.4 1027.9L1441.8 1033.5 M1467.5 795.1L1461.9 798.5 M1433.9 829.0L1430.0 823.8 M1578.2 795.1L1572.6 798.5 M1565.0 1099.5L1586.3 1099.5 M1589.6 831.4L1588.7 827.0 M1587.1 1061.1L1582.7 1062.0 M1555.4 1023.4L1559.3 1028.6 M1580.7 791.5L1574.3 789.9 M1544.9 1025.4L1543.3 1031.8 M1585.1 1016.5L1588.7 1019.0 M1607.7 1034.6L1595.2 1020.0 M1460.2 1011.7L1450.9 1020.0 M1476.4 1027.0L1482.8 1028.6 M1442.8 1061.1L1441.8 1067.6 M1436.4 1051.5L1444.4 1053.1 M1546.0 774.7L1564.3 776.7 M1433.9 1055.1L1428.3 1058.5 M1474.4 824.5L1471.0 818.9 M1564.7 948.1L1586.5 948.2 M1478.9 1078.3L1498.8 1075.8 M1445.3 797.5L1449.2 802.7 M1456.4 1053.6L1450.9 1054.1 M1582.7 1027.9L1586.1 1033.5 M1468.4 799.5L1470.0 791.5 M1463.6 1015.8L1471.0 1010.9 M1479.9 947.8L1500.6 948.3 M1588.7 827.0L1590.3 820.6 M1593.5 1062.7L1586.1 1067.6 M1436.9 753.3L1437.5 776.4 M1478.9 1057.5L1470.0 1051.5 M1438.4 1027.9L1433.9 1021.0 M1449.2 1062.7L1466.8 1065.9 M1468.4 1059.5L1466.8 1065.9 M1415.5 948.0L1437.1 947.8 M1559.3 1062.7L1577.5 1065.9 M1577.5 805.9L1581.7 818.9 M1552.9 801.1L1551.9 807.6 M1581.7 1010.9L1590.3 1012.6 M1564.2 1079.9L1577.5 1065.9 M1587.2 1077.4L1577.5 1065.9 M1458.2 753.3L1479.6 753.3 M1607.7 818.2L1595.2 828.0 M1482.8 1028.6L1484.5 1020.0 M1566.4 797.7L1574.3 789.9 M1442.8 801.1L1449.2 802.7 M1548.5 802.0L1543.3 805.9 M1578.2 1055.1L1572.6 1058.5 M1500.1 860.6L1522.7 863.4 M1415.5 1077.9L1428.3 1058.5 M1607.7 1013.0L1590.3 1012.6 M1444.4 793.1L1450.9 794.1 M1450.9 794.1L1463.6 789.9 M1478.9 1023.4L1478.0 1019.0 M1460.2 1011.7L1463.6 1015.8 M1434.8 833.4L1428.3 832.4 M1555.4 831.4L1561.0 828.0 M1470.0 825.4L1463.6 823.8 M1522.9 993.0L1520.3 1012.6 M1588.7 864.2L1586.1 841.5 M1544.0 829.0L1540.1 823.8 M1546.5 1051.5L1554.5 1053.1 M1479.6 786.7L1484.5 794.1 M1445.3 1057.5L1449.2 1062.7 M1585.1 824.5L1581.7 818.9 M1587.2 1077.4L1607.7 1077.9 M1552.9 801.1L1544.0 795.1 M1436.4 1017.4L1437.4 1010.9 M1559.3 836.6L1551.9 841.5 M1565.1 926.4L1586.6 926.4 M1500.1 1015.5L1520.3 1012.6 M1438.3 864.1L1433.2 839.8 M1586.3 1099.5L1607.7 1099.5 M1499.3 799.3L1499.4 819.7 M1415.5 796.6L1430.0 789.9 M1552.9 1061.1L1551.9 1067.6 M1547.5 785.0L1556.1 786.7 M1461.9 1024.4L1463.6 1015.8 M1479.7 926.1L1501.1 926.6 M1433.9 795.1L1436.4 791.5 M1501.1 1033.5L1520.5 1036.7 M1550.9 1016.5L1556.1 1012.6 M1460.2 1011.7L1446.0 1012.6 M1565.0 753.3L1586.3 753.3 M1555.4 831.4L1552.9 835.0 M1548.5 1062.0L1543.3 1065.9 M1475.4 1033.5L1479.6 1046.7 M1574.3 1015.8L1581.7 1010.9 M1522.4 969.9L1543.6 969.6 M1446.0 820.6L1450.9 828.0 M1546.5 791.5L1550.9 790.6 M1458.8 837.6L1455.7 863.7 M1564.3 776.7L1588.2 776.1 M1444.4 1053.1L1450.9 1054.1 M1445.3 797.5L1444.4 793.1 M1589.6 797.5L1593.5 802.7 M1522.9 993.0L1540.1 1015.8 M1436.8 969.5L1458.0 969.9 M1442.8 1027.0L1438.4 1027.9 M1586.5 948.2L1586.5 969.5 M1468.4 799.5L1467.5 795.1 M1561.0 1054.1L1574.3 1049.9 M1522.9 993.0L1541.6 989.9 M1471.0 1045.0L1479.6 1046.7 M1415.5 1034.6L1428.3 1024.4 M1440.8 824.5L1444.4 827.0 M1500.6 948.3L1500.7 969.6 M1607.7 1056.2L1593.5 1062.7 M1438.4 1027.9L1434.8 1025.4 M1552.9 801.1L1559.3 802.7 M1476.4 835.0L1475.4 841.5 M1578.2 795.1L1580.7 791.5 M1548.5 1027.9L1544.9 1025.4 M1428.3 798.5L1430.0 789.9 M1587.2 1077.4L1586.1 1067.6 M1479.6 1046.7L1484.5 1054.1 M1415.5 883.1L1415.5 904.8 M1607.7 969.7L1607.7 991.3 M1474.4 790.6L1479.6 786.7 M1566.4 797.7L1572.6 798.5 M1503.1 842.5L1482.8 836.6 M1544.9 1025.4L1544.0 1021.0 M1434.8 1059.5L1433.9 1055.1 M1582.7 835.9L1577.5 839.8 M1540.1 789.9L1547.5 785.0 M1415.5 1077.9L1433.2 1065.9 M1434.4 1076.2L1433.2 1065.9 M1564.3 841.1L1551.9 841.5 M1459.2 994.1L1460.2 1011.7 M1444.4 793.1L1446.0 786.7 M1449.2 1028.6L1441.8 1033.5 M1466.8 805.9L1461.9 798.5 M1482.8 802.7L1479.6 820.6 M1607.7 796.6L1607.7 818.2 M1564.3 841.1L1572.6 832.4 M1478.9 1023.4L1484.5 1020.0 M1433.9 1055.1L1436.4 1051.5 M1415.5 818.2L1428.3 832.4 M1449.2 1028.6L1461.9 1024.4 M1586.6 926.4L1607.7 926.4 M1468.4 1025.4L1461.9 1024.4 M1437.4 818.9L1446.0 820.6 M1445.3 797.5L1438.4 802.0 M1589.6 797.5L1579.1 799.5 M1441.8 1033.5L1433.2 1031.8 M1551.9 1033.5L1543.3 1031.8 M1587.1 1027.0L1588.7 1019.0 M1472.0 802.0L1468.4 799.5 M1459.5 794.5L1463.6 789.9 M1546.5 1051.5L1550.9 1050.6 M1566.2 1058.2L1574.3 1049.9 M1546.0 774.7L1540.1 789.9 M1586.5 948.2L1607.7 948.0 M1467.5 1021.0L1463.6 1015.8 M1556.1 820.6L1561.0 828.0 M1445.3 1057.5L1444.4 1053.1 M1477.1 776.0L1498.5 772.2 M1415.5 861.5L1438.3 864.1 M1589.6 1057.5L1593.5 1062.7 M1478.0 1019.0L1479.6 1012.6 M1543.3 1031.8L1538.4 1024.4 M1476.4 835.0L1467.5 829.0 M1500.1 1015.5L1479.6 1012.6 M1548.5 1027.9L1554.5 1019.0 M1543.6 969.6L1564.8 969.8 M1579.1 799.5L1578.2 795.1 M1436.4 1017.4L1430.0 1015.8 M1579.1 1059.5L1577.5 1065.9 M1580.7 1017.4L1581.7 1010.9 M1415.5 883.1L1437.0 883.4 M1552.9 1061.1L1559.3 1062.7 M1593.5 1028.6L1595.2 1020.0 M1501.1 1033.5L1484.5 1020.0 M1428.3 1058.5L1430.0 1049.9 M1541.6 989.9L1564.8 993.2 M1500.0 1054.3L1479.6 1046.7 M1550.9 1016.5L1547.5 1010.9 M1474.4 1050.6L1479.6 1046.7 M1478.9 1023.4L1476.4 1027.0 M1459.2 994.1L1477.2 993.0 M1475.4 1033.5L1471.0 1045.0 M1540.1 1049.9L1547.5 1045.0 M1438.4 835.9L1441.8 841.5 M1470.0 825.4L1474.4 824.5 M1499.3 799.3L1482.8 802.7 M1444.4 1053.1L1446.0 1046.7 M1587.1 1027.0L1582.7 1027.9 M1433.2 1031.8L1437.4 1045.0 M1415.5 1034.6L1433.2 1031.8 M1458.0 969.9L1459.2 994.1 M1544.9 833.4L1543.3 839.8 M1585.1 824.5L1588.7 827.0 M1589.6 1057.5L1579.1 1059.5 M1559.3 1062.7L1561.0 1054.1 M1476.4 835.0L1482.8 836.6 M1472.0 1062.0L1468.4 1059.5 M1559.3 802.7L1561.0 794.1 M1587.2 1077.4L1593.5 1062.7 M1566.4 797.7L1559.3 802.7 M1441.8 807.6L1446.0 820.6 M1579.1 1059.5L1580.7 1051.5 M1498.8 1075.8L1500.9 1099.5 M1433.9 1021.0L1428.3 1024.4 M1588.7 793.1L1595.2 794.1 M1588.2 776.1L1607.7 774.9 M1565.7 1014.7L1574.3 1015.8 M1582.7 835.9L1586.1 841.5 M1555.4 1057.5L1554.5 1053.1 M1589.6 1023.4L1595.2 1020.0 M1415.5 1013.0L1415.5 1034.6 M1434.4 1076.2L1441.8 1067.6 M1564.3 841.1L1559.3 836.6 M1546.5 1017.4L1540.1 1015.8 M1478.9 1023.4L1470.0 1017.4 M1445.3 1023.4L1433.9 1021.0 M1468.4 1025.4L1466.8 1031.8 M1415.5 1034.6L1415.5 1056.2 M1578.2 1021.0L1574.3 1015.8 M1479.6 753.3L1477.1 776.0 M1466.8 805.9L1471.0 818.9 M1564.3 841.1L1563.9 861.4 M1458.2 948.1L1479.9 947.8 M1478.8 860.3L1475.4 841.5 M1440.8 1050.6L1437.4 1045.0 M1500.9 753.3L1522.3 753.3 M1459.5 794.5L1461.9 798.5 M1478.9 831.4L1482.8 836.6 M1566.2 1058.2L1572.6 1058.5 M1544.9 833.4L1546.5 825.4 M1470.0 1051.5L1471.0 1045.0 M1522.7 863.4L1522.3 883.1 M1543.6 862.9L1543.3 839.8 M1607.7 861.5L1586.1 841.5 M1458.0 969.9L1479.7 969.9 M1564.3 776.7L1581.7 785.0 M1607.7 948.0L1607.7 969.7 M1520.6 793.9L1540.1 789.9 M1470.0 791.5L1471.0 785.0 M1554.5 1053.1L1556.1 1046.7 M1438.3 864.1L1437.0 883.4 M1555.4 797.5L1561.0 794.1 M1434.8 799.5L1428.3 798.5 M1467.5 829.0L1470.0 825.4 M1433.9 1021.0L1440.8 1016.5 M1522.3 883.1L1522.0 905.0 M1415.5 991.3L1437.1 991.8 M1415.5 1056.2L1430.0 1049.9 M1565.7 1014.7L1556.1 1012.6 M1589.6 1023.4L1587.1 1027.0 M1585.1 790.6L1590.3 786.7 M1475.4 807.6L1466.8 805.9 M1565.8 819.8L1581.7 818.9 M1437.0 883.4L1436.6 904.7 M1479.7 969.9L1477.2 993.0 M1580.7 825.4L1585.1 824.5 M1544.0 795.1L1540.1 789.9 M1546.5 1017.4L1554.5 1019.0 M1564.8 993.2L1565.7 1014.7 M1498.5 772.2L1484.5 794.1 M1607.7 1034.6L1595.2 1054.1 M1476.4 1061.1L1472.0 1062.0 M1445.3 1023.4L1449.2 1028.6 M1468.4 1025.4L1470.0 1017.4 M1577.5 805.9L1572.6 798.5 M1578.2 1021.0L1588.7 1019.0 M1474.4 1016.5L1478.0 1019.0 M1436.4 825.4L1437.4 818.9 M1499.4 819.7L1484.5 828.0 M1433.2 1031.8L1430.0 1049.9 M1582.7 1062.0L1579.1 1059.5 M1434.4 1076.2L1436.9 1099.5 M1577.5 1031.8L1581.7 1045.0 M1552.9 1027.0L1551.9 1033.5 M1461.9 832.4L1463.6 823.8 M1564.3 776.7L1561.0 794.1 M1520.5 1036.7L1521.3 1055.9 M1550.9 824.5L1556.1 820.6 M1522.7 863.4L1543.6 862.9 M1555.4 797.5L1552.9 801.1 M1579.1 1059.5L1578.2 1055.1 M1441.8 807.6L1437.4 818.9 M1587.1 835.0L1578.2 829.0 M1438.4 1062.0L1433.2 1065.9 M1551.9 807.6L1547.5 818.9 M1463.6 823.8L1471.0 818.9 M1579.1 799.5L1588.7 793.1 M1574.3 823.8L1581.7 818.9 M1438.3 864.1L1455.7 863.7 M1565.8 819.8L1561.0 828.0 M1438.4 802.0L1433.2 805.9 M1593.5 1028.6L1586.1 1033.5 M1482.8 1062.7L1475.4 1067.6 M1565.7 1014.7L1572.6 1024.4 M1564.8 969.8L1586.5 969.5 M1500.0 1054.3L1482.8 1062.7 M1444.4 1019.0L1450.9 1020.0 M1442.8 835.0L1438.4 835.9 M1450.9 1020.0L1463.6 1015.8 M1555.4 1057.5L1561.0 1054.1 M1503.1 842.5L1500.1 860.6 M1472.0 1027.9L1470.0 1017.4 M1544.0 795.1L1554.5 793.1 M1581.7 818.9L1590.3 820.6 M1471.0 1010.9L1479.6 1012.6 M1479.7 969.9L1500.7 969.6 M1458.8 837.6L1461.9 832.4 M1440.8 790.6L1444.4 793.1 M1544.9 799.5L1538.4 798.5 M1475.4 1067.6L1466.8 1065.9 M1415.5 774.9L1415.5 796.6 M1564.8 993.2L1587.7 991.8 M1586.1 1067.6L1577.5 1065.9 M1438.4 835.9L1434.8 833.4 M1585.1 1050.6L1590.3 1046.7 M1415.5 1013.0L1430.0 1015.8 M1548.5 835.9L1544.9 833.4 M1607.7 818.2L1593.5 802.7 M1543.6 883.0L1543.6 904.6 M1479.6 1012.6L1484.5 1020.0 M1459.5 794.5L1449.2 802.7 M1590.3 1012.6L1595.2 1020.0 M1566.2 1058.2L1559.3 1062.7 M1478.8 860.3L1482.8 836.6 M1577.5 1065.9L1572.6 1058.5 M1478.9 831.4L1478.0 827.0 M1544.9 833.4L1544.0 829.0 M1521.8 838.3L1538.4 832.4 M1434.8 1025.4L1433.9 1021.0 M1543.6 862.9L1551.9 841.5 M1520.6 793.9L1538.4 798.5 M1470.0 791.5L1463.6 789.9 M1559.3 802.7L1551.9 807.6 M1449.2 836.6L1441.8 841.5 M1438.4 1062.0L1436.4 1051.5 M1445.3 831.4L1436.4 825.4 M1587.1 835.0L1593.5 836.6 M1433.9 1021.0L1436.4 1017.4 M1543.3 1031.8L1540.1 1049.9 M1544.0 1021.0L1546.5 1017.4 M1438.4 802.0L1436.4 791.5 M1555.4 1057.5L1552.9 1061.1 M1585.1 790.6L1581.7 785.0 M1500.7 904.9L1522.0 905.0 M1441.8 841.5L1433.2 839.8 M1476.4 801.1L1470.0 791.5 M1472.0 1027.9L1475.4 1033.5 M1546.5 1017.4L1550.9 1016.5 M1478.0 827.0L1479.6 820.6 M1543.3 839.8L1538.4 832.4 M1579.1 1025.4L1577.5 1031.8 M1440.8 1050.6L1444.4 1053.1 M1544.9 1059.5L1538.4 1058.5 M1543.6 883.0L1565.2 883.2 M1478.9 1078.3L1475.4 1067.6 M1415.5 1077.9L1434.4 1076.2 M1593.5 836.6L1595.2 828.0 M1499.4 819.7L1503.1 842.5 M1428.3 1024.4L1430.0 1015.8 M1470.0 791.5L1478.0 793.1 M1467.5 1055.1L1461.9 1058.5 M1587.7 991.8L1607.7 991.3 M1500.0 1054.3L1521.3 1055.9 M1415.5 753.3L1415.5 774.9 M1457.1 777.4L1477.1 776.0 M1438.4 1062.0L1441.8 1067.6 M1543.6 862.9L1543.6 883.0 M1545.0 1080.1L1551.9 1067.6 M1438.4 802.0L1441.8 807.6 M1550.9 790.6L1554.5 793.1 M1580.7 1051.5L1574.3 1049.9 M1455.7 863.7L1458.0 883.0 M1458.8 837.6L1449.2 836.6 M1476.4 801.1L1475.4 807.6 M1500.9 883.3L1522.3 883.1 M1437.1 991.8L1459.2 994.1 M1586.5 969.5L1587.7 991.8 M1458.8 837.6L1466.8 839.8 M1544.9 799.5L1543.3 805.9 M1585.1 1050.6L1581.7 1045.0 M1456.4 1053.6L1463.6 1049.9 M1559.3 1028.6L1561.0 1020.0 M1458.0 883.0L1458.5 905.0 M1500.7 969.6L1501.5 993.8 M1582.7 802.0L1577.5 805.9 M1520.3 1012.6L1540.1 1015.8 M1430.0 789.9L1437.4 785.0 M1477.2 993.0L1479.6 1012.6 M1415.5 904.8L1415.5 926.4" fill="none" stroke="#000" stroke-width=".75"/>
</g>
<rect x="1415.5" y="753.3" width="192.20000000000005" height="346.20000000000005" fill="none" stroke="#222" stroke-width="1"/>
<circle cx="1439.6" cy="796.3" r="5.800" fill="#aaa"/>
<path d="M1433.8 790.8 L1438.6 774.8 L1445.3999999999999 790.8Z" fill="#000"/>
<text x="1439.6" y="799.1999999999999" font-size="8" text-anchor="middle" fill="#333">3</text>
<circle cx="1473.2" cy="796.3" r="5.800" fill="#aaa"/>
<path d="M1467.4 790.8 L1472.2 774.8 L1479.0 790.8Z" fill="#000"/>
<text x="1473.2" y="799.1999999999999" font-size="8" text-anchor="middle" fill="#333">4</text>
<circle cx="1549.7" cy="796.3" r="5.800" fill="#aaa"/>
<path d="M1543.9 790.8 L1548.7 774.8 L1555.5 790.8Z" fill="#000"/>
<text x="1549.7" y="799.1999999999999" font-size="8" text-anchor="middle" fill="#333">2</text>
<circle cx="1583.9" cy="796.3" r="5.800" fill="#aaa"/>
<path d="M1578.1000000000001 790.8 L1582.9 774.8 L1589.7 790.8Z" fill="#000"/>
<text x="1583.9" y="799.1999999999999" font-size="8" text-anchor="middle" fill="#333">1</text>
<circle cx="1439.6" cy="830.2" r="5.800" fill="#aaa"/>
<path d="M1433.8 824.7 L1438.6 808.7 L1445.3999999999999 824.7Z" fill="#000"/>
<text x="1439.6" y="833.1" font-size="8" text-anchor="middle" fill="#333">7</text>
<circle cx="1473.2" cy="830.2" r="5.800" fill="#aaa"/>
<path d="M1467.4 824.7 L1472.2 808.7 L1479.0 824.7Z" fill="#000"/>
<text x="1473.2" y="833.1" font-size="8" text-anchor="middle" fill="#333">8</text>
<circle cx="1549.7" cy="830.2" r="5.800" fill="#aaa"/>
<path d="M1543.9 824.7 L1548.7 808.7 L1555.5 824.7Z" fill="#000"/>
<text x="1549.7" y="833.1" font-size="8" text-anchor="middle" fill="#333">6</text>
<circle cx="1583.9" cy="830.2" r="5.800" fill="#000"/>
<path d="M1578.1000000000001 824.7 L1582.9 808.7 L1589.7 824.7Z" fill="#000"/>
<text x="1583.9" y="833.1" font-size="8" text-anchor="middle" fill="#fff">5</text>
<circle cx="1439.6" cy="1022.2" r="5.800" fill="#aaa"/>
<path d="M1433.8 1016.7 L1438.6 1000.7 L1445.3999999999999 1016.7Z" fill="#000"/>
<text x="1439.6" y="1025.1000000000001" font-size="8" text-anchor="middle" fill="#333">15</text>
<circle cx="1473.2" cy="1022.2" r="5.800" fill="#aaa"/>
<path d="M1467.4 1016.7 L1472.2 1000.7 L1479.0 1016.7Z" fill="#000"/>
<text x="1473.2" y="1025.1000000000001" font-size="8" text-anchor="middle" fill="#333">16</text>
<circle cx="1549.7" cy="1022.2" r="5.800" fill="#aaa"/>
<path d="M1543.9 1016.7 L1548.7 1000.7 L1555.5 1016.7Z" fill="#000"/>
<text x="1549.7" y="1025.1000000000001" font-size="8" text-anchor="middle" fill="#333">14</text>
<circle cx="1583.9" cy="1022.2" r="5.800" fill="#aaa"/>
<path d="M1578.1000000000001 1016.7 L1582.9 1000.7 L1589.7 1016.7Z" fill="#000"/>
<text x="1583.9" y="1025.1000000000001" font-size="8" text-anchor="middle" fill="#333">13</text>
<circle cx="1439.6" cy="1056.3" r="5.800" fill="#aaa"/>
<path d="M1433.8 1050.8 L1438.6 1034.8 L1445.3999999999999 1050.8Z" fill="#000"/>
<text x="1439.6" y="1059.2" font-size="8" text-anchor="middle" fill="#333">11</text>
<circle cx="1473.2" cy="1056.3" r="5.800" fill="#aaa"/>
<path d="M1467.4 1050.8 L1472.2 1034.8 L1479.0 1050.8Z" fill="#000"/>
<text x="1473.2" y="1059.2" font-size="8" text-anchor="middle" fill="#333">12</text>
<circle cx="1549.7" cy="1056.3" r="5.800" fill="#aaa"/>
<path d="M1543.9 1050.8 L1548.7 1034.8 L1555.5 1050.8Z" fill="#000"/>
<text x="1549.7" y="1059.2" font-size="8" text-anchor="middle" fill="#333">10</text>
<circle cx="1583.9" cy="1056.3" r="5.800" fill="#aaa"/>
<path d="M1578.1000000000001 1050.8 L1582.9 1034.8 L1589.7 1050.8Z" fill="#000"/>
<text x="1583.9" y="1059.2" font-size="8" text-anchor="middle" fill="#333">9</text>
<rect x="1423.3" y="811.5" width="33" height="35.500" rx="5" fill="none" stroke="#f00" stroke-width="3.300"/>
<rect x="1567.3" y="810" width="33" height="35.500" rx="5" fill="none" stroke="#f00" stroke-width="3.300"/>
<rect x="1424.3" y="1002" width="33" height="35.500" rx="5" fill="none" stroke="#f00" stroke-width="3.300"/>
<rect x="1567.3" y="1001" width="33" height="35.500" rx="5" fill="none" stroke="#f00" stroke-width="3.300"/>
</svg>
<svg class="abs" style="left:0;top:1120px" width="1920" height="32"><filter id="br2" x="0" y="0" width="100%" height="100%" color-interpolation-filters="sRGB"><feTurbulence type="fractalNoise" baseFrequency="0.004 0.95" numOctaves="4" seed="9"/><feColorMatrix type="matrix" values="0.5 0 0 0 -0.125  0.5 0 0 0 -0.125  0.5 0 0 0 -0.125  0 0 0 0 1"/></filter><rect width="1920" height="32" fill="#111" filter="url(#br2)"/></svg>
<div class="st" style="left:23px;color:#9a9a9a;">Design code:</div>
<div class="st" style="left:99px;color:#fff;font-weight:bold;letter-spacing:-.3px;">EN</div>
<div class="st" style="left:134px;color:#9a9a9a;">Analysis:</div>
<div class="st" style="left:185px;color:#fff;font-weight:bold;letter-spacing:-.3px;">Stress, strain</div>
<div class="st" style="left:276px;color:#9a9a9a;">Load effects:</div>
<div class="st" style="left:353px;color:#fff;font-weight:bold;letter-spacing:-.3px;">In equilibrium</div>
<div class="st" style="left:450px;color:#9a9a9a;">Units:</div>
<div class="st" style="left:490px;color:#fff;font-weight:bold;letter-spacing:-.3px;">mm</div>
<div class="st" style="left:1796px;color:#f26f21;font-size:12px;letter-spacing:-.1px">www.<span style="color:#fff">ideastatica</span>.com</div>
</body></html>
